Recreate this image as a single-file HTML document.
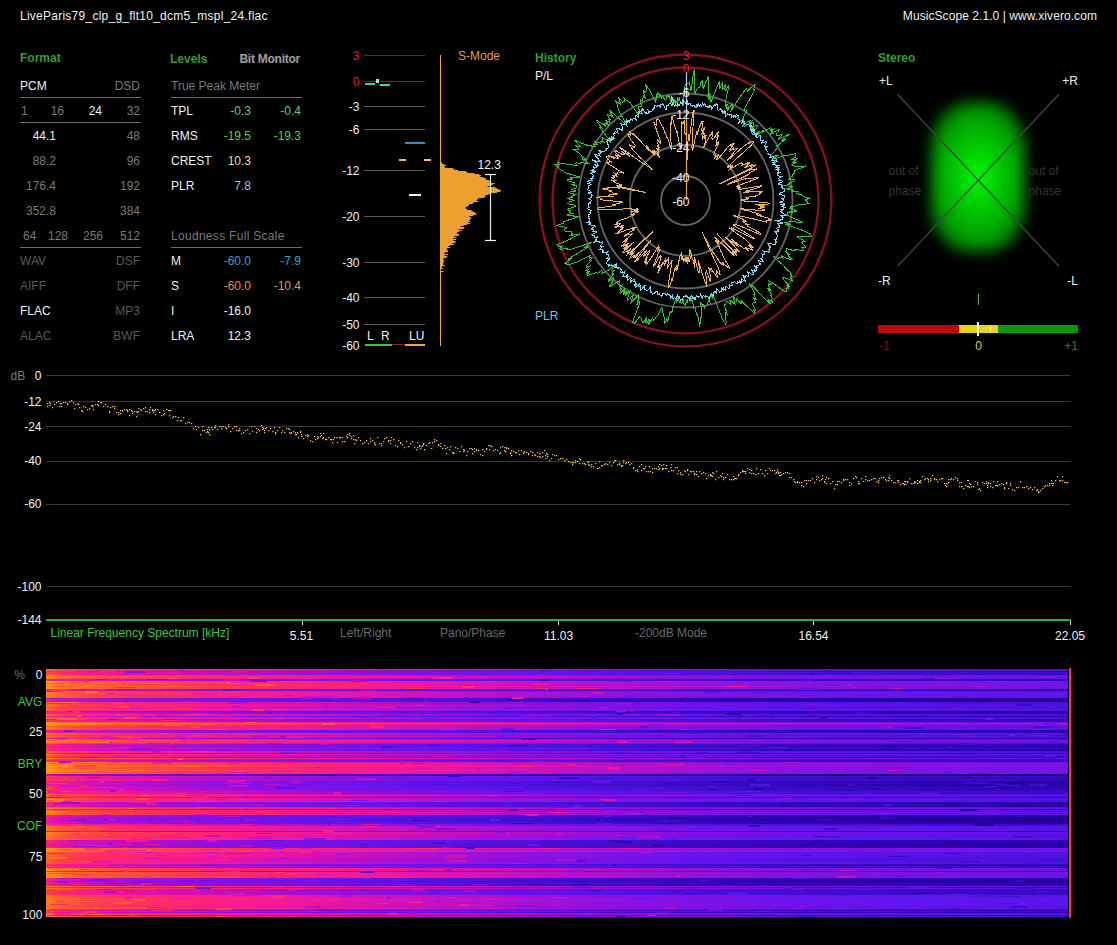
<!DOCTYPE html>
<html><head><meta charset="utf-8"><style>
html,body{margin:0;padding:0;background:#000;width:1117px;height:945px;overflow:hidden;}
body{position:relative;font-family:"Liberation Sans", sans-serif;}
.t{position:absolute;white-space:nowrap;}
.r{position:absolute;}
.s{position:absolute;overflow:visible;}
</style></head><body>
<div class="t" style="top:9.84px;font-size:12px;line-height:12px;color:#f0f0f0;letter-spacing:0.25px;left:20px;">LiveParis79_clp_g_flt10_dcm5_mspl_24.flac</div>
<div class="t" style="top:9.84px;font-size:12px;line-height:12px;color:#f0f0f0;letter-spacing:0.07px;right:20px;text-align:right;">MusicScope 2.1.0 | www.xivero.com</div>
<div class="t" style="top:51.84px;font-size:12px;line-height:12px;color:#2f9e2f;font-weight:bold;left:20px;">Format</div>
<div class="t" style="top:80.34px;font-size:12px;line-height:12px;color:#f0f0f0;left:20px;">PCM</div>
<div class="t" style="top:80.34px;font-size:12px;line-height:12px;color:#7a7a7a;right:977px;text-align:right;">DSD</div>
<div class="r" style="left:20px;top:97px;width:121px;height:1px;background:#6c6c6c;"></div>
<div class="t" style="top:104.84px;font-size:12px;line-height:12px;color:#7a7a7a;left:21px;">1</div>
<div class="t" style="top:104.84px;font-size:12px;line-height:12px;color:#7a7a7a;right:1053px;text-align:right;">16</div>
<div class="t" style="top:104.84px;font-size:12px;line-height:12px;color:#f0f0f0;right:1015px;text-align:right;">24</div>
<div class="t" style="top:104.84px;font-size:12px;line-height:12px;color:#7a7a7a;right:977px;text-align:right;">32</div>
<div class="r" style="left:20px;top:122px;width:121px;height:1px;background:#6c6c6c;"></div>
<div class="t" style="top:129.84px;font-size:12px;line-height:12px;color:#f0f0f0;right:1061px;text-align:right;">44.1</div>
<div class="t" style="top:129.84px;font-size:12px;line-height:12px;color:#7a7a7a;right:977px;text-align:right;">48</div>
<div class="t" style="top:154.84px;font-size:12px;line-height:12px;color:#7a7a7a;right:1061px;text-align:right;">88.2</div>
<div class="t" style="top:154.84px;font-size:12px;line-height:12px;color:#7a7a7a;right:977px;text-align:right;">96</div>
<div class="t" style="top:179.84px;font-size:12px;line-height:12px;color:#7a7a7a;right:1061px;text-align:right;">176.4</div>
<div class="t" style="top:179.84px;font-size:12px;line-height:12px;color:#7a7a7a;right:977px;text-align:right;">192</div>
<div class="t" style="top:204.84px;font-size:12px;line-height:12px;color:#7a7a7a;right:1061px;text-align:right;">352.8</div>
<div class="t" style="top:204.84px;font-size:12px;line-height:12px;color:#7a7a7a;right:977px;text-align:right;">384</div>
<div class="t" style="top:229.84px;font-size:12px;line-height:12px;color:#7a7a7a;left:23px;">64</div>
<div class="t" style="top:229.84px;font-size:12px;line-height:12px;color:#7a7a7a;right:1049px;text-align:right;">128</div>
<div class="t" style="top:229.84px;font-size:12px;line-height:12px;color:#7a7a7a;right:1014px;text-align:right;">256</div>
<div class="t" style="top:229.84px;font-size:12px;line-height:12px;color:#7a7a7a;right:977px;text-align:right;">512</div>
<div class="r" style="left:20px;top:247px;width:121px;height:1px;background:#6c6c6c;"></div>
<div class="t" style="top:254.84px;font-size:12px;line-height:12px;color:#5a5a5a;left:20px;">WAV</div>
<div class="t" style="top:254.84px;font-size:12px;line-height:12px;color:#5a5a5a;right:977px;text-align:right;">DSF</div>
<div class="t" style="top:279.84px;font-size:12px;line-height:12px;color:#5a5a5a;left:20px;">AIFF</div>
<div class="t" style="top:279.84px;font-size:12px;line-height:12px;color:#5a5a5a;right:977px;text-align:right;">DFF</div>
<div class="t" style="top:304.84px;font-size:12px;line-height:12px;color:#f0f0f0;left:20px;">FLAC</div>
<div class="t" style="top:304.84px;font-size:12px;line-height:12px;color:#5a5a5a;right:977px;text-align:right;">MP3</div>
<div class="t" style="top:329.84px;font-size:12px;line-height:12px;color:#5a5a5a;left:20px;">ALAC</div>
<div class="t" style="top:329.84px;font-size:12px;line-height:12px;color:#5a5a5a;right:977px;text-align:right;">BWF</div>
<div class="t" style="top:52.84px;font-size:12px;line-height:12px;color:#2f9e2f;font-weight:bold;left:170px;">Levels</div>
<div class="t" style="top:52.84px;font-size:12px;line-height:12px;color:#a0a0a0;font-weight:bold;letter-spacing:-0.25px;right:817px;text-align:right;">Bit Monitor</div>
<div class="t" style="top:80.34px;font-size:12px;line-height:12px;color:#7a7a7a;left:171px;">True Peak Meter</div>
<div class="r" style="left:171px;top:97px;width:131px;height:1px;background:#6c6c6c;"></div>
<div class="t" style="top:105.44px;font-size:12px;line-height:12px;color:#f0f0f0;left:171px;">TPL</div>
<div class="t" style="top:105.44px;font-size:12px;line-height:12px;color:#62c98a;right:866px;text-align:right;">-0.3</div>
<div class="t" style="top:105.44px;font-size:12px;line-height:12px;color:#62c98a;right:816px;text-align:right;">-0.4</div>
<div class="t" style="top:130.44px;font-size:12px;line-height:12px;color:#f0f0f0;left:171px;">RMS</div>
<div class="t" style="top:130.44px;font-size:12px;line-height:12px;color:#3fd84a;right:866px;text-align:right;">-19.5</div>
<div class="t" style="top:130.44px;font-size:12px;line-height:12px;color:#3fd84a;right:816px;text-align:right;">-19.3</div>
<div class="t" style="top:155.44px;font-size:12px;line-height:12px;color:#f0f0f0;left:171px;">CREST</div>
<div class="t" style="top:155.44px;font-size:12px;line-height:12px;color:#e8dca8;right:866px;text-align:right;">10.3</div>
<div class="t" style="top:180.44px;font-size:12px;line-height:12px;color:#f0f0f0;left:171px;">PLR</div>
<div class="t" style="top:180.44px;font-size:12px;line-height:12px;color:#8cc8ea;right:866px;text-align:right;">7.8</div>
<div class="t" style="top:229.54px;font-size:12px;line-height:12px;color:#7a7a7a;letter-spacing:0.3px;left:171px;">Loudness Full Scale</div>
<div class="r" style="left:171px;top:247px;width:131px;height:1px;background:#6c6c6c;"></div>
<div class="t" style="top:254.84px;font-size:12px;line-height:12px;color:#f0f0f0;left:171px;">M</div>
<div class="t" style="top:254.84px;font-size:12px;line-height:12px;color:#3a9fd4;right:866px;text-align:right;">-60.0</div>
<div class="t" style="top:254.84px;font-size:12px;line-height:12px;color:#3a9fd4;right:816px;text-align:right;">-7.9</div>
<div class="t" style="top:279.84px;font-size:12px;line-height:12px;color:#f0f0f0;left:171px;">S</div>
<div class="t" style="top:279.84px;font-size:12px;line-height:12px;color:#e0964e;right:866px;text-align:right;">-60.0</div>
<div class="t" style="top:279.84px;font-size:12px;line-height:12px;color:#e0964e;right:816px;text-align:right;">-10.4</div>
<div class="t" style="top:304.84px;font-size:12px;line-height:12px;color:#f0f0f0;left:171px;">I</div>
<div class="t" style="top:304.84px;font-size:12px;line-height:12px;color:#f0f0f0;right:866px;text-align:right;">-16.0</div>
<div class="t" style="top:329.84px;font-size:12px;line-height:12px;color:#f0f0f0;left:171px;">LRA</div>
<div class="t" style="top:329.84px;font-size:12px;line-height:12px;color:#f0f0f0;right:866px;text-align:right;">12.3</div>
<div class="t" style="top:50.04px;font-size:12px;line-height:12px;color:#e02020;right:757.5px;text-align:right;">3</div>
<div class="r" style="left:364px;top:55px;width:61px;height:1px;background:#8a1818;"></div>
<div class="t" style="top:76.14px;font-size:12px;line-height:12px;color:#e02020;right:757.5px;text-align:right;">0</div>
<div class="r" style="left:364px;top:81px;width:61px;height:1px;background:#8a1818;"></div>
<div class="t" style="top:101.14px;font-size:12px;line-height:12px;color:#f0f0f0;right:757.5px;text-align:right;">-3</div>
<div class="r" style="left:364px;top:106px;width:61px;height:1px;background:#5a5a5a;"></div>
<div class="t" style="top:124.34px;font-size:12px;line-height:12px;color:#f0f0f0;right:757.5px;text-align:right;">-6</div>
<div class="r" style="left:364px;top:129px;width:61px;height:1px;background:#5a5a5a;"></div>
<div class="t" style="top:165.34px;font-size:12px;line-height:12px;color:#f0f0f0;right:757.5px;text-align:right;">-12</div>
<div class="r" style="left:364px;top:170px;width:61px;height:1px;background:#5a5a5a;"></div>
<div class="t" style="top:211.24px;font-size:12px;line-height:12px;color:#f0f0f0;right:757.5px;text-align:right;">-20</div>
<div class="r" style="left:364px;top:216px;width:61px;height:1px;background:#5a5a5a;"></div>
<div class="t" style="top:257.44px;font-size:12px;line-height:12px;color:#f0f0f0;right:757.5px;text-align:right;">-30</div>
<div class="r" style="left:364px;top:262px;width:61px;height:1px;background:#5a5a5a;"></div>
<div class="t" style="top:292.34px;font-size:12px;line-height:12px;color:#f0f0f0;right:757.5px;text-align:right;">-40</div>
<div class="r" style="left:364px;top:297px;width:61px;height:1px;background:#5a5a5a;"></div>
<div class="t" style="top:319.24px;font-size:12px;line-height:12px;color:#f0f0f0;right:757.5px;text-align:right;">-50</div>
<div class="r" style="left:364px;top:324px;width:61px;height:1px;background:#5a5a5a;"></div>
<div class="t" style="top:339.84px;font-size:12px;line-height:12px;color:#f0f0f0;right:757.5px;text-align:right;">-60</div>
<div class="r" style="left:365px;top:83px;width:10px;height:2px;background:#3ad890;"></div>
<div class="r" style="left:380px;top:84px;width:10px;height:2px;background:#3ad890;"></div>
<div class="r" style="left:376px;top:79px;width:3px;height:4px;background:#9ee8e0;"></div>
<div class="r" style="left:405px;top:142px;width:20px;height:2px;background:#2a8fc0;"></div>
<div class="r" style="left:399px;top:159px;width:7px;height:2px;background:#e8b890;"></div>
<div class="r" style="left:424px;top:159px;width:7px;height:2px;background:#e8b890;"></div>
<div class="r" style="left:409px;top:194px;width:12px;height:2px;background:#f8f8f8;"></div>
<div class="t" style="top:329.54px;font-size:12px;line-height:12px;color:#f0f0f0;left:367px;">L</div>
<div class="t" style="top:329.54px;font-size:12px;line-height:12px;color:#f0f0f0;left:381px;">R</div>
<div class="t" style="top:329.54px;font-size:12px;line-height:12px;color:#f0f0f0;left:409px;">LU</div>
<div class="r" style="left:365px;top:344px;width:27px;height:2px;background:#3cc83c;"></div>
<div class="r" style="left:392px;top:344px;width:13px;height:1px;background:#7a2a2a;"></div>
<div class="r" style="left:405px;top:344px;width:20px;height:2px;background:#f0a838;"></div>
<div class="r" style="left:440px;top:55px;width:1px;height:291px;background:#e8a838;"></div>
<svg class="s" style="left:0;top:0" width="1117" height="945"><polygon points="441,161 441.0,161.0 441.0,162.0 441.9,162.0 441.9,163.0 442.2,163.0 442.2,164.0 444.5,164.0 444.5,165.0 445.8,165.0 445.8,166.0 444.2,166.0 444.2,167.0 445.1,167.0 445.1,168.0 453.2,168.0 453.2,169.0 454.4,169.0 454.4,170.0 458.3,170.0 458.3,171.0 466.1,171.0 466.1,172.0 467.5,172.0 467.5,173.0 474.5,173.0 474.5,174.0 478.9,174.0 478.9,175.0 480.9,175.0 480.9,176.0 479.8,176.0 479.8,177.0 483.4,177.0 483.4,178.0 485.8,178.0 485.8,179.0 486.1,179.0 486.1,180.0 489.1,180.0 489.1,181.0 490.7,181.0 490.7,182.0 489.6,182.0 489.6,183.0 494.7,183.0 494.7,184.0 492.7,184.0 492.7,185.0 490.1,185.0 490.1,186.0 487.7,186.0 487.7,187.0 495.3,187.0 495.3,188.0 496.9,188.0 496.9,189.0 499.2,189.0 499.2,190.0 501.0,190.0 501.0,191.0 500.3,191.0 500.3,192.0 497.2,192.0 497.2,193.0 490.5,193.0 490.5,194.0 488.5,194.0 488.5,195.0 485.1,195.0 485.1,196.0 485.8,196.0 485.8,197.0 483.9,197.0 483.9,198.0 478.7,198.0 478.7,199.0 477.5,199.0 477.5,200.0 476.6,200.0 476.6,201.0 478.5,201.0 478.5,202.0 473.8,202.0 473.8,203.0 472.7,203.0 472.7,204.0 469.0,204.0 469.0,205.0 468.9,205.0 468.9,206.0 467.1,206.0 467.1,207.0 465.8,207.0 465.8,208.0 465.8,208.0 465.8,209.0 467.2,209.0 467.2,210.0 471.4,210.0 471.4,211.0 472.9,211.0 472.9,212.0 475.0,212.0 475.0,213.0 475.5,213.0 475.5,214.0 476.5,214.0 476.5,215.0 473.3,215.0 473.3,216.0 469.2,216.0 469.2,217.0 471.1,217.0 471.1,218.0 470.4,218.0 470.4,219.0 470.5,219.0 470.5,220.0 469.1,220.0 469.1,221.0 470.2,221.0 470.2,222.0 468.1,222.0 468.1,223.0 470.4,223.0 470.4,224.0 467.2,224.0 467.2,225.0 463.8,225.0 463.8,226.0 460.8,226.0 460.8,227.0 464.1,227.0 464.1,228.0 464.1,228.0 464.1,229.0 458.9,229.0 458.9,230.0 461.7,230.0 461.7,231.0 459.0,231.0 459.0,232.0 457.0,232.0 457.0,233.0 457.0,233.0 457.0,234.0 458.9,234.0 458.9,235.0 458.9,235.0 458.9,236.0 454.3,236.0 454.3,237.0 456.6,237.0 456.6,238.0 453.3,238.0 453.3,239.0 456.1,239.0 456.1,240.0 453.5,240.0 453.5,241.0 455.6,241.0 455.6,242.0 455.4,242.0 455.4,243.0 452.4,243.0 452.4,244.0 454.2,244.0 454.2,245.0 450.0,245.0 450.0,246.0 448.3,246.0 448.3,247.0 450.3,247.0 450.3,248.0 446.9,248.0 446.9,249.0 447.2,249.0 447.2,250.0 447.6,250.0 447.6,251.0 448.1,251.0 448.1,252.0 445.3,252.0 445.3,253.0 444.2,253.0 444.2,254.0 447.8,254.0 447.8,255.0 444.6,255.0 444.6,256.0 447.3,256.0 447.3,257.0 446.5,257.0 446.5,258.0 443.4,258.0 443.4,259.0 443.6,259.0 443.6,260.0 443.7,260.0 443.7,261.0 444.0,261.0 444.0,262.0 443.6,262.0 443.6,263.0 443.2,263.0 443.2,264.0 443.3,264.0 443.3,265.0 444.6,265.0 444.6,266.0 442.3,266.0 442.3,267.0 441.7,267.0 441.7,268.0 442.9,268.0 442.9,269.0 441.0,269.0 441.0,270.0 441.0,270.0 441.0,271.0 443.5,271.0 443.5,272.0 441,272" fill="#eba030"/><g stroke="#f0f0f0" stroke-width="1.2"><line x1="490.5" y1="174" x2="490.5" y2="240.5"/><line x1="485" y1="174.5" x2="496" y2="174.5"/><line x1="485" y1="240.5" x2="496" y2="240.5"/></g></svg>
<div class="t" style="top:159.34px;font-size:12px;line-height:12px;color:#f0f0f0;left:477.5px;">12.3</div>
<div class="t" style="top:49.84px;font-size:12px;line-height:12px;color:#e09a58;left:458px;">S-Mode</div>
<div class="t" style="top:51.84px;font-size:12px;line-height:12px;color:#2f9e2f;font-weight:bold;left:535px;">History</div>
<div class="t" style="top:69.64px;font-size:12px;line-height:12px;color:#f0f0f0;left:535px;">P/L</div>
<div class="t" style="top:310.14px;font-size:12px;line-height:12px;color:#7cc0e8;left:535px;">PLR</div>
<svg class="s" style="left:0;top:0" width="1117" height="945"><circle cx="685.5" cy="200.5" r="146" fill="none" stroke="#84121e" stroke-width="2.4"/><circle cx="685.5" cy="200.5" r="133" fill="none" stroke="#84121e" stroke-width="2.4"/><circle cx="685.5" cy="200.5" r="107" fill="none" stroke="#626662" stroke-width="1.8"/><circle cx="685.5" cy="200.5" r="88" fill="none" stroke="#626662" stroke-width="1.8"/><circle cx="685.5" cy="200.5" r="55.5" fill="none" stroke="#626662" stroke-width="1.8"/><circle cx="685.5" cy="200.5" r="24.5" fill="none" stroke="#626662" stroke-width="1.8"/><polyline points="685.5,83.9 686.5,84.5 687.5,83.7 688.6,84.0 689.7,81.4 690.3,90.6 691.3,89.3 693.3,73.7 694.7,69.5 694.5,85.6 694.9,93.5 696.1,90.5 697.3,88.3 698.4,87.5 699.4,87.6 701.1,82.3 702.3,81.3 702.6,86.1 703.2,88.8 705.0,83.8 706.5,81.5 708.6,75.9 708.4,82.5 709.0,85.2 707.8,95.5 709.1,93.9 708.7,99.9 711.0,94.5 710.5,100.1 710.7,103.2 714.1,93.9 717.0,86.8 719.9,80.7 719.3,86.3 719.8,88.4 722.8,82.3 722.8,85.8 722.9,88.6 725.6,84.1 724.9,89.1 725.4,90.7 728.1,86.5 728.3,89.0 726.2,97.1 725.7,101.1 725.2,104.6 725.5,106.3 727.6,103.8 726.1,109.2 728.5,106.1 727.5,110.4 730.6,106.0 732.6,103.9 732.5,106.2 730.6,112.0 737.9,99.9 742.1,94.0 746.4,88.4 747.0,89.5 747.3,91.3 750.3,88.2 752.6,86.5 755.5,83.9 753.3,89.8 754.8,89.7 747.9,102.5 743.6,111.1 745.9,109.3 746.1,110.6 746.2,112.1 742.0,119.9 744.1,118.4 741.5,123.4 743.3,122.5 743.5,123.5 742.7,125.9 746.3,122.7 748.6,121.1 750.5,120.3 749.0,123.5 752.0,121.2 750.8,124.0 753.4,122.3 753.5,123.6 753.6,124.9 750.6,129.5 755.6,125.4 756.6,125.6 757.5,126.0 756.2,128.6 753.3,132.7 752.5,134.6 754.5,133.9 757.7,132.0 759.0,131.9 757.4,134.7 763.5,130.3 763.1,131.9 766.9,129.8 770.8,127.6 771.4,128.4 770.2,130.6 773.7,129.1 771.6,132.0 770.3,134.3 776.8,130.4 779.4,129.7 777.5,132.4 776.2,134.6 776.9,135.3 778.2,135.6 782.0,134.2 781.0,136.1 778.0,139.3 784.4,136.3 789.8,134.1 781.2,140.7 785.9,139.0 779.8,143.8 777.0,146.6 777.3,147.5 776.6,149.0 774.7,151.1 773.3,152.8 770.2,155.5 770.3,156.3 772.1,156.4 775.3,155.7 777.4,155.7 772.3,159.1 775.7,158.4 783.9,155.6 786.0,155.7 791.8,154.3 795.6,153.8 795.0,155.2 795.5,156.1 795.2,157.3 791.2,159.9 796.6,159.0 795.3,160.5 792.8,162.5 796.7,162.2 791.5,165.0 793.5,165.4 794.1,166.3 796.5,166.6 799.0,166.9 806.3,165.9 796.0,169.9 794.1,171.4 794.3,172.4 794.5,173.3 791.9,175.0 792.7,175.8 791.1,177.1 790.8,178.1 789.0,179.4 793.3,179.5 795.0,180.2 792.8,181.6 788.5,183.3 789.5,184.0 785.3,185.6 788.1,186.1 792.4,186.4 791.5,187.5 786.9,188.9 788.1,189.7 793.8,190.1 792.2,191.2 798.7,191.6 798.6,192.6 795.7,193.8 801.6,194.4 801.8,195.4 803.9,196.4 806.0,197.3 810.0,198.3 806.1,199.4 805.5,200.5 807.9,201.6 807.6,202.6 809.0,203.7 801.2,204.5 796.2,205.3 794.6,206.2 789.9,206.9 793.3,208.0 790.1,208.7 794.4,210.0 797.3,211.3 790.1,211.5 792.3,212.7 787.2,213.0 787.7,214.0 785.0,214.5 789.1,216.0 791.0,217.2 794.7,218.8 799.8,220.7 801.5,222.0 796.2,222.0 789.9,221.8 786.9,222.1 784.3,222.4 790.6,224.8 784.9,224.4 798.9,228.8 804.4,231.3 808.8,233.5 811.7,235.5 811.0,236.5 806.7,236.4 804.0,236.7 800.1,236.6 796.7,236.6 802.2,239.6 805.4,241.8 802.4,241.9 801.7,242.8 804.0,244.8 805.9,246.7 805.4,247.7 801.5,247.4 803.7,249.5 803.6,250.6 800.0,250.3 794.9,249.2 795.8,250.7 791.9,250.1 786.1,248.5 786.9,249.9 787.0,251.1 785.7,251.5 788.9,254.3 787.7,254.8 789.3,256.8 791.8,259.4 789.8,259.5 781.8,256.1 783.0,257.9 779.9,257.2 778.7,257.6 778.4,258.5 773.3,256.4 776.2,259.4 782.6,264.7 785.5,268.0 790.3,272.5 791.0,274.4 792.5,276.8 790.3,276.7 791.1,278.7 792.4,281.1 787.1,278.5 784.4,277.8 782.7,277.8 784.3,280.5 789.5,286.3 786.6,285.4 788.9,288.8 786.3,288.1 786.1,289.5 786.6,291.5 785.0,291.7 778.6,287.3 772.1,282.7 769.1,281.2 771.1,284.6 768.8,283.8 768.5,284.9 768.7,286.6 771.3,290.9 767.3,288.2 771.9,294.8 770.9,295.3 772.1,298.4 771.7,299.6 772.1,301.8 768.5,299.5 770.6,303.8 765.7,299.5 758.2,291.9 752.2,285.8 748.7,282.8 753.8,291.2 754.9,294.3 754.0,294.8 756.3,299.8 753.1,297.1 755.6,302.5 754.0,302.1 753.1,302.6 752.7,304.1 755.5,310.3 753.9,310.0 754.7,313.3 751.6,310.6 748.8,308.0 746.2,305.6 743.5,303.1 740.7,300.1 741.7,303.9 739.8,302.5 736.3,298.1 736.7,301.0 733.7,297.1 733.8,299.5 735.0,304.2 732.9,302.3 731.0,300.3 729.9,300.3 731.0,305.1 728.9,302.7 727.4,301.8 726.4,301.7 726.0,303.4 725.3,304.3 724.6,305.1 727.3,315.4 725.2,312.7 725.4,316.4 726.3,322.5 725.7,324.2 723.6,321.4 719.5,311.6 715.2,300.6 712.8,295.8 712.6,298.3 711.0,295.6 710.5,297.2 709.5,296.9 710.0,302.4 708.6,300.7 708.0,302.1 707.7,304.8 706.8,305.4 706.0,306.1 705.1,306.3 704.4,307.7 702.9,304.2 702.1,305.3 700.7,302.1 702.0,317.9 700.9,317.8 700.2,320.4 699.9,327.1 697.5,314.3 696.5,314.5 694.8,307.1 693.9,307.9 692.6,301.9 691.6,299.5 690.8,301.8 689.8,298.9 688.9,297.4 688.1,298.0 687.3,303.4 686.4,300.5 685.5,305.6 684.6,304.5 683.7,303.3 682.9,298.3 681.9,303.3 681.0,303.1 680.3,300.4 679.2,302.9 678.7,297.6 677.8,298.5 676.6,302.4 676.0,298.7 674.9,301.7 673.5,305.6 671.8,312.3 671.0,311.0 669.7,313.0 667.3,322.3 666.7,319.3 664.8,323.9 664.7,318.6 663.9,317.0 663.6,313.3 662.7,312.5 662.5,308.8 661.7,308.0 660.1,310.5 657.8,315.8 656.7,316.0 654.7,319.7 653.4,320.4 652.9,318.2 651.1,320.3 648.7,324.8 649.3,319.0 647.0,322.6 645.8,322.8 646.3,317.5 643.6,322.2 642.3,322.5 641.9,320.3 641.5,318.2 640.4,317.9 639.9,316.3 637.4,319.6 634.7,323.1 633.7,322.5 632.3,322.9 639.0,304.9 639.6,301.3 636.9,304.7 638.3,299.5 638.3,297.2 638.3,295.2 636.2,297.2 633.8,299.9 631.2,302.5 631.9,299.3 633.3,294.7 630.3,298.1 627.8,300.4 627.1,299.6 628.4,295.6 629.9,291.3 628.1,292.3 625.1,295.3 626.8,290.8 623.2,294.6 624.0,291.6 625.3,288.1 620.7,293.1 619.5,293.0 621.6,288.5 619.7,289.4 621.7,285.2 619.3,286.8 619.2,285.3 618.6,284.5 619.5,282.0 619.5,280.6 616.5,282.7 614.6,283.5 610.9,286.3 609.3,286.6 612.8,281.3 613.1,279.5 613.2,278.0 608.9,281.2 608.4,280.4 614.1,273.2 611.3,274.7 614.1,270.7 612.1,271.4 611.9,270.4 615.7,265.6 614.0,266.0 607.4,270.9 604.2,272.4 601.8,273.3 602.5,271.4 601.7,270.8 597.5,273.1 596.5,272.6 593.5,273.6 591.2,274.1 587.8,275.4 586.9,274.8 589.5,271.5 586.7,272.3 588.1,270.0 585.4,270.6 590.7,265.6 586.1,267.5 586.0,266.3 588.2,263.7 591.0,260.7 589.6,260.4 592.5,257.5 589.6,258.1 589.8,256.9 590.3,255.5 576.7,262.1 570.4,264.3 567.5,264.6 566.3,263.9 564.9,263.3 571.5,258.6 567.6,259.3 580.1,251.9 588.3,246.8 585.5,247.1 588.0,244.9 591.9,242.2 580.5,246.1 568.8,250.0 567.0,249.6 567.5,248.2 562.0,249.2 559.5,248.9 561.5,246.9 557.7,247.0 559.0,245.3 557.2,244.7 570.7,238.9 575.7,236.2 579.9,233.8 569.5,236.0 572.4,234.0 571.5,233.2 572.0,232.0 571.7,231.0 566.1,231.4 564.4,230.7 564.1,229.6 566.7,227.9 564.3,227.4 563.2,226.5 559.5,226.1 556.6,225.6 564.3,223.0 562.9,222.1 568.2,220.1 575.5,217.9 580.0,216.3 574.2,216.1 570.5,215.6 566.8,215.1 572.3,213.4 570.4,212.6 569.3,211.7 570.1,210.6 567.2,209.8 568.9,208.7 573.2,207.4 575.5,206.3 575.8,205.3 570.6,204.5 567.9,203.6 569.5,202.5 569.4,201.5 574.8,200.5 570.7,199.5 567.1,198.4 572.5,197.5 571.8,196.5 573.1,195.6 575.8,194.7 572.2,193.6 568.2,192.3 572.6,191.6 576.0,190.9 571.9,189.6 573.5,188.7 576.1,188.0 576.6,187.1 577.1,186.2 570.7,184.4 575.2,184.0 574.6,182.9 568.3,180.9 567.5,179.7 573.2,179.7 570.3,178.1 571.9,177.4 575.9,177.2 580.2,177.2 565.2,172.7 563.0,171.1 558.9,168.9 557.9,167.5 558.5,166.5 554.4,164.2 559.5,164.4 557.1,162.5 566.8,164.2 572.8,165.0 577.2,165.3 575.9,163.8 576.0,162.8 580.4,163.3 580.8,162.4 586.7,163.5 588.9,163.4 583.8,160.4 582.6,158.9 586.7,159.6 581.0,156.1 581.5,155.3 579.7,153.4 573.1,149.3 575.9,149.4 578.6,149.5 578.3,148.2 575.1,145.5 580.1,146.8 579.6,145.3 577.0,142.8 574.3,140.1 583.4,143.9 588.9,145.8 590.8,145.8 594.5,146.9 595.4,146.4 592.7,143.6 596.5,144.9 597.6,144.5 594.6,141.4 598.1,142.6 600.7,143.3 601.5,142.8 600.7,141.2 604.8,142.9 602.0,139.8 602.8,139.3 601.3,137.0 606.5,139.9 610.6,142.0 610.4,140.8 606.1,136.2 604.7,133.9 602.5,130.8 599.9,127.4 602.0,127.9 598.0,123.1 596.4,120.3 601.0,123.1 605.7,126.1 604.5,123.6 606.1,123.8 609.4,125.7 605.2,120.2 607.9,121.6 610.1,122.5 608.6,119.5 610.0,119.5 607.1,114.9 608.2,114.6 610.5,115.7 612.9,117.0 610.6,112.8 609.6,110.1 615.2,115.2 619.2,118.6 622.9,121.8 624.5,122.5 625.7,122.5 621.2,115.1 618.8,110.3 617.7,107.2 617.5,105.2 615.5,100.6 618.5,103.0 620.6,104.3 619.9,101.5 618.6,97.5 622.7,102.0 623.5,101.2 624.9,101.6 624.1,98.2 626.7,100.7 628.0,101.0 630.4,103.0 635.9,111.1 639.0,114.8 637.8,110.7 640.4,113.8 638.8,108.9 638.6,106.5 639.5,106.1 640.9,107.0 641.7,106.6 640.7,102.2 640.4,99.2 642.4,101.3 642.9,100.3 643.0,97.9 643.2,95.7 645.5,99.0 643.0,89.9 645.2,92.7 645.7,91.2 646.6,90.5 645.5,84.4 647.6,87.3 649.6,90.0 652.9,97.1 655.2,101.4 655.5,99.1 656.5,99.4 656.1,94.4 657.5,96.1 657.7,93.2 659.3,95.2 660.1,94.7 661.9,98.2 662.2,95.3 663.7,98.1 665.1,100.2 666.0,99.9 666.6,98.4 667.0,95.6 668.1,96.3 668.8,94.9 670.8,102.2 671.6,101.8 672.8,104.3 673.5,102.7 673.9,98.7 675.4,104.1 675.9,100.7 677.0,102.8 677.4,98.0 678.5,99.7 679.2,97.8 680.4,103.0 681.2,102.8 682.1,103.2 683.0,106.4 683.7,98.5 684.5,87.9 685.5,83.9" fill="none" stroke="#38c038" stroke-width="1" shape-rendering="optimizeSpeed"/><polyline points="685.5,103.0 686.3,103.7 687.2,100.4 688.0,104.8 688.9,103.5 689.8,103.0 690.5,104.9 691.3,105.6 692.1,105.5 692.9,106.2 693.8,105.5 694.6,106.0 695.3,107.4 696.4,105.1 696.9,107.3 698.3,103.0 698.8,105.6 699.6,106.1 700.7,104.7 701.2,106.7 702.7,103.1 703.1,105.8 704.3,103.6 705.1,104.4 705.5,106.3 706.3,106.9 707.2,106.6 707.8,107.7 709.2,105.6 709.7,106.9 710.8,105.9 711.6,106.3 711.7,109.1 713.3,106.5 715.0,104.2 715.5,105.4 716.9,103.8 717.4,105.0 717.8,106.6 717.8,109.4 718.2,110.7 719.4,109.9 720.7,108.9 721.5,109.1 721.5,111.3 722.8,110.3 722.5,113.3 724.9,109.9 723.9,114.2 725.9,111.8 725.8,114.1 725.8,116.1 727.8,113.8 728.5,114.3 729.5,114.1 729.9,115.2 731.2,114.6 731.7,115.4 731.7,117.2 733.8,115.0 733.9,116.7 736.0,114.8 735.0,118.1 737.5,115.6 738.4,115.8 737.9,118.2 738.1,119.4 739.2,119.3 739.2,120.9 738.8,123.0 741.5,120.5 742.3,120.9 742.0,122.8 744.1,121.3 744.4,122.3 745.1,122.9 743.7,126.0 744.4,126.4 747.3,124.1 748.3,124.3 749.9,123.8 750.7,124.2 749.4,126.9 751.4,126.0 750.8,128.0 750.0,130.1 750.9,130.4 753.7,128.7 751.1,132.6 755.1,129.7 753.0,133.0 754.8,132.4 753.6,134.7 754.7,134.8 757.0,133.8 755.2,136.7 756.3,136.7 756.4,137.8 760.5,135.3 760.0,136.9 761.1,137.1 760.1,139.0 760.4,139.8 760.8,140.6 761.7,141.0 763.2,140.9 761.0,143.6 764.4,142.1 766.1,141.9 766.2,142.9 765.6,144.4 764.4,146.3 765.2,146.7 766.8,146.7 765.1,148.8 765.0,149.9 766.6,149.8 766.6,150.8 767.1,151.4 767.0,152.5 767.0,153.4 768.3,153.7 768.7,154.4 769.8,154.7 771.0,155.0 770.5,156.2 769.6,157.7 773.2,156.8 773.4,157.6 774.3,158.1 772.0,160.2 773.4,160.4 776.6,159.9 773.3,162.3 776.2,162.0 773.3,164.1 775.5,164.1 775.1,165.2 775.9,165.8 778.4,165.8 775.4,167.8 779.7,167.1 776.9,169.0 779.8,169.0 778.1,170.4 779.0,171.0 777.8,172.3 780.3,172.4 777.0,174.3 777.4,175.0 778.7,175.5 779.2,176.3 781.5,176.6 778.5,178.2 778.9,178.9 779.4,179.7 778.8,180.7 781.8,180.9 782.4,181.7 779.4,183.1 778.6,184.1 781.7,184.4 782.1,185.2 781.1,186.2 782.4,186.9 781.6,187.9 784.7,188.3 784.2,189.3 784.7,190.1 784.6,191.0 782.8,192.0 780.6,193.0 779.5,193.9 780.3,194.7 784.1,195.3 784.5,196.2 784.9,197.0 784.6,197.9 781.5,198.8 783.4,199.6 783.8,200.5 782.0,201.3 780.1,202.2 782.6,203.0 785.1,204.0 781.4,204.7 784.3,205.7 781.3,206.4 784.9,207.4 783.0,208.2 783.4,209.1 781.1,209.7 782.8,210.7 780.6,211.3 782.1,212.4 782.1,213.2 784.7,214.4 785.5,215.5 780.9,215.6 782.0,216.6 783.2,217.7 782.8,218.5 782.5,219.4 780.6,219.9 781.0,220.8 774.4,220.2 782.9,223.0 779.9,223.2 777.1,223.3 778.4,224.5 778.9,225.5 779.9,226.7 779.4,227.4 778.2,227.9 776.1,228.2 778.2,229.7 778.0,230.6 778.1,231.5 775.0,231.3 776.4,232.7 776.3,233.5 776.6,234.6 777.5,235.8 777.3,236.7 776.8,237.4 776.0,238.0 776.5,239.1 774.3,239.1 775.0,240.3 776.8,242.1 775.4,242.4 775.9,243.6 775.3,244.3 773.4,244.3 769.8,243.4 768.0,243.5 768.4,244.6 769.7,246.2 770.8,247.8 769.5,248.0 769.7,249.1 768.4,249.4 769.6,251.0 769.0,251.7 768.3,252.2 764.9,251.1 763.3,251.0 764.7,252.9 764.6,253.9 764.6,254.9 762.0,254.1 762.4,255.3 762.5,256.5 762.7,257.6 762.1,258.2 760.8,258.3 763.9,261.7 761.9,261.3 760.3,261.1 758.1,260.4 759.7,262.8 760.4,264.5 759.3,264.6 758.9,265.4 757.0,264.9 756.5,265.5 757.1,267.3 754.1,265.6 756.5,269.1 756.8,270.5 754.8,269.8 755.2,271.4 753.1,270.5 751.3,269.8 753.5,273.4 753.3,274.5 752.5,274.9 749.1,272.4 747.3,271.6 748.7,274.5 748.8,275.9 748.0,276.3 746.4,275.7 745.3,275.7 745.7,277.5 742.8,275.2 744.9,279.4 745.3,281.3 743.3,280.1 741.3,278.8 742.2,281.5 741.6,282.1 739.3,280.3 740.2,283.1 738.8,282.6 737.2,281.7 737.4,283.6 736.0,283.0 734.4,281.8 733.7,282.4 732.6,282.1 731.7,282.2 732.4,285.2 731.6,285.4 731.1,286.2 729.5,285.0 729.7,287.3 729.3,288.4 728.6,288.8 726.3,286.1 725.4,286.0 725.5,288.3 725.7,290.8 723.9,288.7 723.9,290.9 721.6,287.7 721.4,289.3 721.2,291.1 720.2,291.0 719.8,292.1 718.1,290.1 716.8,288.8 717.0,292.0 716.6,293.5 715.0,291.2 714.7,293.0 713.6,292.5 713.7,295.8 712.6,295.0 711.4,294.0 710.7,294.4 710.2,295.9 709.5,296.7 709.1,298.6 707.7,296.8 706.7,296.2 705.7,295.7 705.2,297.3 704.0,295.9 703.1,295.5 702.7,298.2 701.7,297.3 700.2,293.5 699.9,297.0 699.0,296.5 698.3,297.7 697.3,296.3 696.3,295.6 695.8,298.8 695.1,299.9 694.0,297.6 693.2,299.0 692.2,296.7 691.3,295.5 690.5,296.8 689.8,299.9 688.9,296.9 688.0,297.4 687.2,296.7 686.3,295.4 685.5,295.8 684.7,297.0 683.8,296.9 683.0,297.8 682.0,299.4 681.1,300.2 680.3,300.5 679.6,296.5 678.7,297.1 677.9,296.7 677.2,295.0 676.1,298.4 675.2,298.7 674.5,297.5 673.4,299.3 672.6,298.6 672.2,295.2 670.9,298.3 670.4,295.7 669.5,295.9 669.0,294.3 668.1,294.5 667.4,293.8 666.3,295.1 665.7,293.9 664.9,293.4 664.1,293.0 663.2,293.3 661.7,296.0 661.1,295.0 660.1,295.2 659.6,293.9 658.7,294.0 657.6,294.8 657.6,291.6 657.0,290.8 655.9,291.6 654.4,293.4 653.6,293.1 652.3,294.2 652.0,292.6 651.5,291.5 650.3,292.1 650.4,289.7 650.9,286.1 648.6,289.6 647.4,290.2 646.1,291.0 645.9,289.5 645.2,289.0 644.2,289.0 645.2,284.9 643.1,287.5 640.8,290.1 640.8,288.3 640.6,286.7 640.2,285.7 638.8,286.5 639.1,284.2 637.4,285.6 635.7,286.8 636.1,284.3 634.5,285.4 635.6,281.9 634.7,281.8 633.7,281.8 634.5,279.1 632.8,280.0 630.5,282.1 630.6,280.4 631.2,278.0 630.5,277.6 627.8,280.0 627.5,278.9 628.2,276.5 626.7,277.1 627.3,275.0 625.1,276.5 624.0,276.4 622.6,276.9 624.7,272.9 624.9,271.5 622.3,273.2 622.2,272.1 620.7,272.5 621.1,270.8 621.1,269.6 620.6,268.9 620.0,268.3 619.8,267.4 617.6,268.4 617.8,267.0 616.0,267.6 616.5,266.0 615.0,266.2 616.6,263.6 613.2,265.6 611.8,265.7 611.3,265.0 608.3,266.4 609.3,264.4 608.0,264.4 607.1,264.0 606.9,263.1 606.7,262.1 609.8,258.6 609.8,257.6 607.0,258.6 607.8,257.0 609.0,255.1 607.9,254.8 607.0,254.5 606.7,253.7 607.9,251.9 604.6,253.0 603.2,252.9 602.5,252.3 603.8,250.6 602.1,250.6 602.1,249.6 600.7,249.4 599.5,249.2 603.4,246.0 600.7,246.5 600.5,245.7 602.4,243.8 601.9,243.1 602.4,241.9 599.7,242.4 599.4,241.6 596.8,241.9 594.2,242.1 596.5,240.1 596.0,239.4 597.2,238.0 597.4,237.0 594.0,237.5 594.0,236.5 594.5,235.4 592.8,235.2 592.0,234.5 596.7,232.0 594.7,231.8 593.1,231.4 594.0,230.2 592.9,229.7 591.4,229.3 592.1,228.2 595.2,226.4 594.6,225.7 591.6,225.7 591.1,224.9 588.6,224.7 590.4,223.3 590.1,222.5 587.8,222.2 589.9,220.8 589.6,220.0 589.7,219.1 589.0,218.4 588.2,217.7 589.3,216.6 588.4,215.9 588.3,215.0 590.5,213.8 590.8,213.0 589.7,212.3 590.3,211.3 591.1,210.4 589.3,209.8 587.8,209.0 587.7,208.2 589.1,207.2 588.4,206.4 588.5,205.6 588.3,204.7 588.7,203.9 591.2,203.0 589.7,202.2 590.8,201.3 591.7,200.5 590.6,199.7 588.9,198.8 590.3,198.0 591.8,197.2 591.2,196.4 592.0,195.6 591.6,194.8 591.1,193.9 587.7,192.8 591.3,192.3 590.5,191.4 588.1,190.3 587.7,189.4 588.1,188.5 588.5,187.7 588.4,186.8 587.9,185.9 588.9,185.2 591.4,184.8 588.4,183.4 590.1,182.8 587.7,181.5 588.7,180.8 592.6,180.8 591.9,179.8 590.9,178.7 593.2,178.3 592.3,177.3 592.6,176.5 593.6,175.9 593.0,174.8 590.4,173.2 591.4,172.6 594.2,172.6 591.7,170.9 594.9,171.1 592.5,169.4 594.1,169.0 594.2,168.2 593.6,167.0 596.2,167.1 597.3,166.6 595.2,164.9 598.3,165.3 597.6,164.1 596.7,162.8 591.7,159.7 597.9,161.5 600.3,161.7 598.3,159.9 598.3,158.9 596.4,157.1 595.2,155.5 594.9,154.3 600.2,156.1 599.6,154.8 598.8,153.4 600.2,153.2 601.3,152.9 599.0,150.5 602.1,151.4 604.5,151.8 604.9,151.1 605.3,150.4 606.7,150.3 606.0,148.9 607.5,148.8 607.7,148.0 609.0,147.9 608.9,146.9 608.7,145.7 607.6,143.9 607.3,142.6 606.5,141.0 607.9,141.0 607.9,139.9 610.7,141.0 611.5,140.6 609.9,138.2 613.3,139.9 611.0,136.8 614.0,138.3 613.2,136.5 614.0,136.1 614.1,135.1 613.7,133.6 615.1,133.7 614.9,132.3 615.3,131.5 618.0,133.0 617.9,131.7 616.2,128.7 617.7,129.0 618.5,128.6 620.5,129.5 622.7,130.7 622.2,128.9 622.1,127.6 622.5,126.8 621.0,123.6 622.5,124.1 624.0,124.6 624.2,123.4 627.0,125.6 626.7,123.9 625.9,121.4 627.4,122.0 626.7,119.6 629.4,121.8 629.3,120.3 630.6,120.6 630.7,119.2 632.5,120.4 632.9,119.4 633.3,118.5 634.4,118.8 636.3,120.2 635.6,117.5 635.7,115.9 636.6,115.7 638.6,117.5 637.9,114.7 638.1,113.1 638.4,111.9 639.8,112.7 640.0,111.1 642.2,113.6 641.3,109.9 642.7,110.8 642.7,108.8 646.0,113.9 646.2,112.3 647.7,113.7 648.6,113.6 648.1,110.3 649.8,112.2 650.6,111.9 651.3,111.5 652.0,110.8 652.5,109.9 653.2,109.3 653.4,107.4 654.7,108.4 654.5,105.2 655.6,105.8 657.0,107.2 657.3,105.4 658.1,105.0 659.1,105.4 660.4,106.9 660.6,104.3 661.7,104.9 662.2,103.4 663.5,105.3 664.9,107.7 666.3,110.1 666.1,105.3 666.9,104.9 668.0,106.0 668.6,104.6 669.2,103.3 670.2,103.9 671.1,104.0 672.2,105.8 671.7,96.0 673.6,103.8 674.9,107.3 675.3,103.1 676.4,105.9 677.2,106.0 677.9,103.9 678.8,105.2 679.7,105.9 680.4,102.6 681.3,103.6 682.1,104.1 682.9,99.9 683.8,102.5 684.6,101.6 685.5,103.0" fill="none" stroke="#80d4f0" stroke-width="1" shape-rendering="optimizeSpeed"/><polyline points="685.5,135.1 686.1,134.9 686.5,140.8 687.0,141.4 686.9,161.7 688.4,133.7 688.8,137.8 689.3,139.0 690.3,131.4 692.0,118.1 693.3,110.8 694.1,110.9 692.5,133.9 692.2,141.7 691.9,148.5 692.6,146.7 692.5,150.9 693.7,145.5 695.8,135.5 697.2,130.7 697.1,134.8 699.0,127.9 700.1,125.3 701.7,121.0 701.8,123.9 703.2,120.7 701.7,130.3 702.2,130.9 701.9,134.7 704.5,127.1 702.8,136.0 702.2,140.1 704.3,135.1 704.5,136.4 704.3,139.1 706.2,135.0 705.5,138.8 706.0,139.2 703.5,148.1 705.5,144.2 707.4,140.3 710.4,134.0 710.4,135.6 712.9,131.0 712.4,133.9 712.1,136.2 711.7,138.7 712.4,138.7 712.5,139.8 713.8,138.4 716.7,133.6 718.8,130.8 717.4,135.1 716.7,137.9 718.8,135.1 716.5,140.9 716.2,142.8 717.0,142.5 715.5,146.3 718.3,142.5 718.3,143.7 716.6,147.8 714.8,151.7 713.8,154.4 713.9,155.0 714.2,155.4 715.0,155.0 715.0,155.9 715.0,156.7 714.2,158.7 716.1,156.9 718.6,154.1 717.9,155.9 716.7,158.3 717.6,158.0 717.0,159.4 717.4,159.7 727.4,147.8 730.9,144.5 731.9,144.2 731.5,145.6 734.6,143.1 729.7,149.6 730.7,149.5 729.4,151.7 733.9,147.7 733.4,149.1 734.3,149.0 735.0,149.2 737.4,147.7 736.1,149.9 730.7,156.1 727.2,160.2 729.6,158.7 741.7,148.1 748.6,142.6 748.7,143.6 752.9,140.9 753.4,141.5 753.9,142.0 751.0,145.5 739.0,156.4 733.4,161.7 727.0,167.5 728.1,167.2 731.6,165.1 731.9,165.5 730.6,167.1 730.3,168.0 732.9,166.7 728.3,170.5 737.8,164.5 741.5,162.8 741.2,163.6 742.7,163.3 742.9,163.9 741.9,165.3 743.8,164.8 749.5,162.1 748.3,163.5 750.1,163.2 745.1,166.8 743.8,168.2 750.0,165.5 752.9,164.6 750.5,166.7 755.7,164.7 754.7,166.0 719.4,184.0 752.0,168.8 752.4,169.3 753.0,169.8 756.6,168.9 750.0,172.5 749.2,173.5 748.6,174.4 742.8,177.4 731.9,182.2 727.4,184.4 736.8,181.3 747.3,178.0 746.4,178.9 750.3,178.2 751.9,178.3 755.3,177.8 758.4,177.5 757.0,178.6 746.9,182.3 741.3,184.5 735.9,186.5 739.7,186.0 737.3,187.1 739.3,187.1 739.9,187.4 737.5,188.5 740.3,188.4 738.5,189.2 741.3,189.1 761.7,185.7 761.6,186.4 756.9,187.9 753.8,189.1 745.2,191.1 748.4,191.1 743.3,192.4 751.9,191.8 759.3,191.4 762.0,191.8 760.1,192.7 760.5,193.3 758.6,194.1 759.4,194.7 756.1,195.6 755.5,196.2 745.4,197.4 747.1,197.8 746.5,198.4 749.2,198.8 743.8,199.5 740.8,200.0 744.5,200.5 743.9,201.0 755.1,201.7 766.3,202.6 770.0,203.5 767.4,204.1 755.4,204.2 756.4,204.8 764.5,206.0 760.1,206.4 765.2,207.5 761.0,207.8 758.5,208.2 764.2,209.5 764.6,210.2 764.2,210.9 749.1,209.4 740.4,208.7 742.9,209.6 749.8,211.3 754.9,212.7 759.4,214.2 762.2,215.4 756.0,214.8 768.4,218.1 771.9,219.7 767.9,219.5 770.9,221.0 766.7,220.7 766.4,221.4 766.2,222.1 744.0,216.7 738.9,215.8 737.9,216.0 736.6,216.1 733.5,215.6 742.2,218.9 743.3,219.9 746.4,221.5 745.5,221.8 741.5,220.9 743.4,222.1 749.6,225.1 745.0,223.9 747.8,225.7 747.0,226.0 754.4,229.8 760.5,233.1 760.4,233.9 760.1,234.5 742.2,226.9 736.0,224.6 734.9,224.6 734.4,224.9 732.7,224.5 735.7,226.6 743.6,231.4 751.0,236.1 755.0,239.0 751.0,237.6 742.2,233.3 732.8,228.3 731.2,227.9 733.6,230.0 729.0,227.7 733.8,231.3 744.8,239.0 748.3,242.1 749.2,243.5 750.6,245.2 753.5,248.1 747.5,244.7 752.1,248.9 752.3,250.0 749.6,248.8 747.6,248.1 746.1,247.9 748.6,250.7 744.1,248.0 743.7,248.5 731.6,239.2 737.6,245.0 738.6,246.7 731.6,241.3 729.7,240.3 725.6,237.2 734.5,246.2 739.4,251.7 737.4,250.6 734.6,248.8 735.9,250.9 737.3,253.2 734.3,251.0 716.9,233.6 737.4,256.2 733.8,253.2 731.6,251.7 734.7,256.1 727.9,249.3 723.0,244.5 720.5,242.2 719.6,241.8 718.0,240.7 714.8,237.3 718.9,243.2 718.4,243.4 715.3,240.0 716.5,242.4 719.7,247.5 719.9,248.8 720.3,250.2 722.9,254.9 722.4,255.3 726.9,263.1 729.6,268.3 728.2,267.5 726.5,266.1 724.8,264.6 722.4,261.9 724.2,266.2 721.4,262.7 721.9,264.8 719.9,262.5 714.3,253.6 713.4,253.1 702.2,232.6 708.6,245.9 707.4,244.5 717.8,266.8 719.7,272.2 720.2,274.8 719.3,274.6 716.9,271.0 716.9,272.7 716.9,274.4 717.4,277.5 715.8,275.6 713.9,272.5 712.7,271.4 710.8,268.1 711.0,270.4 709.7,268.9 708.8,268.2 709.7,272.9 710.9,278.7 710.5,279.8 710.5,282.1 706.3,270.8 706.0,272.1 705.6,272.9 706.3,278.2 706.2,280.7 707.0,286.8 704.9,281.5 702.6,274.7 700.1,266.3 698.1,259.7 699.5,269.4 699.4,272.2 699.0,273.1 697.9,270.8 695.7,261.5 694.6,258.0 694.2,258.4 695.0,268.3 693.8,263.6 692.6,258.3 692.1,258.6 691.0,253.3 690.6,253.4 689.7,248.7 690.1,258.7 689.7,261.0 689.2,260.5 688.7,262.2 688.0,257.2 687.5,258.4 687.2,263.7 686.5,259.0 686.0,256.8 685.5,262.1 685.0,260.9 684.5,259.7 683.9,261.5 683.4,261.8 683.0,257.6 682.4,259.9 682.1,256.0 681.4,259.5 681.4,252.3 680.8,254.5 680.2,255.1 679.4,258.6 678.1,265.1 676.9,270.6 676.9,265.5 676.3,265.8 675.2,269.1 674.7,268.6 671.9,281.9 671.5,280.2 669.5,286.7 668.7,287.1 668.1,286.0 670.5,270.8 672.1,260.9 671.5,261.0 670.3,263.8 669.4,264.9 668.8,265.1 667.1,269.3 668.4,262.3 668.5,259.9 668.3,258.4 667.4,259.8 666.0,262.3 664.3,265.7 665.6,260.1 665.4,258.9 663.2,263.5 663.0,262.3 659.3,270.5 657.5,273.4 660.3,264.6 658.6,267.0 657.6,267.8 660.3,259.9 661.2,256.4 660.8,255.9 660.0,256.5 659.0,257.4 654.6,265.2 653.2,266.7 655.2,261.2 657.5,255.4 659.9,249.7 659.6,249.2 657.9,251.3 657.2,251.5 659.2,247.0 658.8,246.8 658.5,246.3 650.2,259.3 646.1,264.8 646.5,262.9 645.0,264.1 647.0,259.8 644.5,262.5 646.7,258.1 645.7,258.5 649.1,252.5 649.8,250.5 647.8,252.4 644.7,255.7 642.9,257.1 644.9,253.4 646.9,249.9 644.1,252.6 636.9,260.6 634.8,261.9 638.3,256.8 647.6,244.9 651.1,240.1 634.6,258.0 639.1,252.1 633.3,257.5 634.8,254.9 631.2,257.7 630.1,257.9 630.8,256.1 634.8,251.2 631.5,253.6 629.4,254.7 652.9,231.5 626.3,255.7 629.6,251.8 627.2,253.0 630.9,248.8 627.3,251.1 624.8,252.3 623.8,252.2 622.9,252.1 634.5,241.8 624.3,249.2 624.0,248.5 626.9,245.5 628.8,243.3 623.0,246.7 625.7,243.9 621.2,246.4 626.3,242.0 625.9,241.5 627.6,239.5 622.1,242.5 627.6,238.1 630.6,235.5 633.1,233.3 629.6,234.8 628.9,234.5 626.2,235.4 623.6,236.3 633.7,229.8 632.9,229.7 636.9,226.9 633.4,228.2 634.1,227.3 627.7,230.0 626.6,229.9 619.2,232.8 615.7,233.8 618.1,231.9 622.9,229.0 621.3,229.1 623.3,227.5 620.9,227.9 620.6,227.4 623.7,225.5 620.1,226.3 614.7,227.7 616.4,226.3 620.0,224.3 620.9,223.4 614.5,224.9 617.6,223.2 616.4,222.9 617.9,221.8 619.4,220.7 628.3,217.4 629.6,216.5 635.2,214.4 632.4,214.7 631.4,214.5 634.6,213.2 638.3,211.8 638.2,211.4 634.8,211.7 631.0,212.1 634.5,210.9 638.9,209.6 635.4,209.8 637.6,208.9 632.6,209.4 631.3,209.1 631.8,208.5 629.3,208.4 615.8,209.7 608.4,210.0 603.2,209.9 600.0,209.5 597.6,209.0 597.1,208.2 607.2,206.7 615.6,205.4 612.5,205.0 614.5,204.2 620.4,203.3 618.6,202.8 622.5,202.2 620.2,201.6 614.1,201.1 605.5,200.5 601.7,199.8 600.6,199.0 601.3,198.3 597.7,197.4 599.7,196.8 614.4,196.8 609.3,195.8 608.7,195.1 609.9,194.5 616.6,194.5 617.0,193.9 612.3,192.8 612.0,192.1 610.2,191.3 611.0,190.7 601.9,188.7 608.6,189.0 607.1,188.1 607.2,187.4 608.8,187.0 618.4,188.1 617.3,187.2 646.1,192.5 616.6,185.9 617.2,185.4 621.4,185.7 621.9,185.2 618.2,183.7 613.1,181.8 614.0,181.3 611.0,179.8 615.8,180.5 614.8,179.6 612.3,178.1 610.6,176.9 614.4,177.4 614.5,176.7 611.9,175.2 616.4,176.0 615.3,175.0 617.0,174.9 613.4,172.8 617.9,173.9 617.4,173.0 617.2,172.2 618.2,171.9 620.5,172.2 623.9,173.1 616.5,169.1 613.6,167.0 606.8,162.9 606.5,162.0 609.5,162.6 609.4,161.7 612.1,162.3 608.0,159.3 606.4,157.6 606.8,156.9 607.2,156.2 608.1,155.8 614.8,158.8 611.7,156.2 615.9,157.9 618.0,158.3 618.8,158.0 615.1,154.8 617.6,155.6 620.4,156.6 614.2,151.5 616.2,151.9 614.9,150.1 621.9,154.3 623.0,154.3 624.2,154.3 621.2,151.1 626.4,154.3 629.8,156.2 619.3,146.9 624.0,149.8 632.5,156.0 637.2,159.3 642.9,163.4 641.9,162.0 646.9,165.8 649.1,167.1 653.0,170.2 639.0,156.3 633.0,149.8 630.5,146.4 629.3,144.3 632.5,146.5 634.3,147.5 634.0,146.3 634.9,146.2 635.3,145.7 630.9,139.8 629.0,136.6 627.7,134.0 628.6,133.9 630.7,135.2 630.2,133.4 629.8,131.7 633.0,134.5 633.3,133.7 637.9,138.5 641.4,142.0 646.4,147.7 649.7,151.3 646.2,145.4 652.2,152.9 654.4,155.3 654.3,154.2 652.4,150.4 655.1,153.7 653.4,150.1 654.1,150.3 657.4,154.6 659.7,157.5 656.6,151.4 657.7,152.4 659.1,153.8 656.9,148.9 657.0,148.0 658.7,150.2 659.1,149.8 657.5,145.5 659.2,147.7 657.9,144.0 657.9,142.6 658.1,141.7 657.7,139.5 659.8,142.7 660.7,143.4 660.1,140.6 657.8,133.7 653.7,121.9 655.7,124.8 656.9,125.9 656.6,123.2 656.1,119.6 656.9,119.7 657.3,118.7 658.3,119.3 659.5,120.6 662.1,126.3 663.3,127.8 667.1,138.3 667.2,136.7 671.3,149.4 671.6,148.7 671.2,145.2 671.2,143.2 670.3,137.1 670.3,134.9 670.3,131.8 670.1,127.9 670.7,127.6 670.5,123.2 671.4,124.2 672.0,124.0 671.7,117.9 672.1,116.1 674.1,124.3 675.3,128.1 676.4,131.6 676.9,130.4 678.7,140.6 679.9,146.7 680.4,148.0 680.7,146.0 681.1,144.9 681.9,148.8 681.2,130.7 681.4,121.6 682.2,123.8 682.8,122.9 683.5,123.1 684.1,120.2 684.9,133.2 685.5,135.1" fill="none" stroke="#e8b060" stroke-width="1" shape-rendering="optimizeSpeed"/><line x1="686.5" y1="120" x2="686.5" y2="200" stroke="#e8a040" stroke-width="1.2"/><line x1="686.5" y1="72" x2="686.5" y2="120" stroke="#a8d8f0" stroke-width="1.2"/></svg>
<div class="t" style="top:50.24px;font-size:12px;line-height:12px;color:#e02424;right:427.5px;text-align:right;">3</div>
<div class="t" style="top:63.24px;font-size:12px;line-height:12px;color:#e02424;right:427.5px;text-align:right;">0</div>
<div class="t" style="top:87.44px;font-size:12px;line-height:12px;color:#f0f0f0;right:427.5px;text-align:right;">-6</div>
<div class="t" style="top:108.64px;font-size:12px;line-height:12px;color:#f0f0f0;right:427.5px;text-align:right;">-12</div>
<div class="t" style="top:142.44px;font-size:12px;line-height:12px;color:#f0f0f0;right:427.5px;text-align:right;">-24</div>
<div class="t" style="top:172.44px;font-size:12px;line-height:12px;color:#f0f0f0;right:427.5px;text-align:right;">-40</div>
<div class="t" style="top:196.14px;font-size:12px;line-height:12px;color:#f0f0f0;right:427.5px;text-align:right;">-60</div>
<div class="t" style="top:51.84px;font-size:12px;line-height:12px;color:#2f9e2f;font-weight:bold;left:878px;">Stereo</div>
<div class="r" style="left:931px;top:102px;width:94px;height:150px;border-radius:38px/44px;background:radial-gradient(ellipse 60% 55% at center,#00ff00 0%,#00d000 35%,#00a000 75%,#006000 100%);filter:blur(7px)"></div>
<svg class="s" style="left:0;top:0" width="1117" height="945"><g stroke="#444444" stroke-width="1.3"><line x1="897.5" y1="94.2" x2="1059" y2="266.3"/><line x1="1059" y1="94.2" x2="897.5" y2="266.3"/></g></svg>
<div class="t" style="top:74.84px;font-size:12px;line-height:12px;color:#f0f0f0;left:879px;">+L</div>
<div class="t" style="top:74.84px;font-size:12px;line-height:12px;color:#f0f0f0;right:39px;text-align:right;">+R</div>
<div class="t" style="top:274.84px;font-size:12px;line-height:12px;color:#f0f0f0;left:878px;">-R</div>
<div class="t" style="top:274.84px;font-size:12px;line-height:12px;color:#f0f0f0;right:39px;text-align:right;">-L</div>
<div class="t" style="top:164.84px;font-size:12px;line-height:12px;color:#363636;left:888.5px;">out of</div>
<div class="t" style="top:184.84px;font-size:12px;line-height:12px;color:#363636;left:888.5px;">phase</div>
<div class="t" style="top:164.84px;font-size:12px;line-height:12px;color:#363636;left:1028.6px;">out of</div>
<div class="t" style="top:184.84px;font-size:12px;line-height:12px;color:#363636;left:1028.6px;">phase</div>
<div class="r" style="left:978px;top:294px;width:1px;height:11px;background:#38b860;"></div>
<div class="r" style="left:878px;top:325px;width:81px;height:8px;background:#c00808;"></div>
<div class="r" style="left:959px;top:325px;width:39px;height:8px;background:#e8d810;"></div>
<div class="r" style="left:998px;top:325px;width:80px;height:8px;background:#0c960c;"></div>
<div class="r" style="left:977px;top:322px;width:2px;height:14px;background:#ffffff;"></div>
<div class="r" style="left:990px;top:326px;width:1px;height:6px;background:#f8f0b0;"></div>
<div class="t" style="top:339.84px;font-size:12px;line-height:12px;color:#801414;left:879px;">-1</div>
<div class="t" style="top:339.84px;font-size:12px;line-height:12px;color:#d8c860;left:878.5px;width:200px;text-align:center;">0</div>
<div class="t" style="top:339.84px;font-size:12px;line-height:12px;color:#2c7c2c;right:39px;text-align:right;">+1</div>
<div class="t" style="top:369.64px;font-size:12px;line-height:12px;color:#f0f0f0;right:1075.5px;text-align:right;">0</div>
<div class="t" style="top:395.64px;font-size:12px;line-height:12px;color:#f0f0f0;right:1075.5px;text-align:right;">-12</div>
<div class="t" style="top:420.64px;font-size:12px;line-height:12px;color:#f0f0f0;right:1075.5px;text-align:right;">-24</div>
<div class="t" style="top:455.44px;font-size:12px;line-height:12px;color:#f0f0f0;right:1075.5px;text-align:right;">-40</div>
<div class="t" style="top:498.44px;font-size:12px;line-height:12px;color:#f0f0f0;right:1075.5px;text-align:right;">-60</div>
<div class="t" style="top:580.74px;font-size:12px;line-height:12px;color:#f0f0f0;right:1075.5px;text-align:right;">-100</div>
<div class="t" style="top:614.34px;font-size:12px;line-height:12px;color:#f0f0f0;right:1075.5px;text-align:right;">-144</div>
<div class="t" style="top:369.64px;font-size:12px;line-height:12px;color:#7a7a7a;left:10.5px;">dB</div>
<div class="r" style="left:46px;top:375px;width:1025px;height:1px;background:#363636;"></div>
<div class="r" style="left:46px;top:401px;width:1025px;height:1px;background:#363636;"></div>
<div class="r" style="left:46px;top:426px;width:1025px;height:1px;background:#363636;"></div>
<div class="r" style="left:46px;top:461px;width:1025px;height:1px;background:#363636;"></div>
<div class="r" style="left:46px;top:504px;width:1025px;height:1px;background:#363636;"></div>
<div class="r" style="left:46px;top:586px;width:1025px;height:1px;background:#363636;"></div>
<div class="r" style="left:46px;top:619px;width:1025px;height:2px;background:#38a838;"></div>
<div class="r" style="left:302px;top:621px;width:1px;height:4px;background:#d0d0d0;"></div>
<div class="r" style="left:558px;top:621px;width:1px;height:4px;background:#d0d0d0;"></div>
<div class="r" style="left:813px;top:621px;width:1px;height:4px;background:#d0d0d0;"></div>
<div class="r" style="left:1070px;top:621px;width:1px;height:4px;background:#d0d0d0;"></div>
<div class="t" style="top:626.84px;font-size:12px;line-height:12px;color:#3cc83c;left:50.5px;">Linear Frequency Spectrum [kHz]</div>
<div class="t" style="top:629.84px;font-size:12px;line-height:12px;color:#f0f0f0;left:201.5px;width:200px;text-align:center;">5.51</div>
<div class="t" style="top:629.84px;font-size:12px;line-height:12px;color:#f0f0f0;left:458.5px;width:200px;text-align:center;">11.03</div>
<div class="t" style="top:629.84px;font-size:12px;line-height:12px;color:#f0f0f0;left:713.5px;width:200px;text-align:center;">16.54</div>
<div class="t" style="top:629.84px;font-size:12px;line-height:12px;color:#f0f0f0;left:970px;width:200px;text-align:center;">22.05</div>
<div class="t" style="top:626.84px;font-size:12px;line-height:12px;color:#6a6a6a;left:340px;">Left/Right</div>
<div class="t" style="top:626.84px;font-size:12px;line-height:12px;color:#6a6a6a;left:440px;">Pano/Phase</div>
<div class="t" style="top:626.84px;font-size:12px;line-height:12px;color:#6a6a6a;left:635px;">-200dB Mode</div>
<svg class="s" style="left:0;top:0" width="1117" height="945"><path d="M47 403h1.3v1.3h-1.3zM47 406h1.3v1.3h-1.3zM49 402h1.3v1.3h-1.3zM49 405h1.3v1.3h-1.3zM50 403h1.3v1.3h-1.3zM52 407h1.3v1.3h-1.3zM54 404h1.3v1.3h-1.3zM54 404h1.3v1.3h-1.3zM56 402h1.3v1.3h-1.3zM58 401h1.3v1.3h-1.3zM59 406h1.3v1.3h-1.3zM60 403h1.3v1.3h-1.3zM61 406h1.3v1.3h-1.3zM61 403h1.3v1.3h-1.3zM63 402h1.3v1.3h-1.3zM65 402h1.3v1.3h-1.3zM67 403h1.3v1.3h-1.3zM67 404h1.3v1.3h-1.3zM69 401h1.3v1.3h-1.3zM71 400h1.3v1.3h-1.3zM73 402h1.3v1.3h-1.3zM74 408h1.3v1.3h-1.3zM75 404h1.3v1.3h-1.3zM77 403h1.3v1.3h-1.3zM78 404h1.3v1.3h-1.3zM79 407h1.3v1.3h-1.3zM81 410h1.3v1.3h-1.3zM82 411h1.3v1.3h-1.3zM83 406h1.3v1.3h-1.3zM85 407h1.3v1.3h-1.3zM87 409h1.3v1.3h-1.3zM89 408h1.3v1.3h-1.3zM91 405h1.3v1.3h-1.3zM92 406h1.3v1.3h-1.3zM92 405h1.3v1.3h-1.3zM93 409h1.3v1.3h-1.3zM95 404h1.3v1.3h-1.3zM97 404h1.3v1.3h-1.3zM98 405h1.3v1.3h-1.3zM98 401h1.3v1.3h-1.3zM100 402h1.3v1.3h-1.3zM101 402h1.3v1.3h-1.3zM103 406h1.3v1.3h-1.3zM103 406h1.3v1.3h-1.3zM105 404h1.3v1.3h-1.3zM107 406h1.3v1.3h-1.3zM109 412h1.3v1.3h-1.3zM109 411h1.3v1.3h-1.3zM110 407h1.3v1.3h-1.3zM112 406h1.3v1.3h-1.3zM114 406h1.3v1.3h-1.3zM114 408h1.3v1.3h-1.3zM116 412h1.3v1.3h-1.3zM118 412h1.3v1.3h-1.3zM118 414h1.3v1.3h-1.3zM120 413h1.3v1.3h-1.3zM120 410h1.3v1.3h-1.3zM122 410h1.3v1.3h-1.3zM124 409h1.3v1.3h-1.3zM126 409h1.3v1.3h-1.3zM127 411h1.3v1.3h-1.3zM127 410h1.3v1.3h-1.3zM129 415h1.3v1.3h-1.3zM129 409h1.3v1.3h-1.3zM131 410h1.3v1.3h-1.3zM132 411h1.3v1.3h-1.3zM132 413h1.3v1.3h-1.3zM134 411h1.3v1.3h-1.3zM136 411h1.3v1.3h-1.3zM136 416h1.3v1.3h-1.3zM137 412h1.3v1.3h-1.3zM138 408h1.3v1.3h-1.3zM138 411h1.3v1.3h-1.3zM140 409h1.3v1.3h-1.3zM141 410h1.3v1.3h-1.3zM143 408h1.3v1.3h-1.3zM145 407h1.3v1.3h-1.3zM145 411h1.3v1.3h-1.3zM147 411h1.3v1.3h-1.3zM149 412h1.3v1.3h-1.3zM149 409h1.3v1.3h-1.3zM150 407h1.3v1.3h-1.3zM152 409h1.3v1.3h-1.3zM152 410h1.3v1.3h-1.3zM153 412h1.3v1.3h-1.3zM153 410h1.3v1.3h-1.3zM154 410h1.3v1.3h-1.3zM155 409h1.3v1.3h-1.3zM155 414h1.3v1.3h-1.3zM157 409h1.3v1.3h-1.3zM159 412h1.3v1.3h-1.3zM161 415h1.3v1.3h-1.3zM163 410h1.3v1.3h-1.3zM163 414h1.3v1.3h-1.3zM164 413h1.3v1.3h-1.3zM166 409h1.3v1.3h-1.3zM168 410h1.3v1.3h-1.3zM169 415h1.3v1.3h-1.3zM169 410h1.3v1.3h-1.3zM170 410h1.3v1.3h-1.3zM172 417h1.3v1.3h-1.3zM173 416h1.3v1.3h-1.3zM175 416h1.3v1.3h-1.3zM177 420h1.3v1.3h-1.3zM177 420h1.3v1.3h-1.3zM178 417h1.3v1.3h-1.3zM180 420h1.3v1.3h-1.3zM181 420h1.3v1.3h-1.3zM183 417h1.3v1.3h-1.3zM185 423h1.3v1.3h-1.3zM187 422h1.3v1.3h-1.3zM189 422h1.3v1.3h-1.3zM189 422h1.3v1.3h-1.3zM191 423h1.3v1.3h-1.3zM193 428h1.3v1.3h-1.3zM195 426h1.3v1.3h-1.3zM196 429h1.3v1.3h-1.3zM198 427h1.3v1.3h-1.3zM200 434h1.3v1.3h-1.3zM202 430h1.3v1.3h-1.3zM202 426h1.3v1.3h-1.3zM204 430h1.3v1.3h-1.3zM206 432h1.3v1.3h-1.3zM207 431h1.3v1.3h-1.3zM207 429h1.3v1.3h-1.3zM208 432h1.3v1.3h-1.3zM208 427h1.3v1.3h-1.3zM209 434h1.3v1.3h-1.3zM209 429h1.3v1.3h-1.3zM211 427h1.3v1.3h-1.3zM212 429h1.3v1.3h-1.3zM214 427h1.3v1.3h-1.3zM215 425h1.3v1.3h-1.3zM215 427h1.3v1.3h-1.3zM217 429h1.3v1.3h-1.3zM219 426h1.3v1.3h-1.3zM221 428h1.3v1.3h-1.3zM221 426h1.3v1.3h-1.3zM223 426h1.3v1.3h-1.3zM225 427h1.3v1.3h-1.3zM226 428h1.3v1.3h-1.3zM228 424h1.3v1.3h-1.3zM228 426h1.3v1.3h-1.3zM230 431h1.3v1.3h-1.3zM232 428h1.3v1.3h-1.3zM234 426h1.3v1.3h-1.3zM236 426h1.3v1.3h-1.3zM236 430h1.3v1.3h-1.3zM238 430h1.3v1.3h-1.3zM239 430h1.3v1.3h-1.3zM239 428h1.3v1.3h-1.3zM241 433h1.3v1.3h-1.3zM243 432h1.3v1.3h-1.3zM243 432h1.3v1.3h-1.3zM245 430h1.3v1.3h-1.3zM247 429h1.3v1.3h-1.3zM249 433h1.3v1.3h-1.3zM251 426h1.3v1.3h-1.3zM252 431h1.3v1.3h-1.3zM254 426h1.3v1.3h-1.3zM256 432h1.3v1.3h-1.3zM256 428h1.3v1.3h-1.3zM258 429h1.3v1.3h-1.3zM259 430h1.3v1.3h-1.3zM261 425h1.3v1.3h-1.3zM262 427h1.3v1.3h-1.3zM262 429h1.3v1.3h-1.3zM263 428h1.3v1.3h-1.3zM264 430h1.3v1.3h-1.3zM264 432h1.3v1.3h-1.3zM265 428h1.3v1.3h-1.3zM265 428h1.3v1.3h-1.3zM266 427h1.3v1.3h-1.3zM268 430h1.3v1.3h-1.3zM270 428h1.3v1.3h-1.3zM270 428h1.3v1.3h-1.3zM272 431h1.3v1.3h-1.3zM274 427h1.3v1.3h-1.3zM275 432h1.3v1.3h-1.3zM275 433h1.3v1.3h-1.3zM277 430h1.3v1.3h-1.3zM279 427h1.3v1.3h-1.3zM281 432h1.3v1.3h-1.3zM282 430h1.3v1.3h-1.3zM284 432h1.3v1.3h-1.3zM286 428h1.3v1.3h-1.3zM288 428h1.3v1.3h-1.3zM288 428h1.3v1.3h-1.3zM289 432h1.3v1.3h-1.3zM289 429h1.3v1.3h-1.3zM290 433h1.3v1.3h-1.3zM291 432h1.3v1.3h-1.3zM293 431h1.3v1.3h-1.3zM295 434h1.3v1.3h-1.3zM295 432h1.3v1.3h-1.3zM296 434h1.3v1.3h-1.3zM297 432h1.3v1.3h-1.3zM298 437h1.3v1.3h-1.3zM300 431h1.3v1.3h-1.3zM300 432h1.3v1.3h-1.3zM301 436h1.3v1.3h-1.3zM301 434h1.3v1.3h-1.3zM303 438h1.3v1.3h-1.3zM305 435h1.3v1.3h-1.3zM307 434h1.3v1.3h-1.3zM307 436h1.3v1.3h-1.3zM308 435h1.3v1.3h-1.3zM310 440h1.3v1.3h-1.3zM312 441h1.3v1.3h-1.3zM314 436h1.3v1.3h-1.3zM315 439h1.3v1.3h-1.3zM317 438h1.3v1.3h-1.3zM317 436h1.3v1.3h-1.3zM318 437h1.3v1.3h-1.3zM320 433h1.3v1.3h-1.3zM320 436h1.3v1.3h-1.3zM321 435h1.3v1.3h-1.3zM322 438h1.3v1.3h-1.3zM323 433h1.3v1.3h-1.3zM323 437h1.3v1.3h-1.3zM325 439h1.3v1.3h-1.3zM326 439h1.3v1.3h-1.3zM328 437h1.3v1.3h-1.3zM330 439h1.3v1.3h-1.3zM330 439h1.3v1.3h-1.3zM331 439h1.3v1.3h-1.3zM332 442h1.3v1.3h-1.3zM333 439h1.3v1.3h-1.3zM334 437h1.3v1.3h-1.3zM336 437h1.3v1.3h-1.3zM337 442h1.3v1.3h-1.3zM337 442h1.3v1.3h-1.3zM339 437h1.3v1.3h-1.3zM340 437h1.3v1.3h-1.3zM342 437h1.3v1.3h-1.3zM342 441h1.3v1.3h-1.3zM344 441h1.3v1.3h-1.3zM346 436h1.3v1.3h-1.3zM347 437h1.3v1.3h-1.3zM347 434h1.3v1.3h-1.3zM349 433h1.3v1.3h-1.3zM349 435h1.3v1.3h-1.3zM351 438h1.3v1.3h-1.3zM351 436h1.3v1.3h-1.3zM353 439h1.3v1.3h-1.3zM353 435h1.3v1.3h-1.3zM354 443h1.3v1.3h-1.3zM355 439h1.3v1.3h-1.3zM355 439h1.3v1.3h-1.3zM356 440h1.3v1.3h-1.3zM358 437h1.3v1.3h-1.3zM360 440h1.3v1.3h-1.3zM362 443h1.3v1.3h-1.3zM364 442h1.3v1.3h-1.3zM364 442h1.3v1.3h-1.3zM366 440h1.3v1.3h-1.3zM368 443h1.3v1.3h-1.3zM370 441h1.3v1.3h-1.3zM370 438h1.3v1.3h-1.3zM372 440h1.3v1.3h-1.3zM374 444h1.3v1.3h-1.3zM374 442h1.3v1.3h-1.3zM375 444h1.3v1.3h-1.3zM377 437h1.3v1.3h-1.3zM379 443h1.3v1.3h-1.3zM381 445h1.3v1.3h-1.3zM381 443h1.3v1.3h-1.3zM383 441h1.3v1.3h-1.3zM384 438h1.3v1.3h-1.3zM386 437h1.3v1.3h-1.3zM388 441h1.3v1.3h-1.3zM388 440h1.3v1.3h-1.3zM390 443h1.3v1.3h-1.3zM390 440h1.3v1.3h-1.3zM391 437h1.3v1.3h-1.3zM393 439h1.3v1.3h-1.3zM395 445h1.3v1.3h-1.3zM397 446h1.3v1.3h-1.3zM398 440h1.3v1.3h-1.3zM400 443h1.3v1.3h-1.3zM400 442h1.3v1.3h-1.3zM402 444h1.3v1.3h-1.3zM404 447h1.3v1.3h-1.3zM404 447h1.3v1.3h-1.3zM406 441h1.3v1.3h-1.3zM408 446h1.3v1.3h-1.3zM410 443h1.3v1.3h-1.3zM412 441h1.3v1.3h-1.3zM414 447h1.3v1.3h-1.3zM416 449h1.3v1.3h-1.3zM417 447h1.3v1.3h-1.3zM417 442h1.3v1.3h-1.3zM419 445h1.3v1.3h-1.3zM419 446h1.3v1.3h-1.3zM420 448h1.3v1.3h-1.3zM421 446h1.3v1.3h-1.3zM422 445h1.3v1.3h-1.3zM423 443h1.3v1.3h-1.3zM423 444h1.3v1.3h-1.3zM424 449h1.3v1.3h-1.3zM426 445h1.3v1.3h-1.3zM428 443h1.3v1.3h-1.3zM429 442h1.3v1.3h-1.3zM431 448h1.3v1.3h-1.3zM432 442h1.3v1.3h-1.3zM434 439h1.3v1.3h-1.3zM434 441h1.3v1.3h-1.3zM436 440h1.3v1.3h-1.3zM438 444h1.3v1.3h-1.3zM438 445h1.3v1.3h-1.3zM440 446h1.3v1.3h-1.3zM440 443h1.3v1.3h-1.3zM442 448h1.3v1.3h-1.3zM444 445h1.3v1.3h-1.3zM445 448h1.3v1.3h-1.3zM446 453h1.3v1.3h-1.3zM447 447h1.3v1.3h-1.3zM449 449h1.3v1.3h-1.3zM450 446h1.3v1.3h-1.3zM452 452h1.3v1.3h-1.3zM453 452h1.3v1.3h-1.3zM453 453h1.3v1.3h-1.3zM455 447h1.3v1.3h-1.3zM457 448h1.3v1.3h-1.3zM459 451h1.3v1.3h-1.3zM461 446h1.3v1.3h-1.3zM463 451h1.3v1.3h-1.3zM463 449h1.3v1.3h-1.3zM464 450h1.3v1.3h-1.3zM466 455h1.3v1.3h-1.3zM467 451h1.3v1.3h-1.3zM469 448h1.3v1.3h-1.3zM471 448h1.3v1.3h-1.3zM472 453h1.3v1.3h-1.3zM472 449h1.3v1.3h-1.3zM474 448h1.3v1.3h-1.3zM474 451h1.3v1.3h-1.3zM476 449h1.3v1.3h-1.3zM476 450h1.3v1.3h-1.3zM478 450h1.3v1.3h-1.3zM480 454h1.3v1.3h-1.3zM480 454h1.3v1.3h-1.3zM482 455h1.3v1.3h-1.3zM482 449h1.3v1.3h-1.3zM484 451h1.3v1.3h-1.3zM486 448h1.3v1.3h-1.3zM486 449h1.3v1.3h-1.3zM488 445h1.3v1.3h-1.3zM489 449h1.3v1.3h-1.3zM490 445h1.3v1.3h-1.3zM491 446h1.3v1.3h-1.3zM493 450h1.3v1.3h-1.3zM495 449h1.3v1.3h-1.3zM497 450h1.3v1.3h-1.3zM499 453h1.3v1.3h-1.3zM500 447h1.3v1.3h-1.3zM500 452h1.3v1.3h-1.3zM502 446h1.3v1.3h-1.3zM504 447h1.3v1.3h-1.3zM504 450h1.3v1.3h-1.3zM505 451h1.3v1.3h-1.3zM505 451h1.3v1.3h-1.3zM506 448h1.3v1.3h-1.3zM506 447h1.3v1.3h-1.3zM508 448h1.3v1.3h-1.3zM510 453h1.3v1.3h-1.3zM510 452h1.3v1.3h-1.3zM511 455h1.3v1.3h-1.3zM511 450h1.3v1.3h-1.3zM513 451h1.3v1.3h-1.3zM515 452h1.3v1.3h-1.3zM516 452h1.3v1.3h-1.3zM518 450h1.3v1.3h-1.3zM519 454h1.3v1.3h-1.3zM521 450h1.3v1.3h-1.3zM523 452h1.3v1.3h-1.3zM523 453h1.3v1.3h-1.3zM524 451h1.3v1.3h-1.3zM526 452h1.3v1.3h-1.3zM528 453h1.3v1.3h-1.3zM528 454h1.3v1.3h-1.3zM530 451h1.3v1.3h-1.3zM532 452h1.3v1.3h-1.3zM532 455h1.3v1.3h-1.3zM534 454h1.3v1.3h-1.3zM535 455h1.3v1.3h-1.3zM537 452h1.3v1.3h-1.3zM537 456h1.3v1.3h-1.3zM539 453h1.3v1.3h-1.3zM539 456h1.3v1.3h-1.3zM540 457h1.3v1.3h-1.3zM542 452h1.3v1.3h-1.3zM542 456h1.3v1.3h-1.3zM544 450h1.3v1.3h-1.3zM545 458h1.3v1.3h-1.3zM545 455h1.3v1.3h-1.3zM546 453h1.3v1.3h-1.3zM547 456h1.3v1.3h-1.3zM547 454h1.3v1.3h-1.3zM549 460h1.3v1.3h-1.3zM551 458h1.3v1.3h-1.3zM552 454h1.3v1.3h-1.3zM554 455h1.3v1.3h-1.3zM556 455h1.3v1.3h-1.3zM558 459h1.3v1.3h-1.3zM560 458h1.3v1.3h-1.3zM562 458h1.3v1.3h-1.3zM564 460h1.3v1.3h-1.3zM566 459h1.3v1.3h-1.3zM568 461h1.3v1.3h-1.3zM570 462h1.3v1.3h-1.3zM572 464h1.3v1.3h-1.3zM572 462h1.3v1.3h-1.3zM573 462h1.3v1.3h-1.3zM575 460h1.3v1.3h-1.3zM575 462h1.3v1.3h-1.3zM577 461h1.3v1.3h-1.3zM579 458h1.3v1.3h-1.3zM579 463h1.3v1.3h-1.3zM580 459h1.3v1.3h-1.3zM582 463h1.3v1.3h-1.3zM584 463h1.3v1.3h-1.3zM585 464h1.3v1.3h-1.3zM587 462h1.3v1.3h-1.3zM588 461h1.3v1.3h-1.3zM588 464h1.3v1.3h-1.3zM589 465h1.3v1.3h-1.3zM591 466h1.3v1.3h-1.3zM591 464h1.3v1.3h-1.3zM593 466h1.3v1.3h-1.3zM595 463h1.3v1.3h-1.3zM597 468h1.3v1.3h-1.3zM597 468h1.3v1.3h-1.3zM599 461h1.3v1.3h-1.3zM599 467h1.3v1.3h-1.3zM601 465h1.3v1.3h-1.3zM602 465h1.3v1.3h-1.3zM604 464h1.3v1.3h-1.3zM605 463h1.3v1.3h-1.3zM607 464h1.3v1.3h-1.3zM609 462h1.3v1.3h-1.3zM611 465h1.3v1.3h-1.3zM613 462h1.3v1.3h-1.3zM614 460h1.3v1.3h-1.3zM615 460h1.3v1.3h-1.3zM617 464h1.3v1.3h-1.3zM619 464h1.3v1.3h-1.3zM619 463h1.3v1.3h-1.3zM621 466h1.3v1.3h-1.3zM621 465h1.3v1.3h-1.3zM622 465h1.3v1.3h-1.3zM623 462h1.3v1.3h-1.3zM623 460h1.3v1.3h-1.3zM625 463h1.3v1.3h-1.3zM626 462h1.3v1.3h-1.3zM628 462h1.3v1.3h-1.3zM629 464h1.3v1.3h-1.3zM629 464h1.3v1.3h-1.3zM631 463h1.3v1.3h-1.3zM633 467h1.3v1.3h-1.3zM633 468h1.3v1.3h-1.3zM635 470h1.3v1.3h-1.3zM637 469h1.3v1.3h-1.3zM637 471h1.3v1.3h-1.3zM639 466h1.3v1.3h-1.3zM641 470h1.3v1.3h-1.3zM641 464h1.3v1.3h-1.3zM643 468h1.3v1.3h-1.3zM644 468h1.3v1.3h-1.3zM645 466h1.3v1.3h-1.3zM646 471h1.3v1.3h-1.3zM648 471h1.3v1.3h-1.3zM649 466h1.3v1.3h-1.3zM650 471h1.3v1.3h-1.3zM652 468h1.3v1.3h-1.3zM652 472h1.3v1.3h-1.3zM654 468h1.3v1.3h-1.3zM656 468h1.3v1.3h-1.3zM658 466h1.3v1.3h-1.3zM658 469h1.3v1.3h-1.3zM659 468h1.3v1.3h-1.3zM659 464h1.3v1.3h-1.3zM661 465h1.3v1.3h-1.3zM662 468h1.3v1.3h-1.3zM662 469h1.3v1.3h-1.3zM663 468h1.3v1.3h-1.3zM663 464h1.3v1.3h-1.3zM665 468h1.3v1.3h-1.3zM666 468h1.3v1.3h-1.3zM666 465h1.3v1.3h-1.3zM668 471h1.3v1.3h-1.3zM670 467h1.3v1.3h-1.3zM671 470h1.3v1.3h-1.3zM671 464h1.3v1.3h-1.3zM673 470h1.3v1.3h-1.3zM675 467h1.3v1.3h-1.3zM677 473h1.3v1.3h-1.3zM677 467h1.3v1.3h-1.3zM678 470h1.3v1.3h-1.3zM680 472h1.3v1.3h-1.3zM680 474h1.3v1.3h-1.3zM682 474h1.3v1.3h-1.3zM684 470h1.3v1.3h-1.3zM685 471h1.3v1.3h-1.3zM687 470h1.3v1.3h-1.3zM687 469h1.3v1.3h-1.3zM688 474h1.3v1.3h-1.3zM690 471h1.3v1.3h-1.3zM691 471h1.3v1.3h-1.3zM693 471h1.3v1.3h-1.3zM694 474h1.3v1.3h-1.3zM694 473h1.3v1.3h-1.3zM696 474h1.3v1.3h-1.3zM696 471h1.3v1.3h-1.3zM698 476h1.3v1.3h-1.3zM699 471h1.3v1.3h-1.3zM701 473h1.3v1.3h-1.3zM703 472h1.3v1.3h-1.3zM705 473h1.3v1.3h-1.3zM706 478h1.3v1.3h-1.3zM708 475h1.3v1.3h-1.3zM710 475h1.3v1.3h-1.3zM710 474h1.3v1.3h-1.3zM711 475h1.3v1.3h-1.3zM712 476h1.3v1.3h-1.3zM712 472h1.3v1.3h-1.3zM713 473h1.3v1.3h-1.3zM715 479h1.3v1.3h-1.3zM716 471h1.3v1.3h-1.3zM718 477h1.3v1.3h-1.3zM720 475h1.3v1.3h-1.3zM721 476h1.3v1.3h-1.3zM722 473h1.3v1.3h-1.3zM723 477h1.3v1.3h-1.3zM723 479h1.3v1.3h-1.3zM725 477h1.3v1.3h-1.3zM727 474h1.3v1.3h-1.3zM729 479h1.3v1.3h-1.3zM731 479h1.3v1.3h-1.3zM733 476h1.3v1.3h-1.3zM733 479h1.3v1.3h-1.3zM734 478h1.3v1.3h-1.3zM735 478h1.3v1.3h-1.3zM736 478h1.3v1.3h-1.3zM738 475h1.3v1.3h-1.3zM738 474h1.3v1.3h-1.3zM740 472h1.3v1.3h-1.3zM742 471h1.3v1.3h-1.3zM742 470h1.3v1.3h-1.3zM743 471h1.3v1.3h-1.3zM744 471h1.3v1.3h-1.3zM745 473h1.3v1.3h-1.3zM745 471h1.3v1.3h-1.3zM747 468h1.3v1.3h-1.3zM749 472h1.3v1.3h-1.3zM749 469h1.3v1.3h-1.3zM751 470h1.3v1.3h-1.3zM751 473h1.3v1.3h-1.3zM753 473h1.3v1.3h-1.3zM753 473h1.3v1.3h-1.3zM755 474h1.3v1.3h-1.3zM756 468h1.3v1.3h-1.3zM756 468h1.3v1.3h-1.3zM758 473h1.3v1.3h-1.3zM760 469h1.3v1.3h-1.3zM762 473h1.3v1.3h-1.3zM764 475h1.3v1.3h-1.3zM765 470h1.3v1.3h-1.3zM767 473h1.3v1.3h-1.3zM769 468h1.3v1.3h-1.3zM770 470h1.3v1.3h-1.3zM772 470h1.3v1.3h-1.3zM774 470h1.3v1.3h-1.3zM775 473h1.3v1.3h-1.3zM775 473h1.3v1.3h-1.3zM776 472h1.3v1.3h-1.3zM777 469h1.3v1.3h-1.3zM777 471h1.3v1.3h-1.3zM778 473h1.3v1.3h-1.3zM778 472h1.3v1.3h-1.3zM779 475h1.3v1.3h-1.3zM779 475h1.3v1.3h-1.3zM780 475h1.3v1.3h-1.3zM780 472h1.3v1.3h-1.3zM781 474h1.3v1.3h-1.3zM783 473h1.3v1.3h-1.3zM785 472h1.3v1.3h-1.3zM785 472h1.3v1.3h-1.3zM787 472h1.3v1.3h-1.3zM789 477h1.3v1.3h-1.3zM789 473h1.3v1.3h-1.3zM791 477h1.3v1.3h-1.3zM793 479h1.3v1.3h-1.3zM794 481h1.3v1.3h-1.3zM795 482h1.3v1.3h-1.3zM797 481h1.3v1.3h-1.3zM797 482h1.3v1.3h-1.3zM799 482h1.3v1.3h-1.3zM801 482h1.3v1.3h-1.3zM801 485h1.3v1.3h-1.3zM803 486h1.3v1.3h-1.3zM804 480h1.3v1.3h-1.3zM806 480h1.3v1.3h-1.3zM806 483h1.3v1.3h-1.3zM808 480h1.3v1.3h-1.3zM810 480h1.3v1.3h-1.3zM812 478h1.3v1.3h-1.3zM814 482h1.3v1.3h-1.3zM816 479h1.3v1.3h-1.3zM816 476h1.3v1.3h-1.3zM818 477h1.3v1.3h-1.3zM819 480h1.3v1.3h-1.3zM821 479h1.3v1.3h-1.3zM822 478h1.3v1.3h-1.3zM822 475h1.3v1.3h-1.3zM824 481h1.3v1.3h-1.3zM824 482h1.3v1.3h-1.3zM825 479h1.3v1.3h-1.3zM826 477h1.3v1.3h-1.3zM826 483h1.3v1.3h-1.3zM828 478h1.3v1.3h-1.3zM830 483h1.3v1.3h-1.3zM832 481h1.3v1.3h-1.3zM834 488h1.3v1.3h-1.3zM835 484h1.3v1.3h-1.3zM837 481h1.3v1.3h-1.3zM837 484h1.3v1.3h-1.3zM839 481h1.3v1.3h-1.3zM841 482h1.3v1.3h-1.3zM843 479h1.3v1.3h-1.3zM843 480h1.3v1.3h-1.3zM845 479h1.3v1.3h-1.3zM847 479h1.3v1.3h-1.3zM849 482h1.3v1.3h-1.3zM849 485h1.3v1.3h-1.3zM851 483h1.3v1.3h-1.3zM853 478h1.3v1.3h-1.3zM855 476h1.3v1.3h-1.3zM856 477h1.3v1.3h-1.3zM858 481h1.3v1.3h-1.3zM858 483h1.3v1.3h-1.3zM859 483h1.3v1.3h-1.3zM861 478h1.3v1.3h-1.3zM863 481h1.3v1.3h-1.3zM865 476h1.3v1.3h-1.3zM865 479h1.3v1.3h-1.3zM867 480h1.3v1.3h-1.3zM869 480h1.3v1.3h-1.3zM871 479h1.3v1.3h-1.3zM873 478h1.3v1.3h-1.3zM875 478h1.3v1.3h-1.3zM876 481h1.3v1.3h-1.3zM878 482h1.3v1.3h-1.3zM878 480h1.3v1.3h-1.3zM879 478h1.3v1.3h-1.3zM881 477h1.3v1.3h-1.3zM883 477h1.3v1.3h-1.3zM885 479h1.3v1.3h-1.3zM886 480h1.3v1.3h-1.3zM888 477h1.3v1.3h-1.3zM888 480h1.3v1.3h-1.3zM889 475h1.3v1.3h-1.3zM889 478h1.3v1.3h-1.3zM891 480h1.3v1.3h-1.3zM893 482h1.3v1.3h-1.3zM895 482h1.3v1.3h-1.3zM897 480h1.3v1.3h-1.3zM898 482h1.3v1.3h-1.3zM898 480h1.3v1.3h-1.3zM900 484h1.3v1.3h-1.3zM902 483h1.3v1.3h-1.3zM903 483h1.3v1.3h-1.3zM904 481h1.3v1.3h-1.3zM904 484h1.3v1.3h-1.3zM905 481h1.3v1.3h-1.3zM905 484h1.3v1.3h-1.3zM907 481h1.3v1.3h-1.3zM907 482h1.3v1.3h-1.3zM909 478h1.3v1.3h-1.3zM911 483h1.3v1.3h-1.3zM913 483h1.3v1.3h-1.3zM914 481h1.3v1.3h-1.3zM914 482h1.3v1.3h-1.3zM915 482h1.3v1.3h-1.3zM917 480h1.3v1.3h-1.3zM917 483h1.3v1.3h-1.3zM919 482h1.3v1.3h-1.3zM919 481h1.3v1.3h-1.3zM920 482h1.3v1.3h-1.3zM920 480h1.3v1.3h-1.3zM922 476h1.3v1.3h-1.3zM924 479h1.3v1.3h-1.3zM925 478h1.3v1.3h-1.3zM927 478h1.3v1.3h-1.3zM928 481h1.3v1.3h-1.3zM928 479h1.3v1.3h-1.3zM930 480h1.3v1.3h-1.3zM930 478h1.3v1.3h-1.3zM932 475h1.3v1.3h-1.3zM934 479h1.3v1.3h-1.3zM934 478h1.3v1.3h-1.3zM936 479h1.3v1.3h-1.3zM937 481h1.3v1.3h-1.3zM939 479h1.3v1.3h-1.3zM941 478h1.3v1.3h-1.3zM942 478h1.3v1.3h-1.3zM944 483h1.3v1.3h-1.3zM945 485h1.3v1.3h-1.3zM945 485h1.3v1.3h-1.3zM946 483h1.3v1.3h-1.3zM946 486h1.3v1.3h-1.3zM948 482h1.3v1.3h-1.3zM948 479h1.3v1.3h-1.3zM950 479h1.3v1.3h-1.3zM951 478h1.3v1.3h-1.3zM951 478h1.3v1.3h-1.3zM953 479h1.3v1.3h-1.3zM955 477h1.3v1.3h-1.3zM957 480h1.3v1.3h-1.3zM957 478h1.3v1.3h-1.3zM959 482h1.3v1.3h-1.3zM959 486h1.3v1.3h-1.3zM961 486h1.3v1.3h-1.3zM961 482h1.3v1.3h-1.3zM963 488h1.3v1.3h-1.3zM965 485h1.3v1.3h-1.3zM967 480h1.3v1.3h-1.3zM967 486h1.3v1.3h-1.3zM968 480h1.3v1.3h-1.3zM968 486h1.3v1.3h-1.3zM969 483h1.3v1.3h-1.3zM969 487h1.3v1.3h-1.3zM970 484h1.3v1.3h-1.3zM971 486h1.3v1.3h-1.3zM973 486h1.3v1.3h-1.3zM975 481h1.3v1.3h-1.3zM977 484h1.3v1.3h-1.3zM977 482h1.3v1.3h-1.3zM978 489h1.3v1.3h-1.3zM979 488h1.3v1.3h-1.3zM980 490h1.3v1.3h-1.3zM982 482h1.3v1.3h-1.3zM984 483h1.3v1.3h-1.3zM986 481h1.3v1.3h-1.3zM986 483h1.3v1.3h-1.3zM987 487h1.3v1.3h-1.3zM987 485h1.3v1.3h-1.3zM988 482h1.3v1.3h-1.3zM988 483h1.3v1.3h-1.3zM990 486h1.3v1.3h-1.3zM990 483h1.3v1.3h-1.3zM992 487h1.3v1.3h-1.3zM993 481h1.3v1.3h-1.3zM995 485h1.3v1.3h-1.3zM996 485h1.3v1.3h-1.3zM997 481h1.3v1.3h-1.3zM997 485h1.3v1.3h-1.3zM999 484h1.3v1.3h-1.3zM1001 483h1.3v1.3h-1.3zM1003 484h1.3v1.3h-1.3zM1004 487h1.3v1.3h-1.3zM1004 488h1.3v1.3h-1.3zM1006 482h1.3v1.3h-1.3zM1006 483h1.3v1.3h-1.3zM1008 488h1.3v1.3h-1.3zM1010 483h1.3v1.3h-1.3zM1010 485h1.3v1.3h-1.3zM1012 489h1.3v1.3h-1.3zM1014 490h1.3v1.3h-1.3zM1016 487h1.3v1.3h-1.3zM1018 487h1.3v1.3h-1.3zM1020 481h1.3v1.3h-1.3zM1020 481h1.3v1.3h-1.3zM1022 487h1.3v1.3h-1.3zM1024 487h1.3v1.3h-1.3zM1026 486h1.3v1.3h-1.3zM1026 486h1.3v1.3h-1.3zM1028 488h1.3v1.3h-1.3zM1030 487h1.3v1.3h-1.3zM1032 489h1.3v1.3h-1.3zM1034 487h1.3v1.3h-1.3zM1036 490h1.3v1.3h-1.3zM1037 489h1.3v1.3h-1.3zM1038 491h1.3v1.3h-1.3zM1038 492h1.3v1.3h-1.3zM1040 490h1.3v1.3h-1.3zM1042 488h1.3v1.3h-1.3zM1044 486h1.3v1.3h-1.3zM1045 485h1.3v1.3h-1.3zM1047 485h1.3v1.3h-1.3zM1049 483h1.3v1.3h-1.3zM1049 485h1.3v1.3h-1.3zM1051 480h1.3v1.3h-1.3zM1051 483h1.3v1.3h-1.3zM1052 485h1.3v1.3h-1.3zM1053 483h1.3v1.3h-1.3zM1055 480h1.3v1.3h-1.3zM1057 476h1.3v1.3h-1.3zM1059 480h1.3v1.3h-1.3zM1060 480h1.3v1.3h-1.3zM1062 476h1.3v1.3h-1.3zM1062 480h1.3v1.3h-1.3zM1064 482h1.3v1.3h-1.3zM1066 482h1.3v1.3h-1.3zM1067 482h1.3v1.3h-1.3z" fill="#f0b860"/></svg>
<div class="t" style="top:668.94px;font-size:12px;line-height:12px;color:#6c6c6c;left:14.3px;">%</div>
<div class="t" style="top:668.94px;font-size:12px;line-height:12px;color:#f0f0f0;right:1074.7px;text-align:right;">0</div>
<div class="t" style="top:695.74px;font-size:12px;line-height:12px;color:#3cc83c;right:1074.7px;text-align:right;">AVG</div>
<div class="t" style="top:725.54px;font-size:12px;line-height:12px;color:#f0f0f0;right:1074.7px;text-align:right;">25</div>
<div class="t" style="top:757.74px;font-size:12px;line-height:12px;color:#3cc83c;right:1074.7px;text-align:right;">BRY</div>
<div class="t" style="top:788.14px;font-size:12px;line-height:12px;color:#f0f0f0;right:1074.7px;text-align:right;">50</div>
<div class="t" style="top:819.74px;font-size:12px;line-height:12px;color:#3cc83c;right:1074.7px;text-align:right;">COF</div>
<div class="t" style="top:850.94px;font-size:12px;line-height:12px;color:#f0f0f0;right:1074.7px;text-align:right;">75</div>
<div class="t" style="top:908.94px;font-size:12px;line-height:12px;color:#f0f0f0;right:1074.7px;text-align:right;">100</div>
<svg class="s" style="left:0;top:0" width="1117" height="945" shape-rendering="crispEdges"><defs><linearGradient id="g0" x1="0" x2="1" y1="0" y2="0"><stop offset="0.000" stop-color="#ff7221"/><stop offset="0.014" stop-color="#ff4d3c"/><stop offset="0.033" stop-color="#ff3e4d"/><stop offset="0.053" stop-color="#ff2f5d"/><stop offset="0.092" stop-color="#fd2573"/><stop offset="0.151" stop-color="#f91c8e"/><stop offset="0.200" stop-color="#ef16a0"/><stop offset="0.249" stop-color="#dd14ae"/><stop offset="0.322" stop-color="#c610c1"/><stop offset="0.395" stop-color="#ac10d0"/><stop offset="0.469" stop-color="#9310de"/><stop offset="0.542" stop-color="#8211e5"/><stop offset="0.640" stop-color="#6e13eb"/><stop offset="0.738" stop-color="#5e14ee"/><stop offset="0.836" stop-color="#5913e9"/><stop offset="1.000" stop-color="#5012e0"/></linearGradient><linearGradient id="g1" x1="0" x2="1" y1="0" y2="0"><stop offset="0.000" stop-color="#ff6925"/><stop offset="0.014" stop-color="#ff4347"/><stop offset="0.033" stop-color="#ff3458"/><stop offset="0.053" stop-color="#fe286b"/><stop offset="0.092" stop-color="#fb2081"/><stop offset="0.151" stop-color="#f5179b"/><stop offset="0.200" stop-color="#e314aa"/><stop offset="0.249" stop-color="#d112b8"/><stop offset="0.322" stop-color="#b810c9"/><stop offset="0.395" stop-color="#9e10d8"/><stop offset="0.469" stop-color="#8811e3"/><stop offset="0.542" stop-color="#7812e8"/><stop offset="0.640" stop-color="#6514ee"/><stop offset="0.738" stop-color="#5813e8"/><stop offset="0.836" stop-color="#5312e3"/><stop offset="1.000" stop-color="#4a11da"/></linearGradient><linearGradient id="g2" x1="0" x2="1" y1="0" y2="0"><stop offset="0.000" stop-color="#ff2c60"/><stop offset="0.014" stop-color="#f81995"/><stop offset="0.033" stop-color="#e915a5"/><stop offset="0.053" stop-color="#d712b4"/><stop offset="0.092" stop-color="#c310c3"/><stop offset="0.151" stop-color="#a810d2"/><stop offset="0.200" stop-color="#9410de"/><stop offset="0.249" stop-color="#8411e4"/><stop offset="0.322" stop-color="#7213ea"/><stop offset="0.395" stop-color="#6014f0"/><stop offset="0.469" stop-color="#5413e4"/><stop offset="0.542" stop-color="#4a11da"/><stop offset="0.640" stop-color="#3e0fcd"/><stop offset="0.738" stop-color="#370ac1"/><stop offset="0.836" stop-color="#3408bb"/><stop offset="1.000" stop-color="#2e04b2"/></linearGradient><linearGradient id="g3" x1="0" x2="1" y1="0" y2="0"><stop offset="0.000" stop-color="#ff4b3e"/><stop offset="0.014" stop-color="#fe286b"/><stop offset="0.033" stop-color="#fb2180"/><stop offset="0.053" stop-color="#f81994"/><stop offset="0.092" stop-color="#e815a6"/><stop offset="0.151" stop-color="#d112b8"/><stop offset="0.200" stop-color="#be10c6"/><stop offset="0.249" stop-color="#a910d2"/><stop offset="0.322" stop-color="#8f10e0"/><stop offset="0.395" stop-color="#7d12e6"/><stop offset="0.469" stop-color="#6b13ec"/><stop offset="0.542" stop-color="#5d14ed"/><stop offset="0.640" stop-color="#5012e0"/><stop offset="0.738" stop-color="#4511d5"/><stop offset="0.836" stop-color="#4010cf"/><stop offset="1.000" stop-color="#3a0cc6"/></linearGradient><linearGradient id="g4" x1="0" x2="1" y1="0" y2="0"><stop offset="0.000" stop-color="#ff414a"/><stop offset="0.014" stop-color="#fc2379"/><stop offset="0.033" stop-color="#f91c8e"/><stop offset="0.053" stop-color="#ef16a0"/><stop offset="0.092" stop-color="#dc13b0"/><stop offset="0.151" stop-color="#c410c2"/><stop offset="0.200" stop-color="#b010ce"/><stop offset="0.249" stop-color="#9a10da"/><stop offset="0.322" stop-color="#8511e4"/><stop offset="0.395" stop-color="#7312ea"/><stop offset="0.469" stop-color="#6214ef"/><stop offset="0.542" stop-color="#5613e6"/><stop offset="0.640" stop-color="#4a11da"/><stop offset="0.738" stop-color="#3f0fce"/><stop offset="0.836" stop-color="#3c0dc9"/><stop offset="1.000" stop-color="#3609bf"/></linearGradient><linearGradient id="g5" x1="0" x2="1" y1="0" y2="0"><stop offset="0.000" stop-color="#ff7b1e"/><stop offset="0.014" stop-color="#ff5831"/><stop offset="0.033" stop-color="#ff4841"/><stop offset="0.053" stop-color="#ff3952"/><stop offset="0.092" stop-color="#fe2a65"/><stop offset="0.151" stop-color="#fb2180"/><stop offset="0.200" stop-color="#f81994"/><stop offset="0.249" stop-color="#e916a4"/><stop offset="0.322" stop-color="#d212b7"/><stop offset="0.395" stop-color="#ba10c8"/><stop offset="0.469" stop-color="#a110d6"/><stop offset="0.542" stop-color="#8b10e2"/><stop offset="0.640" stop-color="#7812e8"/><stop offset="0.738" stop-color="#6713ee"/><stop offset="0.836" stop-color="#5f14ef"/><stop offset="1.000" stop-color="#5613e6"/></linearGradient><linearGradient id="g6" x1="0" x2="1" y1="0" y2="0"><stop offset="0.000" stop-color="#ff9713"/><stop offset="0.014" stop-color="#ff7420"/><stop offset="0.033" stop-color="#ff6726"/><stop offset="0.053" stop-color="#ff5830"/><stop offset="0.092" stop-color="#ff4842"/><stop offset="0.151" stop-color="#ff3458"/><stop offset="0.200" stop-color="#fe286b"/><stop offset="0.249" stop-color="#fb2180"/><stop offset="0.322" stop-color="#f61899"/><stop offset="0.395" stop-color="#e014ac"/><stop offset="0.469" stop-color="#ca10be"/><stop offset="0.542" stop-color="#b310cc"/><stop offset="0.640" stop-color="#9710dc"/><stop offset="0.738" stop-color="#8411e4"/><stop offset="0.836" stop-color="#7c12e7"/><stop offset="1.000" stop-color="#6e13eb"/></linearGradient><linearGradient id="g7" x1="0" x2="1" y1="0" y2="0"><stop offset="0.000" stop-color="#ff8e17"/><stop offset="0.014" stop-color="#ff6b24"/><stop offset="0.033" stop-color="#ff5d2b"/><stop offset="0.053" stop-color="#ff4e3c"/><stop offset="0.092" stop-color="#ff3d4e"/><stop offset="0.151" stop-color="#ff2b64"/><stop offset="0.200" stop-color="#fc2378"/><stop offset="0.249" stop-color="#f91c8e"/><stop offset="0.322" stop-color="#ea16a3"/><stop offset="0.395" stop-color="#d412b6"/><stop offset="0.469" stop-color="#bd10c6"/><stop offset="0.542" stop-color="#a510d4"/><stop offset="0.640" stop-color="#8b10e2"/><stop offset="0.738" stop-color="#7a12e7"/><stop offset="0.836" stop-color="#7212ea"/><stop offset="1.000" stop-color="#6514ee"/></linearGradient><linearGradient id="g8" x1="0" x2="1" y1="0" y2="0"><stop offset="0.000" stop-color="#ff851a"/><stop offset="0.014" stop-color="#ff6227"/><stop offset="0.033" stop-color="#ff5336"/><stop offset="0.053" stop-color="#ff4347"/><stop offset="0.092" stop-color="#ff3359"/><stop offset="0.151" stop-color="#fd2672"/><stop offset="0.200" stop-color="#fa1e86"/><stop offset="0.249" stop-color="#f5189a"/><stop offset="0.322" stop-color="#de14ad"/><stop offset="0.395" stop-color="#c810c0"/><stop offset="0.469" stop-color="#af10ce"/><stop offset="0.542" stop-color="#9710dc"/><stop offset="0.640" stop-color="#8211e5"/><stop offset="0.738" stop-color="#7113ea"/><stop offset="0.836" stop-color="#6913ed"/><stop offset="1.000" stop-color="#5d14ed"/></linearGradient><linearGradient id="g9" x1="0" x2="1" y1="0" y2="0"><stop offset="0.000" stop-color="#ffa010"/><stop offset="0.014" stop-color="#ff7d1d"/><stop offset="0.033" stop-color="#ff7022"/><stop offset="0.053" stop-color="#ff6227"/><stop offset="0.092" stop-color="#ff5237"/><stop offset="0.151" stop-color="#ff3e4c"/><stop offset="0.200" stop-color="#ff2f5d"/><stop offset="0.249" stop-color="#fd2672"/><stop offset="0.322" stop-color="#fa1c8c"/><stop offset="0.395" stop-color="#ec16a2"/><stop offset="0.469" stop-color="#d612b4"/><stop offset="0.542" stop-color="#c110c4"/><stop offset="0.640" stop-color="#a510d4"/><stop offset="0.738" stop-color="#8e10e1"/><stop offset="0.836" stop-color="#8611e3"/><stop offset="1.000" stop-color="#7812e8"/></linearGradient><linearGradient id="g10" x1="0" x2="1" y1="0" y2="0"><stop offset="0.000" stop-color="#ffa010"/><stop offset="0.014" stop-color="#ff861a"/><stop offset="0.033" stop-color="#ff791f"/><stop offset="0.053" stop-color="#ff6b24"/><stop offset="0.092" stop-color="#ff5c2c"/><stop offset="0.151" stop-color="#ff4941"/><stop offset="0.200" stop-color="#ff3952"/><stop offset="0.249" stop-color="#ff2b64"/><stop offset="0.322" stop-color="#fb217e"/><stop offset="0.395" stop-color="#f81898"/><stop offset="0.469" stop-color="#e214aa"/><stop offset="0.542" stop-color="#ce11bb"/><stop offset="0.640" stop-color="#b310cc"/><stop offset="0.738" stop-color="#9a10da"/><stop offset="0.836" stop-color="#8f10e0"/><stop offset="1.000" stop-color="#8211e5"/></linearGradient><linearGradient id="g11" x1="0" x2="1" y1="0" y2="0"><stop offset="0.000" stop-color="#fc227c"/><stop offset="0.014" stop-color="#e214aa"/><stop offset="0.033" stop-color="#d111b9"/><stop offset="0.053" stop-color="#be10c6"/><stop offset="0.092" stop-color="#a710d3"/><stop offset="0.151" stop-color="#8e10e1"/><stop offset="0.200" stop-color="#7f11e6"/><stop offset="0.249" stop-color="#7113ea"/><stop offset="0.322" stop-color="#5f14ef"/><stop offset="0.395" stop-color="#5312e3"/><stop offset="0.469" stop-color="#4811d8"/><stop offset="0.542" stop-color="#3e0fcd"/><stop offset="0.640" stop-color="#3609bf"/><stop offset="0.738" stop-color="#2f05b4"/><stop offset="0.836" stop-color="#2c02ae"/><stop offset="1.000" stop-color="#2700a4"/></linearGradient><linearGradient id="g12" x1="0" x2="1" y1="0" y2="0"><stop offset="0.000" stop-color="#fd276e"/><stop offset="0.014" stop-color="#ee16a0"/><stop offset="0.033" stop-color="#dd13af"/><stop offset="0.053" stop-color="#cb10be"/><stop offset="0.092" stop-color="#b510cb"/><stop offset="0.151" stop-color="#9a10da"/><stop offset="0.200" stop-color="#8911e2"/><stop offset="0.249" stop-color="#7a12e7"/><stop offset="0.322" stop-color="#6813ed"/><stop offset="0.395" stop-color="#5a13ea"/><stop offset="0.469" stop-color="#4e12de"/><stop offset="0.542" stop-color="#4310d3"/><stop offset="0.640" stop-color="#3a0cc6"/><stop offset="0.738" stop-color="#3307ba"/><stop offset="0.836" stop-color="#3005b5"/><stop offset="1.000" stop-color="#2a01ab"/></linearGradient><linearGradient id="g13" x1="0" x2="1" y1="0" y2="0"><stop offset="0.000" stop-color="#f81898"/><stop offset="0.014" stop-color="#ca10be"/><stop offset="0.033" stop-color="#b610ca"/><stop offset="0.053" stop-color="#a210d6"/><stop offset="0.092" stop-color="#8d10e1"/><stop offset="0.151" stop-color="#7a12e7"/><stop offset="0.200" stop-color="#6c13ec"/><stop offset="0.249" stop-color="#5e14ee"/><stop offset="0.322" stop-color="#5212e2"/><stop offset="0.395" stop-color="#4611d6"/><stop offset="0.469" stop-color="#3d0ecb"/><stop offset="0.542" stop-color="#3609bf"/><stop offset="0.640" stop-color="#2e04b2"/><stop offset="0.738" stop-color="#2700a6"/><stop offset="0.836" stop-color="#25009e"/><stop offset="1.000" stop-color="#220092"/></linearGradient><linearGradient id="g14" x1="0" x2="1" y1="0" y2="0"><stop offset="0.000" stop-color="#fa1d8a"/><stop offset="0.014" stop-color="#d612b4"/><stop offset="0.033" stop-color="#c410c2"/><stop offset="0.053" stop-color="#af10ce"/><stop offset="0.092" stop-color="#9910db"/><stop offset="0.151" stop-color="#8411e4"/><stop offset="0.200" stop-color="#7612e9"/><stop offset="0.249" stop-color="#6713ee"/><stop offset="0.322" stop-color="#5913e9"/><stop offset="0.395" stop-color="#4d12dd"/><stop offset="0.469" stop-color="#4110d1"/><stop offset="0.542" stop-color="#3a0cc6"/><stop offset="0.640" stop-color="#3207b9"/><stop offset="0.738" stop-color="#2b02ad"/><stop offset="0.836" stop-color="#2800a7"/><stop offset="1.000" stop-color="#24009b"/></linearGradient><linearGradient id="g15" x1="0" x2="1" y1="0" y2="0"><stop offset="0.000" stop-color="#ff6028"/><stop offset="0.014" stop-color="#ff3953"/><stop offset="0.033" stop-color="#ff2b64"/><stop offset="0.053" stop-color="#fc2379"/><stop offset="0.092" stop-color="#f91b8f"/><stop offset="0.151" stop-color="#e915a5"/><stop offset="0.200" stop-color="#d712b4"/><stop offset="0.249" stop-color="#c410c2"/><stop offset="0.322" stop-color="#aa10d1"/><stop offset="0.395" stop-color="#9010e0"/><stop offset="0.469" stop-color="#7f11e6"/><stop offset="0.542" stop-color="#6e13eb"/><stop offset="0.640" stop-color="#5d14ed"/><stop offset="0.738" stop-color="#5212e2"/><stop offset="0.836" stop-color="#4c12dc"/><stop offset="1.000" stop-color="#4310d3"/></linearGradient><linearGradient id="g16" x1="0" x2="1" y1="0" y2="0"><stop offset="0.000" stop-color="#ff3655"/><stop offset="0.014" stop-color="#fa1e87"/><stop offset="0.033" stop-color="#f5179b"/><stop offset="0.053" stop-color="#e314aa"/><stop offset="0.092" stop-color="#d011ba"/><stop offset="0.151" stop-color="#b610ca"/><stop offset="0.200" stop-color="#a210d6"/><stop offset="0.249" stop-color="#8e10e1"/><stop offset="0.322" stop-color="#7c12e7"/><stop offset="0.395" stop-color="#6a13ed"/><stop offset="0.469" stop-color="#5b13eb"/><stop offset="0.542" stop-color="#5012e0"/><stop offset="0.640" stop-color="#4310d3"/><stop offset="0.738" stop-color="#3b0dc8"/><stop offset="0.836" stop-color="#380ac2"/><stop offset="1.000" stop-color="#3207b9"/></linearGradient><linearGradient id="g17" x1="0" x2="1" y1="0" y2="0"><stop offset="0.000" stop-color="#ffa010"/><stop offset="0.014" stop-color="#ff9016"/><stop offset="0.033" stop-color="#ff821b"/><stop offset="0.053" stop-color="#ff7520"/><stop offset="0.092" stop-color="#ff6626"/><stop offset="0.151" stop-color="#ff5336"/><stop offset="0.200" stop-color="#ff4347"/><stop offset="0.249" stop-color="#ff3458"/><stop offset="0.322" stop-color="#fd2670"/><stop offset="0.395" stop-color="#fa1d8a"/><stop offset="0.469" stop-color="#ee16a0"/><stop offset="0.542" stop-color="#da13b1"/><stop offset="0.640" stop-color="#c110c4"/><stop offset="0.738" stop-color="#a810d2"/><stop offset="0.836" stop-color="#9d10d9"/><stop offset="1.000" stop-color="#8b10e2"/></linearGradient><linearGradient id="g18" x1="0" x2="1" y1="0" y2="0"><stop offset="0.000" stop-color="#c810c0"/><stop offset="0.014" stop-color="#9310de"/><stop offset="0.033" stop-color="#8411e4"/><stop offset="0.053" stop-color="#7612e9"/><stop offset="0.092" stop-color="#6613ee"/><stop offset="0.151" stop-color="#5813e8"/><stop offset="0.200" stop-color="#4e12de"/><stop offset="0.249" stop-color="#4511d5"/><stop offset="0.322" stop-color="#3b0dc8"/><stop offset="0.395" stop-color="#3408bc"/><stop offset="0.469" stop-color="#2d03b0"/><stop offset="0.542" stop-color="#2700a4"/><stop offset="0.640" stop-color="#220092"/><stop offset="0.738" stop-color="#1e0083"/><stop offset="0.836" stop-color="#1c007b"/><stop offset="1.000" stop-color="#18006f"/></linearGradient><linearGradient id="g19" x1="0" x2="1" y1="0" y2="0"><stop offset="0.000" stop-color="#ba10c8"/><stop offset="0.014" stop-color="#8811e3"/><stop offset="0.033" stop-color="#7a12e7"/><stop offset="0.053" stop-color="#6c13ec"/><stop offset="0.092" stop-color="#5e14ee"/><stop offset="0.151" stop-color="#5212e2"/><stop offset="0.200" stop-color="#4811d8"/><stop offset="0.249" stop-color="#3f0fce"/><stop offset="0.322" stop-color="#370ac2"/><stop offset="0.395" stop-color="#3005b5"/><stop offset="0.469" stop-color="#2901a9"/><stop offset="0.542" stop-color="#24009b"/><stop offset="0.640" stop-color="#200089"/><stop offset="0.738" stop-color="#1b007a"/><stop offset="0.836" stop-color="#190072"/><stop offset="1.000" stop-color="#160066"/></linearGradient></defs><rect x="46" y="669" width="1022" height="1" fill="url(#g0)"/><rect x="46" y="670" width="1022" height="1" fill="url(#g1)"/><rect x="46" y="671" width="1022" height="1" fill="url(#g2)"/><rect x="46" y="672" width="1022" height="1" fill="url(#g3)"/><rect x="46" y="673" width="1022" height="1" fill="url(#g3)"/><rect x="46" y="674" width="1022" height="1" fill="url(#g4)"/><rect x="46" y="675" width="1022" height="1" fill="url(#g5)"/><rect x="46" y="676" width="1022" height="1" fill="url(#g6)"/><rect x="46" y="677" width="1022" height="1" fill="url(#g7)"/><rect x="46" y="678" width="1022" height="1" fill="url(#g8)"/><rect x="46" y="679" width="1022" height="1" fill="url(#g2)"/><rect x="46" y="680" width="1022" height="1" fill="url(#g2)"/><rect x="46" y="681" width="1022" height="1" fill="url(#g9)"/><rect x="46" y="682" width="1022" height="1" fill="url(#g6)"/><rect x="46" y="683" width="1022" height="1" fill="url(#g10)"/><rect x="46" y="684" width="1022" height="1" fill="url(#g6)"/><rect x="46" y="685" width="1022" height="1" fill="url(#g6)"/><rect x="46" y="686" width="1022" height="1" fill="url(#g10)"/><rect x="46" y="687" width="1022" height="1" fill="url(#g6)"/><rect x="46" y="688" width="1022" height="1" fill="url(#g9)"/><rect x="46" y="689" width="1022" height="1" fill="url(#g11)"/><rect x="46" y="690" width="1022" height="1" fill="url(#g12)"/><rect x="46" y="691" width="1022" height="1" fill="url(#g5)"/><rect x="46" y="692" width="1022" height="1" fill="url(#g8)"/><rect x="46" y="693" width="1022" height="1" fill="url(#g7)"/><rect x="46" y="694" width="1022" height="1" fill="url(#g8)"/><rect x="46" y="695" width="1022" height="1" fill="url(#g8)"/><rect x="46" y="696" width="1022" height="1" fill="url(#g8)"/><rect x="46" y="697" width="1022" height="1" fill="url(#g5)"/><rect x="46" y="698" width="1022" height="1" fill="url(#g13)"/><rect x="46" y="699" width="1022" height="1" fill="url(#g14)"/><rect x="46" y="700" width="1022" height="1" fill="url(#g13)"/><rect x="46" y="701" width="1022" height="1" fill="url(#g13)"/><rect x="46" y="702" width="1022" height="1" fill="url(#g0)"/><rect x="46" y="703" width="1022" height="1" fill="url(#g15)"/><rect x="46" y="704" width="1022" height="1" fill="url(#g0)"/><rect x="46" y="705" width="1022" height="1" fill="url(#g0)"/><rect x="46" y="706" width="1022" height="1" fill="url(#g0)"/><rect x="46" y="707" width="1022" height="1" fill="url(#g15)"/><rect x="46" y="708" width="1022" height="1" fill="url(#g1)"/><rect x="46" y="709" width="1022" height="1" fill="url(#g8)"/><rect x="46" y="710" width="1022" height="1" fill="url(#g15)"/><rect x="46" y="711" width="1022" height="1" fill="url(#g14)"/><rect x="46" y="712" width="1022" height="1" fill="url(#g12)"/><rect x="46" y="713" width="1022" height="1" fill="url(#g2)"/><rect x="46" y="714" width="1022" height="1" fill="url(#g1)"/><rect x="46" y="715" width="1022" height="1" fill="url(#g1)"/><rect x="46" y="716" width="1022" height="1" fill="url(#g11)"/><rect x="46" y="717" width="1022" height="1" fill="url(#g1)"/><rect x="46" y="718" width="1022" height="1" fill="url(#g1)"/><rect x="46" y="719" width="1022" height="1" fill="url(#g16)"/><rect x="46" y="720" width="1022" height="1" fill="url(#g4)"/><rect x="46" y="721" width="1022" height="1" fill="url(#g16)"/><rect x="46" y="722" width="1022" height="1" fill="url(#g9)"/><rect x="46" y="723" width="1022" height="1" fill="url(#g17)"/><rect x="46" y="724" width="1022" height="1" fill="url(#g17)"/><rect x="46" y="725" width="1022" height="1" fill="url(#g8)"/><rect x="46" y="726" width="1022" height="1" fill="url(#g5)"/><rect x="46" y="727" width="1022" height="1" fill="url(#g5)"/><rect x="46" y="728" width="1022" height="1" fill="url(#g8)"/><rect x="46" y="729" width="1022" height="1" fill="url(#g8)"/><rect x="46" y="730" width="1022" height="1" fill="url(#g14)"/><rect x="46" y="731" width="1022" height="1" fill="url(#g12)"/><rect x="46" y="732" width="1022" height="1" fill="url(#g12)"/><rect x="46" y="733" width="1022" height="1" fill="url(#g5)"/><rect x="46" y="734" width="1022" height="1" fill="url(#g5)"/><rect x="46" y="735" width="1022" height="1" fill="url(#g15)"/><rect x="46" y="736" width="1022" height="1" fill="url(#g0)"/><rect x="46" y="737" width="1022" height="1" fill="url(#g15)"/><rect x="46" y="738" width="1022" height="1" fill="url(#g12)"/><rect x="46" y="739" width="1022" height="1" fill="url(#g0)"/><rect x="46" y="740" width="1022" height="1" fill="url(#g9)"/><rect x="46" y="741" width="1022" height="1" fill="url(#g7)"/><rect x="46" y="742" width="1022" height="1" fill="url(#g7)"/><rect x="46" y="743" width="1022" height="1" fill="url(#g1)"/><rect x="46" y="744" width="1022" height="1" fill="url(#g2)"/><rect x="46" y="745" width="1022" height="1" fill="url(#g12)"/><rect x="46" y="746" width="1022" height="1" fill="url(#g12)"/><rect x="46" y="747" width="1022" height="1" fill="url(#g2)"/><rect x="46" y="748" width="1022" height="1" fill="url(#g16)"/><rect x="46" y="749" width="1022" height="1" fill="url(#g2)"/><rect x="46" y="750" width="1022" height="1" fill="url(#g12)"/><rect x="46" y="751" width="1022" height="1" fill="url(#g1)"/><rect x="46" y="752" width="1022" height="1" fill="url(#g1)"/><rect x="46" y="753" width="1022" height="1" fill="url(#g11)"/><rect x="46" y="754" width="1022" height="1" fill="url(#g5)"/><rect x="46" y="755" width="1022" height="1" fill="url(#g15)"/><rect x="46" y="756" width="1022" height="1" fill="url(#g15)"/><rect x="46" y="757" width="1022" height="1" fill="url(#g12)"/><rect x="46" y="758" width="1022" height="1" fill="url(#g6)"/><rect x="46" y="759" width="1022" height="1" fill="url(#g4)"/><rect x="46" y="760" width="1022" height="1" fill="url(#g2)"/><rect x="46" y="761" width="1022" height="1" fill="url(#g2)"/><rect x="46" y="762" width="1022" height="1" fill="url(#g6)"/><rect x="46" y="763" width="1022" height="1" fill="url(#g6)"/><rect x="46" y="764" width="1022" height="1" fill="url(#g9)"/><rect x="46" y="765" width="1022" height="1" fill="url(#g10)"/><rect x="46" y="766" width="1022" height="1" fill="url(#g10)"/><rect x="46" y="767" width="1022" height="1" fill="url(#g6)"/><rect x="46" y="768" width="1022" height="1" fill="url(#g6)"/><rect x="46" y="769" width="1022" height="1" fill="url(#g10)"/><rect x="46" y="770" width="1022" height="1" fill="url(#g9)"/><rect x="46" y="771" width="1022" height="1" fill="url(#g9)"/><rect x="46" y="772" width="1022" height="1" fill="url(#g6)"/><rect x="46" y="773" width="1022" height="1" fill="url(#g6)"/><rect x="46" y="774" width="1022" height="1" fill="url(#g18)"/><rect x="46" y="775" width="1022" height="1" fill="url(#g19)"/><rect x="46" y="776" width="1022" height="1" fill="url(#g3)"/><rect x="46" y="777" width="1022" height="1" fill="url(#g16)"/><rect x="46" y="778" width="1022" height="1" fill="url(#g16)"/><rect x="46" y="779" width="1022" height="1" fill="url(#g4)"/><rect x="46" y="780" width="1022" height="1" fill="url(#g4)"/><rect x="46" y="781" width="1022" height="1" fill="url(#g12)"/><rect x="46" y="782" width="1022" height="1" fill="url(#g11)"/><rect x="46" y="783" width="1022" height="1" fill="url(#g2)"/><rect x="46" y="784" width="1022" height="1" fill="url(#g12)"/><rect x="46" y="785" width="1022" height="1" fill="url(#g11)"/><rect x="46" y="786" width="1022" height="1" fill="url(#g2)"/><rect x="46" y="787" width="1022" height="1" fill="url(#g2)"/><rect x="46" y="788" width="1022" height="1" fill="url(#g2)"/><rect x="46" y="789" width="1022" height="1" fill="url(#g2)"/><rect x="46" y="790" width="1022" height="1" fill="url(#g16)"/><rect x="46" y="791" width="1022" height="1" fill="url(#g3)"/><rect x="46" y="792" width="1022" height="1" fill="url(#g3)"/><rect x="46" y="793" width="1022" height="1" fill="url(#g4)"/><rect x="46" y="794" width="1022" height="1" fill="url(#g5)"/><rect x="46" y="795" width="1022" height="1" fill="url(#g5)"/><rect x="46" y="796" width="1022" height="1" fill="url(#g0)"/><rect x="46" y="797" width="1022" height="1" fill="url(#g2)"/><rect x="46" y="798" width="1022" height="1" fill="url(#g5)"/><rect x="46" y="799" width="1022" height="1" fill="url(#g5)"/><rect x="46" y="800" width="1022" height="1" fill="url(#g1)"/><rect x="46" y="801" width="1022" height="1" fill="url(#g8)"/><rect x="46" y="802" width="1022" height="1" fill="url(#g11)"/><rect x="46" y="803" width="1022" height="1" fill="url(#g12)"/><rect x="46" y="804" width="1022" height="1" fill="url(#g12)"/><rect x="46" y="805" width="1022" height="1" fill="url(#g12)"/><rect x="46" y="806" width="1022" height="1" fill="url(#g12)"/><rect x="46" y="807" width="1022" height="1" fill="url(#g0)"/><rect x="46" y="808" width="1022" height="1" fill="url(#g7)"/><rect x="46" y="809" width="1022" height="1" fill="url(#g12)"/><rect x="46" y="810" width="1022" height="1" fill="url(#g8)"/><rect x="46" y="811" width="1022" height="1" fill="url(#g0)"/><rect x="46" y="812" width="1022" height="1" fill="url(#g7)"/><rect x="46" y="813" width="1022" height="1" fill="url(#g5)"/><rect x="46" y="814" width="1022" height="1" fill="url(#g8)"/><rect x="46" y="815" width="1022" height="1" fill="url(#g11)"/><rect x="46" y="816" width="1022" height="1" fill="url(#g11)"/><rect x="46" y="817" width="1022" height="1" fill="url(#g14)"/><rect x="46" y="818" width="1022" height="1" fill="url(#g13)"/><rect x="46" y="819" width="1022" height="1" fill="url(#g14)"/><rect x="46" y="820" width="1022" height="1" fill="url(#g13)"/><rect x="46" y="821" width="1022" height="1" fill="url(#g14)"/><rect x="46" y="822" width="1022" height="1" fill="url(#g11)"/><rect x="46" y="823" width="1022" height="1" fill="url(#g14)"/><rect x="46" y="824" width="1022" height="1" fill="url(#g3)"/><rect x="46" y="825" width="1022" height="1" fill="url(#g3)"/><rect x="46" y="826" width="1022" height="1" fill="url(#g5)"/><rect x="46" y="827" width="1022" height="1" fill="url(#g8)"/><rect x="46" y="828" width="1022" height="1" fill="url(#g0)"/><rect x="46" y="829" width="1022" height="1" fill="url(#g8)"/><rect x="46" y="830" width="1022" height="1" fill="url(#g0)"/><rect x="46" y="831" width="1022" height="1" fill="url(#g14)"/><rect x="46" y="832" width="1022" height="1" fill="url(#g7)"/><rect x="46" y="833" width="1022" height="1" fill="url(#g5)"/><rect x="46" y="834" width="1022" height="1" fill="url(#g8)"/><rect x="46" y="835" width="1022" height="1" fill="url(#g5)"/><rect x="46" y="836" width="1022" height="1" fill="url(#g0)"/><rect x="46" y="837" width="1022" height="1" fill="url(#g5)"/><rect x="46" y="838" width="1022" height="1" fill="url(#g5)"/><rect x="46" y="839" width="1022" height="1" fill="url(#g8)"/><rect x="46" y="840" width="1022" height="1" fill="url(#g12)"/><rect x="46" y="841" width="1022" height="1" fill="url(#g12)"/><rect x="46" y="842" width="1022" height="1" fill="url(#g12)"/><rect x="46" y="843" width="1022" height="1" fill="url(#g11)"/><rect x="46" y="844" width="1022" height="1" fill="url(#g11)"/><rect x="46" y="845" width="1022" height="1" fill="url(#g11)"/><rect x="46" y="846" width="1022" height="1" fill="url(#g11)"/><rect x="46" y="847" width="1022" height="1" fill="url(#g11)"/><rect x="46" y="848" width="1022" height="1" fill="url(#g9)"/><rect x="46" y="849" width="1022" height="1" fill="url(#g6)"/><rect x="46" y="850" width="1022" height="1" fill="url(#g7)"/><rect x="46" y="851" width="1022" height="1" fill="url(#g10)"/><rect x="46" y="852" width="1022" height="1" fill="url(#g1)"/><rect x="46" y="853" width="1022" height="1" fill="url(#g0)"/><rect x="46" y="854" width="1022" height="1" fill="url(#g0)"/><rect x="46" y="855" width="1022" height="1" fill="url(#g0)"/><rect x="46" y="856" width="1022" height="1" fill="url(#g0)"/><rect x="46" y="857" width="1022" height="1" fill="url(#g1)"/><rect x="46" y="858" width="1022" height="1" fill="url(#g1)"/><rect x="46" y="859" width="1022" height="1" fill="url(#g15)"/><rect x="46" y="860" width="1022" height="1" fill="url(#g1)"/><rect x="46" y="861" width="1022" height="1" fill="url(#g1)"/><rect x="46" y="862" width="1022" height="1" fill="url(#g1)"/><rect x="46" y="863" width="1022" height="1" fill="url(#g0)"/><rect x="46" y="864" width="1022" height="1" fill="url(#g2)"/><rect x="46" y="865" width="1022" height="1" fill="url(#g2)"/><rect x="46" y="866" width="1022" height="1" fill="url(#g4)"/><rect x="46" y="867" width="1022" height="1" fill="url(#g2)"/><rect x="46" y="868" width="1022" height="1" fill="url(#g6)"/><rect x="46" y="869" width="1022" height="1" fill="url(#g7)"/><rect x="46" y="870" width="1022" height="1" fill="url(#g6)"/><rect x="46" y="871" width="1022" height="1" fill="url(#g11)"/><rect x="46" y="872" width="1022" height="1" fill="url(#g6)"/><rect x="46" y="873" width="1022" height="1" fill="url(#g6)"/><rect x="46" y="874" width="1022" height="1" fill="url(#g6)"/><rect x="46" y="875" width="1022" height="1" fill="url(#g6)"/><rect x="46" y="876" width="1022" height="1" fill="url(#g6)"/><rect x="46" y="877" width="1022" height="1" fill="url(#g6)"/><rect x="46" y="878" width="1022" height="1" fill="url(#g11)"/><rect x="46" y="879" width="1022" height="1" fill="url(#g11)"/><rect x="46" y="880" width="1022" height="1" fill="url(#g14)"/><rect x="46" y="881" width="1022" height="1" fill="url(#g13)"/><rect x="46" y="882" width="1022" height="1" fill="url(#g11)"/><rect x="46" y="883" width="1022" height="1" fill="url(#g11)"/><rect x="46" y="884" width="1022" height="1" fill="url(#g11)"/><rect x="46" y="885" width="1022" height="1" fill="url(#g13)"/><rect x="46" y="886" width="1022" height="1" fill="url(#g6)"/><rect x="46" y="887" width="1022" height="1" fill="url(#g2)"/><rect x="46" y="888" width="1022" height="1" fill="url(#g8)"/><rect x="46" y="889" width="1022" height="1" fill="url(#g16)"/><rect x="46" y="890" width="1022" height="1" fill="url(#g4)"/><rect x="46" y="891" width="1022" height="1" fill="url(#g16)"/><rect x="46" y="892" width="1022" height="1" fill="url(#g3)"/><rect x="46" y="893" width="1022" height="1" fill="url(#g16)"/><rect x="46" y="894" width="1022" height="1" fill="url(#g3)"/><rect x="46" y="895" width="1022" height="1" fill="url(#g5)"/><rect x="46" y="896" width="1022" height="1" fill="url(#g5)"/><rect x="46" y="897" width="1022" height="1" fill="url(#g5)"/><rect x="46" y="898" width="1022" height="1" fill="url(#g8)"/><rect x="46" y="899" width="1022" height="1" fill="url(#g7)"/><rect x="46" y="900" width="1022" height="1" fill="url(#g5)"/><rect x="46" y="901" width="1022" height="1" fill="url(#g7)"/><rect x="46" y="902" width="1022" height="1" fill="url(#g5)"/><rect x="46" y="903" width="1022" height="1" fill="url(#g8)"/><rect x="46" y="904" width="1022" height="1" fill="url(#g8)"/><rect x="46" y="905" width="1022" height="1" fill="url(#g5)"/><rect x="46" y="906" width="1022" height="1" fill="url(#g5)"/><rect x="46" y="907" width="1022" height="1" fill="url(#g5)"/><rect x="46" y="908" width="1022" height="1" fill="url(#g7)"/><rect x="46" y="909" width="1022" height="1" fill="url(#g4)"/><rect x="46" y="910" width="1022" height="1" fill="url(#g16)"/><rect x="46" y="911" width="1022" height="1" fill="url(#g3)"/><rect x="46" y="912" width="1022" height="1" fill="url(#g12)"/><rect x="46" y="913" width="1022" height="1" fill="url(#g0)"/><rect x="46" y="914" width="1022" height="1" fill="url(#g8)"/><rect x="46" y="915" width="1022" height="1" fill="url(#g14)"/><rect x="46" y="916" width="1022" height="1" fill="url(#g5)"/><clipPath id="sc"><rect x="46" y="669" width="1022" height="248"/></clipPath><g clip-path="url(#sc)"><rect x="285" y="720" width="9" height="1" fill="#7d12e6"/><rect x="86" y="691" width="12" height="2" fill="#ff7122"/><rect x="416" y="848" width="21" height="1" fill="#ff3259"/><rect x="123" y="853" width="22" height="1" fill="#ff404b"/><rect x="793" y="889" width="10" height="1" fill="#5813e8"/><rect x="572" y="886" width="22" height="1" fill="#7c12e7"/><rect x="982" y="804" width="6" height="1" fill="#390bc4"/><rect x="284" y="737" width="21" height="1" fill="#fa1d8b"/><rect x="126" y="907" width="21" height="1" fill="#ff5e2a"/><rect x="403" y="719" width="18" height="1" fill="#9010e0"/><rect x="84" y="912" width="9" height="2" fill="#fc227b"/><rect x="491" y="714" width="20" height="2" fill="#7113ea"/><rect x="51" y="674" width="9" height="1" fill="#ff5237"/><rect x="64" y="777" width="6" height="1" fill="#ff3358"/><rect x="518" y="766" width="14" height="1" fill="#fe286b"/><rect x="124" y="870" width="5" height="2" fill="#fe286b"/><rect x="323" y="808" width="16" height="1" fill="#fd276e"/><rect x="973" y="790" width="5" height="1" fill="#2901aa"/><rect x="507" y="773" width="7" height="1" fill="#8b10e2"/><rect x="91" y="713" width="9" height="1" fill="#a610d3"/><rect x="946" y="894" width="21" height="1" fill="#5c14ec"/><rect x="758" y="885" width="12" height="1" fill="#3a0cc5"/><rect x="115" y="687" width="20" height="1" fill="#fc2379"/><rect x="480" y="681" width="14" height="1" fill="#fd276d"/><rect x="281" y="879" width="16" height="1" fill="#ad10cf"/><rect x="780" y="805" width="6" height="1" fill="#230097"/><rect x="945" y="853" width="16" height="1" fill="#3e0fcc"/><rect x="204" y="836" width="11" height="2" fill="#ff315b"/><rect x="74" y="845" width="14" height="1" fill="#a710d3"/><rect x="266" y="781" width="6" height="1" fill="#c410c3"/><rect x="1009" y="734" width="6" height="2" fill="#7312ea"/><rect x="920" y="892" width="14" height="1" fill="#2f04b3"/><rect x="955" y="734" width="17" height="1" fill="#8a10e2"/><rect x="1016" y="880" width="9" height="1" fill="#380ac2"/><rect x="595" y="823" width="18" height="1" fill="#5613e6"/><rect x="225" y="719" width="15" height="1" fill="#d112b8"/><rect x="616" y="915" width="10" height="2" fill="#2c03af"/><rect x="746" y="735" width="17" height="2" fill="#4310d3"/><rect x="289" y="889" width="15" height="2" fill="#d212b7"/><rect x="46" y="797" width="21" height="1" fill="#c010c4"/><rect x="407" y="912" width="9" height="2" fill="#9010e0"/><rect x="960" y="736" width="17" height="1" fill="#6d13ec"/><rect x="123" y="674" width="7" height="1" fill="#a110d6"/><rect x="474" y="915" width="5" height="1" fill="#6314ef"/><rect x="253" y="811" width="22" height="2" fill="#fd2670"/><rect x="120" y="694" width="16" height="1" fill="#fa1e88"/><rect x="167" y="753" width="8" height="1" fill="#db13b0"/><rect x="860" y="846" width="16" height="1" fill="#240098"/><rect x="245" y="722" width="12" height="1" fill="#ff6227"/><rect x="113" y="902" width="19" height="2" fill="#ff6327"/><rect x="578" y="688" width="21" height="1" fill="#f91c8d"/><rect x="408" y="698" width="14" height="1" fill="#3408bb"/><rect x="224" y="856" width="4" height="2" fill="#ff2c60"/><rect x="538" y="818" width="14" height="1" fill="#4b11db"/><rect x="103" y="819" width="5" height="1" fill="#7312ea"/><rect x="53" y="799" width="11" height="2" fill="#ff7520"/><rect x="99" y="781" width="5" height="2" fill="#fa1e87"/><rect x="143" y="717" width="7" height="1" fill="#d913b2"/><rect x="173" y="837" width="15" height="1" fill="#e415a9"/><rect x="726" y="713" width="15" height="2" fill="#2800a7"/><rect x="681" y="698" width="8" height="1" fill="#25009d"/><rect x="433" y="677" width="20" height="2" fill="#fc237a"/><rect x="104" y="891" width="11" height="2" fill="#aa10d1"/><rect x="227" y="682" width="14" height="2" fill="#ff5d2b"/><rect x="116" y="714" width="7" height="1" fill="#ff5039"/><rect x="550" y="802" width="4" height="1" fill="#6614ee"/><rect x="935" y="872" width="7" height="1" fill="#b410cb"/><rect x="667" y="823" width="6" height="1" fill="#2600a0"/><rect x="724" y="764" width="12" height="1" fill="#6913ed"/><rect x="478" y="674" width="13" height="1" fill="#4e12de"/><rect x="977" y="894" width="13" height="2" fill="#4e12de"/><rect x="187" y="795" width="17" height="1" fill="#d312b7"/><rect x="239" y="824" width="14" height="1" fill="#f0179e"/><rect x="769" y="916" width="5" height="1" fill="#9310de"/><rect x="509" y="809" width="8" height="2" fill="#3609bf"/><rect x="709" y="909" width="13" height="2" fill="#6c13ec"/><rect x="300" y="852" width="11" height="1" fill="#fb2081"/><rect x="1054" y="723" width="11" height="2" fill="#b410cb"/><rect x="102" y="814" width="7" height="1" fill="#fa1d8a"/><rect x="456" y="676" width="10" height="1" fill="#a810d2"/><rect x="533" y="684" width="12" height="1" fill="#fa1c8c"/><rect x="94" y="907" width="5" height="2" fill="#ff6e23"/><rect x="966" y="783" width="6" height="1" fill="#240099"/><rect x="229" y="702" width="19" height="2" fill="#b410cb"/><rect x="253" y="709" width="11" height="2" fill="#ff414a"/><rect x="129" y="887" width="7" height="1" fill="#9d10d8"/><rect x="919" y="713" width="8" height="1" fill="#25009d"/><rect x="107" y="844" width="12" height="1" fill="#7a12e7"/><rect x="146" y="803" width="11" height="2" fill="#ee16a0"/><rect x="277" y="812" width="6" height="1" fill="#ff305c"/><rect x="214" y="813" width="14" height="1" fill="#e114ab"/><rect x="70" y="829" width="4" height="1" fill="#ff8719"/><rect x="57" y="717" width="5" height="2" fill="#ff6227"/><rect x="114" y="899" width="12" height="1" fill="#ff6426"/><rect x="121" y="762" width="7" height="1" fill="#ff6c24"/><rect x="271" y="847" width="13" height="2" fill="#9610dd"/><rect x="122" y="683" width="4" height="1" fill="#ff3952"/><rect x="90" y="689" width="16" height="1" fill="#f1179e"/><rect x="973" y="896" width="16" height="1" fill="#4811d8"/><rect x="732" y="674" width="4" height="1" fill="#3408bb"/><rect x="138" y="827" width="12" height="1" fill="#f2179d"/><rect x="314" y="837" width="17" height="1" fill="#fa1e87"/><rect x="380" y="811" width="16" height="2" fill="#f3179d"/><rect x="216" y="757" width="7" height="1" fill="#7512e9"/><rect x="58" y="677" width="11" height="1" fill="#ff8d17"/><rect x="522" y="738" width="13" height="2" fill="#380bc3"/><rect x="131" y="839" width="18" height="2" fill="#f4179c"/><rect x="499" y="736" width="6" height="1" fill="#6713ee"/><rect x="674" y="741" width="19" height="2" fill="#d212b8"/><rect x="306" y="906" width="14" height="2" fill="#b210cd"/><rect x="503" y="805" width="7" height="1" fill="#7912e8"/><rect x="725" y="686" width="22" height="1" fill="#ea16a3"/><rect x="680" y="755" width="6" height="2" fill="#3f10cf"/><rect x="53" y="690" width="8" height="1" fill="#cd11bc"/><rect x="304" y="838" width="22" height="2" fill="#a310d5"/><rect x="47" y="873" width="14" height="1" fill="#ff5831"/><rect x="581" y="696" width="4" height="1" fill="#d312b7"/><rect x="113" y="703" width="13" height="1" fill="#ff4644"/><rect x="73" y="884" width="9" height="1" fill="#fb227d"/><rect x="536" y="688" width="12" height="2" fill="#f91c8d"/><rect x="157" y="855" width="9" height="1" fill="#d312b7"/><rect x="50" y="823" width="6" height="1" fill="#fe2a66"/><rect x="273" y="896" width="13" height="2" fill="#ff305c"/><rect x="135" y="889" width="20" height="1" fill="#fb1f84"/><rect x="158" y="733" width="9" height="1" fill="#ff3f4b"/><rect x="94" y="753" width="20" height="1" fill="#9110df"/><rect x="513" y="823" width="20" height="1" fill="#3106b7"/><rect x="445" y="869" width="8" height="2" fill="#9010e0"/><rect x="225" y="870" width="16" height="2" fill="#e916a4"/><rect x="46" y="691" width="17" height="1" fill="#ff2c60"/><rect x="65" y="718" width="6" height="1" fill="#ff6626"/><rect x="118" y="706" width="12" height="2" fill="#ff4446"/><rect x="107" y="811" width="10" height="1" fill="#e916a4"/><rect x="214" y="916" width="10" height="1" fill="#ff4348"/><rect x="223" y="679" width="18" height="2" fill="#c510c2"/><rect x="361" y="826" width="15" height="1" fill="#fa1d89"/><rect x="85" y="848" width="14" height="2" fill="#ff3f4b"/><rect x="835" y="876" width="20" height="2" fill="#bf10c5"/><rect x="647" y="914" width="9" height="2" fill="#b310cc"/><rect x="447" y="855" width="20" height="2" fill="#d212b8"/><rect x="48" y="824" width="22" height="1" fill="#f81994"/><rect x="84" y="680" width="6" height="2" fill="#fc2379"/><rect x="995" y="811" width="13" height="1" fill="#4010d0"/><rect x="442" y="846" width="7" height="2" fill="#7412e9"/><rect x="50" y="901" width="14" height="1" fill="#ff4545"/><rect x="541" y="679" width="9" height="2" fill="#370ac1"/><rect x="356" y="778" width="21" height="2" fill="#bb10c7"/><rect x="256" y="833" width="16" height="1" fill="#b810c9"/><rect x="938" y="868" width="15" height="1" fill="#5012e0"/><rect x="165" y="694" width="4" height="1" fill="#ff5d2b"/><rect x="205" y="729" width="22" height="1" fill="#ff4447"/><rect x="1058" y="739" width="17" height="1" fill="#3e0fcd"/><rect x="580" y="884" width="8" height="1" fill="#2b02ae"/><rect x="436" y="805" width="12" height="1" fill="#4811d8"/><rect x="292" y="810" width="8" height="1" fill="#ff2b62"/><rect x="315" y="767" width="6" height="1" fill="#cc11bd"/><rect x="903" y="727" width="19" height="2" fill="#3f0fcf"/><rect x="382" y="746" width="11" height="2" fill="#4410d4"/><rect x="83" y="876" width="6" height="1" fill="#ff4446"/><rect x="1011" y="906" width="15" height="2" fill="#3c0dc9"/><rect x="58" y="881" width="10" height="2" fill="#8611e3"/><rect x="331" y="833" width="20" height="1" fill="#fd2672"/><rect x="540" y="669" width="10" height="2" fill="#5e14ee"/><rect x="505" y="708" width="17" height="1" fill="#6e13eb"/><rect x="1019" y="903" width="21" height="1" fill="#8511e4"/><rect x="810" y="674" width="5" height="1" fill="#2b02ac"/><rect x="528" y="844" width="11" height="2" fill="#6a13ed"/><rect x="831" y="909" width="19" height="1" fill="#4f12df"/><rect x="466" y="847" width="8" height="2" fill="#3609bf"/><rect x="743" y="816" width="15" height="2" fill="#2700a5"/><rect x="579" y="913" width="12" height="1" fill="#aa10d1"/><rect x="360" y="689" width="16" height="2" fill="#9110e0"/><rect x="650" y="735" width="13" height="1" fill="#4210d2"/><rect x="446" y="866" width="4" height="2" fill="#9110e0"/><rect x="144" y="900" width="4" height="1" fill="#f91a92"/><rect x="194" y="751" width="16" height="1" fill="#ff3358"/><rect x="101" y="736" width="15" height="1" fill="#eb16a3"/><rect x="98" y="787" width="18" height="1" fill="#fb227c"/><rect x="533" y="856" width="9" height="1" fill="#7212ea"/><rect x="611" y="681" width="20" height="1" fill="#9110df"/><rect x="754" y="788" width="10" height="2" fill="#2700a3"/><rect x="751" y="770" width="14" height="1" fill="#ce11bb"/><rect x="218" y="724" width="6" height="1" fill="#fd286c"/><rect x="1026" y="863" width="11" height="1" fill="#3f0fcf"/><rect x="1022" y="851" width="17" height="1" fill="#a910d1"/><rect x="64" y="684" width="5" height="1" fill="#ff9d11"/><rect x="263" y="855" width="12" height="1" fill="#fb2080"/><rect x="389" y="913" width="9" height="2" fill="#f91a92"/><rect x="493" y="833" width="17" height="1" fill="#dd13af"/><rect x="672" y="712" width="8" height="1" fill="#5312e3"/><rect x="611" y="703" width="19" height="1" fill="#9f10d7"/><rect x="113" y="844" width="20" height="1" fill="#e415a9"/><rect x="422" y="826" width="18" height="1" fill="#f91a91"/><rect x="50" y="904" width="18" height="1" fill="#ff2f5d"/><rect x="232" y="671" width="16" height="1" fill="#cf11ba"/><rect x="802" y="855" width="10" height="1" fill="#3f0fce"/><rect x="960" y="809" width="17" height="2" fill="#1f0088"/><rect x="77" y="819" width="10" height="1" fill="#8c10e1"/><rect x="720" y="733" width="4" height="1" fill="#4e12de"/><rect x="1000" y="865" width="10" height="1" fill="#26009f"/><rect x="136" y="823" width="10" height="1" fill="#6614ee"/><rect x="114" y="736" width="19" height="1" fill="#ff4446"/><rect x="233" y="899" width="14" height="1" fill="#ff3c4f"/><rect x="47" y="784" width="7" height="1" fill="#cd11bc"/><rect x="792" y="908" width="10" height="1" fill="#9b10da"/><rect x="721" y="883" width="15" height="1" fill="#26009f"/><rect x="633" y="789" width="14" height="2" fill="#5813e8"/><rect x="742" y="791" width="19" height="1" fill="#6f13eb"/><rect x="49" y="806" width="6" height="1" fill="#c710c1"/><rect x="1037" y="676" width="17" height="2" fill="#8d10e1"/><rect x="610" y="906" width="4" height="1" fill="#b010ce"/><rect x="244" y="819" width="14" height="2" fill="#9310de"/><rect x="1002" y="903" width="12" height="1" fill="#4d12dd"/><rect x="501" y="728" width="13" height="2" fill="#7912e8"/><rect x="66" y="792" width="6" height="1" fill="#f2179d"/><rect x="76" y="768" width="14" height="1" fill="#ff4644"/><rect x="55" y="702" width="21" height="1" fill="#ff7a1e"/><rect x="104" y="835" width="4" height="1" fill="#ff6028"/><rect x="118" y="737" width="19" height="2" fill="#e214aa"/><rect x="105" y="850" width="22" height="2" fill="#fb2081"/><rect x="567" y="708" width="5" height="1" fill="#af10cf"/><rect x="350" y="684" width="8" height="1" fill="#ff305c"/><rect x="471" y="732" width="14" height="1" fill="#390bc5"/><rect x="156" y="779" width="7" height="2" fill="#9010e0"/><rect x="771" y="714" width="4" height="2" fill="#4811d8"/><rect x="208" y="767" width="15" height="1" fill="#fa1e86"/><rect x="133" y="778" width="20" height="1" fill="#f2179d"/><rect x="297" y="890" width="10" height="1" fill="#7a12e7"/><rect x="892" y="741" width="20" height="1" fill="#5312e3"/><rect x="870" y="788" width="10" height="1" fill="#230097"/><rect x="108" y="719" width="12" height="1" fill="#9a10da"/><rect x="60" y="712" width="4" height="1" fill="#ad10d0"/><rect x="81" y="686" width="6" height="1" fill="#ff9215"/><rect x="757" y="878" width="15" height="1" fill="#2600a2"/><rect x="325" y="822" width="5" height="1" fill="#4d12dd"/><rect x="350" y="800" width="18" height="1" fill="#7f11e6"/><rect x="240" y="845" width="13" height="2" fill="#b110cd"/><rect x="495" y="832" width="10" height="2" fill="#8e10e1"/><rect x="53" y="810" width="14" height="2" fill="#ff4347"/><rect x="512" y="697" width="12" height="2" fill="#e415a9"/><rect x="684" y="700" width="5" height="1" fill="#4511d5"/><rect x="765" y="871" width="9" height="1" fill="#2600a2"/><rect x="106" y="778" width="6" height="2" fill="#fa1c8c"/><rect x="64" y="730" width="10" height="2" fill="#8c10e1"/><rect x="593" y="781" width="18" height="2" fill="#5d14ed"/><rect x="682" y="733" width="20" height="1" fill="#5713e7"/><rect x="449" y="860" width="18" height="2" fill="#d212b8"/><rect x="961" y="861" width="19" height="1" fill="#3509be"/><rect x="877" y="686" width="6" height="1" fill="#6a13ed"/><rect x="884" y="804" width="8" height="2" fill="#4611d6"/><rect x="705" y="743" width="4" height="1" fill="#9510dd"/><rect x="115" y="761" width="5" height="1" fill="#a610d4"/><rect x="695" y="860" width="12" height="1" fill="#5012e0"/><rect x="986" y="830" width="19" height="1" fill="#7e12e6"/><rect x="998" y="756" width="15" height="2" fill="#380bc3"/><rect x="129" y="740" width="12" height="1" fill="#fd2670"/><rect x="665" y="792" width="22" height="1" fill="#7d12e6"/><rect x="177" y="734" width="18" height="1" fill="#e214aa"/><rect x="948" y="746" width="4" height="2" fill="#4310d3"/><rect x="179" y="886" width="15" height="1" fill="#ff6b24"/><rect x="695" y="828" width="21" height="1" fill="#4911d9"/><rect x="89" y="863" width="20" height="2" fill="#fa1f85"/><rect x="424" y="718" width="8" height="1" fill="#6f13eb"/><rect x="363" y="824" width="17" height="1" fill="#d412b6"/><rect x="728" y="893" width="20" height="2" fill="#5f14ef"/><rect x="1059" y="825" width="6" height="1" fill="#5012e0"/><rect x="153" y="751" width="7" height="2" fill="#c910bf"/><rect x="550" y="699" width="9" height="2" fill="#2e04b2"/><rect x="631" y="898" width="22" height="1" fill="#6613ee"/><rect x="457" y="871" width="5" height="1" fill="#3f0fce"/><rect x="265" y="840" width="18" height="1" fill="#5713e7"/><rect x="109" y="819" width="6" height="1" fill="#e916a4"/><rect x="114" y="780" width="8" height="1" fill="#fe2a67"/><rect x="897" y="876" width="7" height="1" fill="#5312e3"/><rect x="801" y="869" width="19" height="1" fill="#5713e7"/><rect x="800" y="906" width="6" height="1" fill="#9a10da"/><rect x="155" y="743" width="19" height="1" fill="#ff3457"/><rect x="481" y="898" width="22" height="2" fill="#df14ac"/><rect x="666" y="783" width="8" height="2" fill="#3006b6"/><rect x="90" y="787" width="19" height="1" fill="#f91994"/><rect x="616" y="758" width="6" height="2" fill="#7412e9"/><rect x="132" y="802" width="21" height="1" fill="#e715a6"/><rect x="594" y="778" width="21" height="1" fill="#3a0cc5"/><rect x="965" y="782" width="22" height="2" fill="#3d0ecb"/><rect x="361" y="717" width="11" height="1" fill="#8711e3"/><rect x="419" y="768" width="9" height="1" fill="#c310c3"/><rect x="205" y="835" width="15" height="2" fill="#cd11bc"/><rect x="479" y="815" width="19" height="1" fill="#380bc3"/><rect x="294" y="772" width="8" height="1" fill="#ff3457"/><rect x="423" y="718" width="12" height="1" fill="#6f13eb"/><rect x="154" y="744" width="18" height="1" fill="#f61899"/><rect x="947" y="842" width="9" height="1" fill="#200089"/><rect x="795" y="916" width="22" height="2" fill="#4411d4"/><rect x="408" y="901" width="14" height="2" fill="#fa1c8c"/><rect x="344" y="887" width="5" height="1" fill="#5d14ed"/><rect x="98" y="742" width="16" height="1" fill="#fc227c"/><rect x="119" y="737" width="22" height="1" fill="#ff4149"/><rect x="50" y="822" width="6" height="1" fill="#c210c4"/><rect x="134" y="852" width="19" height="1" fill="#ce11bb"/><rect x="354" y="697" width="18" height="2" fill="#ae10cf"/><rect x="56" y="804" width="8" height="1" fill="#bd10c6"/><rect x="782" y="734" width="8" height="2" fill="#4d12dd"/><rect x="48" y="740" width="15" height="1" fill="#ff5d2c"/><rect x="265" y="814" width="13" height="1" fill="#ff3d4e"/><rect x="913" y="906" width="5" height="2" fill="#7b12e7"/><rect x="141" y="876" width="8" height="1" fill="#fb1f84"/><rect x="46" y="845" width="8" height="1" fill="#c210c3"/><rect x="229" y="780" width="16" height="2" fill="#e815a6"/><rect x="863" y="865" width="6" height="1" fill="#2901a9"/><rect x="517" y="705" width="7" height="1" fill="#cb11bd"/><rect x="282" y="752" width="13" height="1" fill="#9f10d7"/><rect x="658" y="731" width="5" height="1" fill="#2901aa"/><rect x="418" y="826" width="17" height="2" fill="#8211e5"/><rect x="195" y="694" width="18" height="1" fill="#e815a6"/><rect x="680" y="878" width="15" height="2" fill="#25009d"/><rect x="215" y="799" width="12" height="1" fill="#c910bf"/><rect x="132" y="882" width="22" height="1" fill="#7812e8"/><rect x="231" y="850" width="21" height="2" fill="#ff4644"/><rect x="894" y="866" width="19" height="2" fill="#2800a7"/><rect x="498" y="710" width="5" height="1" fill="#6713ee"/><rect x="231" y="783" width="20" height="1" fill="#da13b1"/><rect x="628" y="714" width="10" height="1" fill="#9c10d9"/><rect x="201" y="870" width="18" height="1" fill="#f1179e"/><rect x="989" y="681" width="14" height="1" fill="#ad10cf"/><rect x="885" y="745" width="13" height="2" fill="#21008d"/><rect x="911" y="817" width="5" height="1" fill="#3307bb"/><rect x="755" y="815" width="14" height="2" fill="#24009a"/><rect x="112" y="851" width="17" height="1" fill="#ff3b50"/><rect x="53" y="680" width="4" height="1" fill="#c610c1"/><rect x="996" y="783" width="12" height="2" fill="#3c0dca"/><rect x="119" y="726" width="17" height="1" fill="#ff4d3d"/><rect x="906" y="728" width="7" height="1" fill="#4511d5"/><rect x="46" y="690" width="6" height="2" fill="#d312b6"/><rect x="935" y="838" width="16" height="1" fill="#4a11da"/><rect x="427" y="916" width="6" height="2" fill="#9710dc"/><rect x="235" y="895" width="22" height="1" fill="#d813b2"/><rect x="161" y="720" width="18" height="1" fill="#fb2081"/><rect x="337" y="875" width="12" height="1" fill="#ff3d4d"/><rect x="838" y="870" width="20" height="1" fill="#bf10c5"/><rect x="621" y="810" width="8" height="1" fill="#7312ea"/><rect x="472" y="905" width="21" height="1" fill="#e214aa"/><rect x="320" y="744" width="13" height="1" fill="#9f10d7"/><rect x="125" y="713" width="13" height="1" fill="#ec16a2"/><rect x="54" y="913" width="17" height="2" fill="#fd276e"/><rect x="712" y="891" width="7" height="1" fill="#3106b7"/><rect x="273" y="787" width="18" height="1" fill="#5b13eb"/><rect x="49" y="795" width="22" height="2" fill="#ff3953"/><rect x="50" y="683" width="14" height="1" fill="#ff6427"/><rect x="489" y="730" width="12" height="2" fill="#5f14ef"/><rect x="475" y="769" width="7" height="1" fill="#b010ce"/><rect x="341" y="895" width="10" height="2" fill="#b410cb"/><rect x="568" y="670" width="8" height="2" fill="#5a13ea"/><rect x="640" y="757" width="8" height="1" fill="#3207b9"/><rect x="800" y="864" width="4" height="1" fill="#4b11db"/><rect x="168" y="685" width="10" height="2" fill="#ff5b2d"/><rect x="541" y="772" width="10" height="1" fill="#e915a5"/><rect x="266" y="895" width="21" height="1" fill="#ff315b"/><rect x="551" y="754" width="4" height="1" fill="#6514ee"/><rect x="806" y="704" width="9" height="1" fill="#8d10e1"/><rect x="235" y="771" width="9" height="1" fill="#ff6526"/><rect x="265" y="784" width="17" height="1" fill="#c210c4"/><rect x="164" y="888" width="7" height="2" fill="#f5179b"/><rect x="375" y="903" width="13" height="1" fill="#fd2672"/><rect x="424" y="699" width="4" height="2" fill="#6614ee"/><rect x="52" y="686" width="22" height="1" fill="#ff5533"/><rect x="306" y="880" width="13" height="2" fill="#8111e5"/><rect x="569" y="700" width="21" height="2" fill="#2c03ae"/><rect x="320" y="700" width="17" height="1" fill="#4711d7"/><rect x="813" y="840" width="5" height="1" fill="#220093"/><rect x="874" y="678" width="6" height="1" fill="#9f10d7"/><rect x="108" y="771" width="22" height="1" fill="#ff771f"/><rect x="135" y="899" width="11" height="2" fill="#ff5c2c"/><rect x="574" y="860" width="12" height="2" fill="#5312e3"/><rect x="400" y="850" width="4" height="1" fill="#fc2379"/><rect x="1017" y="704" width="15" height="2" fill="#370ac2"/><rect x="327" y="819" width="21" height="1" fill="#8e10e1"/><rect x="70" y="682" width="16" height="1" fill="#ff3f4b"/><rect x="684" y="893" width="18" height="1" fill="#370ac0"/><rect x="1042" y="758" width="14" height="1" fill="#5112e1"/><rect x="196" y="814" width="16" height="1" fill="#dc13b0"/><rect x="973" y="824" width="21" height="2" fill="#2901a9"/><rect x="824" y="828" width="14" height="2" fill="#3e0fcd"/><rect x="950" y="708" width="15" height="1" fill="#6e13eb"/><rect x="107" y="764" width="6" height="1" fill="#ff3f4b"/><rect x="612" y="765" width="12" height="1" fill="#9210df"/><rect x="941" y="793" width="20" height="1" fill="#2e04b2"/><rect x="448" y="775" width="13" height="2" fill="#3c0dc9"/><rect x="49" y="811" width="9" height="2" fill="#ff8819"/><rect x="276" y="717" width="7" height="1" fill="#f91a93"/><rect x="315" y="774" width="20" height="2" fill="#2c03b0"/><rect x="152" y="771" width="4" height="1" fill="#ff6a24"/><rect x="141" y="883" width="11" height="2" fill="#e515a8"/><rect x="503" y="791" width="20" height="1" fill="#4911d9"/><rect x="388" y="803" width="13" height="1" fill="#4210d2"/><rect x="77" y="715" width="5" height="2" fill="#ff5336"/><rect x="46" y="901" width="10" height="1" fill="#ffa010"/><rect x="117" y="724" width="5" height="2" fill="#ff4644"/><rect x="309" y="911" width="10" height="1" fill="#d913b2"/><rect x="152" y="779" width="15" height="2" fill="#fb227c"/><rect x="749" y="729" width="8" height="1" fill="#5012e0"/><rect x="609" y="794" width="12" height="1" fill="#6c13ec"/><rect x="579" y="906" width="4" height="2" fill="#6913ed"/><rect x="279" y="858" width="6" height="1" fill="#a210d6"/><rect x="417" y="705" width="7" height="1" fill="#f5179b"/><rect x="972" y="686" width="16" height="1" fill="#af10ce"/><rect x="242" y="697" width="6" height="1" fill="#ff305c"/><rect x="214" y="859" width="18" height="1" fill="#fa1d89"/><rect x="144" y="844" width="17" height="1" fill="#e214aa"/><rect x="300" y="697" width="12" height="2" fill="#a610d3"/><rect x="86" y="685" width="8" height="1" fill="#ff7b1e"/><rect x="511" y="863" width="15" height="1" fill="#cc11bd"/><rect x="62" y="801" width="11" height="1" fill="#fe2a65"/><rect x="52" y="791" width="17" height="1" fill="#ff5731"/><rect x="563" y="789" width="22" height="1" fill="#6114f0"/><rect x="622" y="838" width="13" height="1" fill="#5913e9"/><rect x="774" y="723" width="18" height="1" fill="#d512b6"/><rect x="47" y="853" width="16" height="1" fill="#fd2670"/><rect x="196" y="887" width="15" height="2" fill="#7013eb"/><rect x="706" y="786" width="10" height="1" fill="#5c13ec"/><rect x="220" y="716" width="13" height="1" fill="#c710c0"/><rect x="273" y="887" width="10" height="1" fill="#cd11bc"/><rect x="58" y="780" width="18" height="1" fill="#ff3e4d"/><rect x="249" y="716" width="5" height="1" fill="#5513e5"/><rect x="940" y="860" width="22" height="1" fill="#3e0fcd"/><rect x="285" y="873" width="13" height="1" fill="#ff3655"/><rect x="167" y="678" width="12" height="1" fill="#ff4743"/><rect x="1030" y="735" width="18" height="1" fill="#6713ee"/><rect x="474" y="884" width="13" height="1" fill="#7512e9"/><rect x="430" y="892" width="8" height="2" fill="#5613e6"/><rect x="840" y="794" width="9" height="1" fill="#4f12df"/><rect x="55" y="671" width="20" height="1" fill="#ff2b62"/><rect x="549" y="809" width="6" height="1" fill="#3207b9"/><rect x="880" y="749" width="21" height="1" fill="#26009f"/><rect x="191" y="713" width="22" height="1" fill="#d011b9"/><rect x="331" y="816" width="4" height="1" fill="#4611d6"/><rect x="763" y="803" width="8" height="1" fill="#4210d2"/><rect x="801" y="680" width="11" height="1" fill="#5112e1"/><rect x="49" y="698" width="14" height="1" fill="#8b10e2"/><rect x="361" y="745" width="7" height="1" fill="#a010d7"/><rect x="73" y="874" width="19" height="1" fill="#ff3c4f"/><rect x="819" y="717" width="8" height="2" fill="#3a0cc6"/><rect x="191" y="726" width="9" height="2" fill="#ff4a40"/><rect x="1014" y="888" width="19" height="2" fill="#3f10cf"/><rect x="556" y="833" width="7" height="2" fill="#cd11bc"/><rect x="447" y="897" width="10" height="1" fill="#f71898"/><rect x="312" y="851" width="10" height="1" fill="#e415a9"/><rect x="399" y="763" width="6" height="1" fill="#bd10c6"/><rect x="662" y="764" width="21" height="1" fill="#e114ac"/><rect x="565" y="821" width="4" height="1" fill="#3106b7"/><rect x="55" y="718" width="22" height="2" fill="#ff6725"/><rect x="146" y="907" width="21" height="1" fill="#ed16a1"/><rect x="278" y="879" width="19" height="1" fill="#9210df"/><rect x="183" y="885" width="12" height="1" fill="#bb10c7"/><rect x="434" y="842" width="12" height="2" fill="#4210d2"/><rect x="881" y="726" width="12" height="2" fill="#9010e0"/><rect x="54" y="738" width="16" height="1" fill="#ad10d0"/><rect x="707" y="789" width="11" height="1" fill="#2d03b1"/><rect x="600" y="799" width="12" height="1" fill="#cd11bc"/><rect x="882" y="913" width="12" height="2" fill="#7312ea"/><rect x="985" y="718" width="8" height="2" fill="#7512e9"/><rect x="436" y="828" width="20" height="2" fill="#7e12e6"/><rect x="331" y="698" width="9" height="2" fill="#8511e4"/><rect x="192" y="823" width="5" height="1" fill="#c710c1"/><rect x="556" y="859" width="21" height="2" fill="#b010ce"/><rect x="409" y="829" width="19" height="1" fill="#9b10da"/><rect x="172" y="820" width="21" height="1" fill="#b010ce"/><rect x="946" y="908" width="15" height="1" fill="#4911d9"/><rect x="968" y="723" width="8" height="1" fill="#6d13ec"/><rect x="1035" y="891" width="15" height="1" fill="#4b11db"/><rect x="999" y="896" width="20" height="1" fill="#3c0dc9"/><rect x="61" y="869" width="16" height="1" fill="#ff801c"/><rect x="86" y="777" width="14" height="1" fill="#a910d2"/><rect x="172" y="719" width="4" height="1" fill="#8b10e2"/><rect x="412" y="820" width="15" height="1" fill="#3307ba"/><rect x="381" y="715" width="21" height="1" fill="#7812e8"/><rect x="269" y="877" width="6" height="1" fill="#db13b0"/><rect x="377" y="706" width="18" height="2" fill="#e715a6"/><rect x="412" y="889" width="13" height="2" fill="#a910d2"/><rect x="315" y="909" width="17" height="1" fill="#6214ef"/><rect x="93" y="861" width="20" height="2" fill="#e214ab"/><rect x="136" y="823" width="11" height="1" fill="#c210c3"/><rect x="845" y="790" width="9" height="1" fill="#2d04b1"/><rect x="890" y="866" width="20" height="1" fill="#5913e9"/><rect x="924" y="678" width="12" height="1" fill="#4411d4"/><rect x="284" y="695" width="9" height="1" fill="#bb10c7"/><rect x="985" y="786" width="17" height="2" fill="#4110d1"/><rect x="934" y="678" width="21" height="1" fill="#9810dc"/><rect x="68" y="705" width="9" height="1" fill="#fe286a"/><rect x="84" y="911" width="13" height="2" fill="#ff3655"/><rect x="54" y="811" width="12" height="1" fill="#ff7d1d"/><rect x="1013" y="836" width="19" height="2" fill="#4010cf"/><rect x="463" y="890" width="12" height="2" fill="#a510d4"/><rect x="704" y="691" width="19" height="2" fill="#4e12de"/><rect x="598" y="729" width="19" height="1" fill="#cc11bc"/><rect x="441" y="730" width="17" height="1" fill="#7312ea"/><rect x="612" y="864" width="4" height="2" fill="#390bc4"/><rect x="53" y="671" width="4" height="1" fill="#ff3f4b"/><rect x="826" y="774" width="18" height="2" fill="#110054"/><rect x="58" y="695" width="6" height="1" fill="#ff7d1d"/><rect x="174" y="793" width="13" height="1" fill="#fa1f85"/><rect x="436" y="841" width="17" height="1" fill="#7e11e6"/><rect x="847" y="684" width="5" height="2" fill="#b110cd"/><rect x="605" y="815" width="6" height="2" fill="#5c13ec"/><rect x="528" y="884" width="21" height="2" fill="#380ac2"/><rect x="125" y="671" width="21" height="2" fill="#8511e4"/><rect x="1034" y="726" width="17" height="2" fill="#3b0dc7"/><rect x="454" y="753" width="15" height="1" fill="#7a12e7"/><rect x="78" y="837" width="8" height="1" fill="#fd2574"/><rect x="792" y="878" width="15" height="1" fill="#4511d5"/><rect x="538" y="848" width="21" height="1" fill="#f4179b"/><rect x="1063" y="839" width="10" height="1" fill="#3e0fcd"/><rect x="919" y="745" width="9" height="1" fill="#25009d"/><rect x="811" y="715" width="4" height="1" fill="#3b0cc7"/><rect x="532" y="689" width="13" height="1" fill="#6813ed"/><rect x="625" y="695" width="11" height="2" fill="#5f14ef"/><rect x="619" y="848" width="20" height="1" fill="#df14ad"/><rect x="116" y="881" width="10" height="1" fill="#cd11bc"/><rect x="590" y="889" width="13" height="2" fill="#3e0fcd"/><rect x="746" y="779" width="9" height="2" fill="#3207b9"/><rect x="640" y="811" width="5" height="2" fill="#5e14ee"/><rect x="873" y="874" width="7" height="1" fill="#a010d7"/><rect x="203" y="880" width="12" height="1" fill="#5d14ed"/><rect x="77" y="786" width="12" height="1" fill="#fe2a67"/><rect x="106" y="693" width="9" height="2" fill="#fb217e"/><rect x="319" y="670" width="6" height="1" fill="#ee16a0"/><rect x="757" y="815" width="4" height="1" fill="#220092"/><rect x="512" y="772" width="9" height="1" fill="#9510dd"/><rect x="48" y="868" width="4" height="1" fill="#ff6526"/><rect x="59" y="786" width="19" height="1" fill="#cf11ba"/><rect x="207" y="840" width="10" height="2" fill="#d913b2"/><rect x="110" y="790" width="5" height="2" fill="#9a10da"/><rect x="700" y="880" width="9" height="2" fill="#3e0ecc"/><rect x="462" y="686" width="12" height="2" fill="#ff325a"/><rect x="510" y="714" width="15" height="2" fill="#6d13ec"/><rect x="188" y="836" width="5" height="1" fill="#ff4149"/><rect x="615" y="841" width="18" height="2" fill="#2c03af"/><rect x="892" y="688" width="9" height="1" fill="#c710c0"/><rect x="747" y="816" width="6" height="1" fill="#4410d4"/><rect x="91" y="713" width="20" height="2" fill="#fc2379"/><rect x="718" y="707" width="18" height="1" fill="#8711e3"/><rect x="147" y="679" width="22" height="1" fill="#8611e3"/><rect x="782" y="837" width="5" height="1" fill="#9e10d8"/><rect x="698" y="752" width="9" height="1" fill="#4310d3"/><rect x="332" y="793" width="22" height="1" fill="#5e14ee"/><rect x="713" y="781" width="16" height="1" fill="#2d03b0"/><rect x="52" y="881" width="18" height="1" fill="#a010d7"/><rect x="152" y="762" width="21" height="2" fill="#fb217e"/><rect x="1057" y="780" width="19" height="2" fill="#2a01ab"/><rect x="46" y="683" width="10" height="1" fill="#ff6b24"/><rect x="1040" y="831" width="6" height="1" fill="#370ac1"/><rect x="387" y="897" width="4" height="2" fill="#8b10e2"/><rect x="851" y="851" width="14" height="1" fill="#6314ef"/><rect x="399" y="884" width="17" height="1" fill="#7d12e6"/><rect x="386" y="887" width="4" height="1" fill="#a610d4"/><rect x="206" y="852" width="13" height="1" fill="#b110cd"/><rect x="832" y="673" width="20" height="1" fill="#3206b8"/><rect x="888" y="856" width="22" height="1" fill="#3c0dc9"/><rect x="52" y="889" width="21" height="2" fill="#ff4149"/><rect x="46" y="869" width="5" height="2" fill="#ffa010"/><rect x="100" y="671" width="15" height="1" fill="#fb227d"/><rect x="973" y="776" width="4" height="1" fill="#5b13eb"/><rect x="203" y="724" width="11" height="1" fill="#ff6e23"/><rect x="1047" y="707" width="7" height="1" fill="#5713e7"/><rect x="124" y="717" width="12" height="2" fill="#ff4c3e"/><rect x="106" y="883" width="20" height="1" fill="#8311e4"/><rect x="602" y="799" width="14" height="2" fill="#cc11bd"/><rect x="360" y="871" width="14" height="2" fill="#4010d0"/><rect x="666" y="908" width="10" height="1" fill="#d512b5"/><rect x="76" y="846" width="21" height="1" fill="#8911e2"/><rect x="640" y="852" width="11" height="2" fill="#a610d3"/><rect x="195" y="801" width="22" height="1" fill="#ff3c4e"/><rect x="141" y="874" width="9" height="1" fill="#ff6427"/><rect x="133" y="755" width="16" height="1" fill="#ff3259"/><rect x="535" y="748" width="15" height="1" fill="#8411e4"/><rect x="763" y="869" width="20" height="1" fill="#a110d6"/><rect x="48" y="783" width="19" height="1" fill="#ff3a50"/><rect x="614" y="835" width="9" height="1" fill="#ca10bf"/><rect x="178" y="758" width="5" height="2" fill="#ff6c23"/><rect x="493" y="750" width="14" height="1" fill="#7113ea"/><rect x="671" y="818" width="18" height="1" fill="#230096"/><rect x="572" y="700" width="4" height="1" fill="#2c03af"/><rect x="138" y="683" width="22" height="1" fill="#ff8719"/><rect x="921" y="793" width="17" height="1" fill="#5713e7"/><rect x="178" y="701" width="20" height="1" fill="#bc10c7"/><rect x="147" y="849" width="4" height="2" fill="#ff7520"/><rect x="83" y="822" width="20" height="1" fill="#8e10e1"/><rect x="551" y="806" width="21" height="2" fill="#5c13ec"/><rect x="577" y="916" width="17" height="2" fill="#5f14ef"/><rect x="859" y="901" width="4" height="2" fill="#9310de"/><rect x="459" y="904" width="10" height="2" fill="#f91b8f"/><rect x="867" y="777" width="10" height="2" fill="#2d03b0"/><rect x="220" y="756" width="6" height="2" fill="#9f10d8"/><rect x="794" y="697" width="17" height="1" fill="#9a10da"/><rect x="657" y="912" width="12" height="1" fill="#2901aa"/><rect x="226" y="853" width="21" height="1" fill="#c310c3"/><rect x="616" y="710" width="17" height="2" fill="#9e10d8"/><rect x="518" y="905" width="19" height="2" fill="#7e11e6"/><rect x="435" y="825" width="7" height="1" fill="#be10c6"/><rect x="148" y="743" width="22" height="2" fill="#c810c0"/><rect x="342" y="887" width="18" height="1" fill="#5d14ed"/><rect x="251" y="680" width="16" height="2" fill="#7312ea"/><rect x="323" y="830" width="11" height="2" fill="#fa1d89"/><rect x="732" y="795" width="20" height="1" fill="#5813e8"/><rect x="107" y="709" width="7" height="1" fill="#fd2670"/><rect x="999" y="756" width="16" height="2" fill="#380bc3"/><rect x="206" y="856" width="7" height="1" fill="#da13b1"/><rect x="426" y="744" width="14" height="2" fill="#4911d9"/><rect x="87" y="742" width="22" height="1" fill="#ff7f1c"/><rect x="69" y="834" width="12" height="1" fill="#ff3754"/><rect x="328" y="914" width="13" height="1" fill="#fb217e"/><rect x="46" y="788" width="7" height="1" fill="#ff4941"/><rect x="93" y="756" width="4" height="2" fill="#db13b0"/><rect x="267" y="712" width="5" height="2" fill="#5713e7"/><rect x="1012" y="881" width="13" height="2" fill="#3005b5"/><rect x="117" y="747" width="14" height="1" fill="#ef179f"/><rect x="86" y="828" width="20" height="2" fill="#ff5138"/><rect x="783" y="887" width="9" height="2" fill="#5312e3"/><rect x="306" y="696" width="21" height="2" fill="#cc11bd"/><rect x="490" y="819" width="9" height="2" fill="#6913ed"/><rect x="267" y="743" width="14" height="1" fill="#b310cc"/><rect x="729" y="685" width="22" height="1" fill="#b710ca"/><rect x="484" y="680" width="5" height="1" fill="#4711d7"/><rect x="483" y="749" width="9" height="1" fill="#7412e9"/><rect x="50" y="857" width="17" height="2" fill="#ff7520"/><rect x="46" y="799" width="14" height="1" fill="#ff9315"/><rect x="412" y="763" width="14" height="1" fill="#b710ca"/><rect x="554" y="782" width="7" height="1" fill="#2e04b2"/><rect x="50" y="909" width="18" height="1" fill="#e315a9"/><rect x="199" y="849" width="22" height="1" fill="#f1179e"/><rect x="60" y="849" width="11" height="1" fill="#ff3f4c"/><rect x="461" y="797" width="15" height="1" fill="#7812e8"/><rect x="322" y="723" width="13" height="2" fill="#ff6028"/><rect x="688" y="757" width="19" height="1" fill="#5713e7"/><rect x="141" y="795" width="7" height="1" fill="#ff5a2e"/><rect x="313" y="758" width="5" height="1" fill="#d813b2"/><rect x="740" y="745" width="19" height="1" fill="#5112e1"/><rect x="647" y="724" width="17" height="1" fill="#8a10e2"/><rect x="81" y="831" width="11" height="1" fill="#f81995"/><rect x="403" y="848" width="17" height="1" fill="#fd276f"/><rect x="910" y="893" width="12" height="1" fill="#25009d"/><rect x="278" y="872" width="5" height="1" fill="#ff4f3b"/><rect x="49" y="703" width="20" height="1" fill="#f81994"/><rect x="737" y="752" width="22" height="1" fill="#3f0fce"/><rect x="133" y="770" width="10" height="1" fill="#ff791f"/><rect x="824" y="684" width="13" height="2" fill="#6514ee"/><rect x="1064" y="698" width="8" height="1" fill="#2e04b2"/><rect x="661" y="820" width="20" height="1" fill="#4110d1"/><rect x="560" y="777" width="20" height="2" fill="#390bc4"/><rect x="78" y="861" width="11" height="1" fill="#ff5a2e"/><rect x="274" y="719" width="11" height="1" fill="#bf10c5"/><rect x="62" y="802" width="18" height="2" fill="#9510dd"/><rect x="74" y="683" width="12" height="1" fill="#ff9414"/><rect x="222" y="689" width="20" height="2" fill="#5813e8"/><rect x="217" y="773" width="5" height="1" fill="#ee16a0"/><rect x="797" y="789" width="16" height="1" fill="#4511d5"/><rect x="728" y="869" width="12" height="1" fill="#5f14ef"/><rect x="526" y="814" width="12" height="2" fill="#ec16a2"/><rect x="179" y="796" width="6" height="1" fill="#ff4446"/><rect x="757" y="715" width="9" height="1" fill="#4310d3"/><rect x="603" y="808" width="15" height="2" fill="#6c13ec"/><rect x="94" y="730" width="7" height="1" fill="#f1179e"/><rect x="639" y="836" width="22" height="2" fill="#b310cc"/><rect x="255" y="684" width="20" height="2" fill="#ff5435"/><rect x="650" y="913" width="17" height="1" fill="#b110cd"/><rect x="672" y="890" width="10" height="2" fill="#3c0dc9"/><rect x="92" y="683" width="12" height="1" fill="#ff9a12"/><rect x="171" y="898" width="20" height="1" fill="#f0179f"/><rect x="280" y="831" width="21" height="1" fill="#5312e3"/><rect x="231" y="706" width="11" height="1" fill="#b510cb"/><rect x="655" y="703" width="14" height="2" fill="#7f11e6"/><rect x="183" y="714" width="18" height="2" fill="#ff2c60"/><rect x="857" y="888" width="14" height="2" fill="#4e12de"/><rect x="280" y="736" width="6" height="2" fill="#a210d6"/><rect x="116" y="859" width="16" height="1" fill="#ff2f5d"/><rect x="435" y="801" width="15" height="1" fill="#ee16a0"/><rect x="326" y="696" width="15" height="1" fill="#c710c1"/><rect x="69" y="713" width="12" height="1" fill="#fc227b"/><rect x="895" y="789" width="11" height="1" fill="#4010cf"/><rect x="404" y="849" width="14" height="1" fill="#fd276e"/><rect x="370" y="726" width="14" height="2" fill="#fb217e"/><rect x="181" y="881" width="13" height="1" fill="#5412e4"/><rect x="164" y="725" width="17" height="1" fill="#ff5c2d"/><rect x="875" y="813" width="18" height="1" fill="#9110e0"/><rect x="157" y="715" width="19" height="1" fill="#d112b8"/><rect x="119" y="789" width="4" height="2" fill="#fa1f84"/><rect x="231" y="682" width="20" height="1" fill="#f2179d"/><rect x="252" y="736" width="16" height="1" fill="#b910c8"/><rect x="597" y="711" width="4" height="2" fill="#2700a4"/><rect x="362" y="844" width="7" height="1" fill="#4110d1"/><rect x="750" y="784" width="20" height="2" fill="#5012e0"/><rect x="291" y="781" width="10" height="2" fill="#b810c9"/><rect x="509" y="699" width="17" height="2" fill="#2d04b1"/><rect x="608" y="767" width="12" height="2" fill="#ef16a0"/><rect x="520" y="716" width="18" height="1" fill="#6b13ec"/><rect x="165" y="723" width="4" height="1" fill="#ff791f"/><rect x="145" y="858" width="17" height="1" fill="#ca10bf"/><rect x="360" y="889" width="7" height="2" fill="#6214ef"/><rect x="136" y="798" width="13" height="2" fill="#ff5138"/><rect x="854" y="712" width="12" height="1" fill="#4210d2"/><rect x="793" y="707" width="4" height="1" fill="#6813ed"/><rect x="300" y="848" width="13" height="1" fill="#db13b0"/><rect x="404" y="688" width="22" height="1" fill="#ff3556"/><rect x="270" y="860" width="6" height="1" fill="#b410cc"/><rect x="666" y="838" width="11" height="2" fill="#6114f0"/><rect x="139" y="739" width="4" height="2" fill="#ff4743"/><rect x="249" y="734" width="9" height="1" fill="#ff3853"/><rect x="782" y="750" width="11" height="1" fill="#230096"/><rect x="581" y="857" width="14" height="1" fill="#9b10da"/><rect x="779" y="798" width="11" height="1" fill="#9e10d8"/><rect x="247" y="890" width="13" height="1" fill="#e214ab"/><rect x="72" y="901" width="22" height="1" fill="#ff8919"/><rect x="333" y="792" width="8" height="2" fill="#de14ae"/><rect x="574" y="805" width="8" height="2" fill="#6014f0"/><rect x="626" y="711" width="5" height="2" fill="#25009f"/><rect x="817" y="819" width="21" height="1" fill="#3609bf"/><rect x="183" y="822" width="6" height="1" fill="#d612b4"/><rect x="510" y="783" width="9" height="1" fill="#3a0cc5"/><rect x="96" y="889" width="16" height="1" fill="#bb10c7"/><rect x="89" y="845" width="22" height="1" fill="#ef16a0"/><rect x="175" y="736" width="11" height="1" fill="#d813b3"/><rect x="531" y="793" width="12" height="2" fill="#8611e3"/><rect x="769" y="747" width="20" height="1" fill="#5412e4"/><rect x="854" y="672" width="4" height="1" fill="#6314ef"/><rect x="743" y="751" width="4" height="1" fill="#4b11db"/><rect x="984" y="745" width="9" height="1" fill="#4110d1"/><rect x="105" y="695" width="13" height="1" fill="#ff5e2a"/><rect x="242" y="796" width="6" height="1" fill="#b210cd"/><rect x="244" y="808" width="4" height="1" fill="#d813b2"/><rect x="944" y="772" width="5" height="1" fill="#5713e7"/><rect x="117" y="689" width="19" height="1" fill="#7512e9"/><rect x="62" y="798" width="6" height="1" fill="#ff831b"/><rect x="783" y="762" width="15" height="1" fill="#ab10d1"/><rect x="130" y="748" width="21" height="2" fill="#9910db"/><rect x="229" y="772" width="19" height="1" fill="#e715a6"/><rect x="883" y="851" width="10" height="2" fill="#6a13ed"/><rect x="83" y="762" width="22" height="1" fill="#ff8b18"/><rect x="427" y="890" width="19" height="1" fill="#5c13ec"/><rect x="350" y="680" width="16" height="2" fill="#a210d6"/><rect x="95" y="679" width="12" height="1" fill="#9310de"/><rect x="536" y="716" width="13" height="1" fill="#6813ed"/><rect x="813" y="836" width="22" height="1" fill="#3e0fcd"/><rect x="818" y="819" width="12" height="1" fill="#3e0fcd"/><rect x="47" y="689" width="22" height="2" fill="#fe2969"/><rect x="570" y="748" width="19" height="1" fill="#7c12e7"/><rect x="830" y="835" width="6" height="1" fill="#9710dc"/><rect x="610" y="840" width="13" height="2" fill="#2d03b0"/><rect x="56" y="878" width="22" height="1" fill="#b610ca"/><rect x="876" y="769" width="21" height="1" fill="#7312ea"/><rect x="59" y="761" width="12" height="2" fill="#b810c9"/><rect x="679" y="729" width="8" height="1" fill="#c610c1"/><rect x="657" y="912" width="14" height="1" fill="#4e12de"/><rect x="340" y="805" width="19" height="1" fill="#a510d4"/><rect x="172" y="708" width="22" height="1" fill="#ff3952"/><rect x="215" y="908" width="16" height="2" fill="#ff4149"/><rect x="888" y="770" width="11" height="1" fill="#c810c0"/><rect x="87" y="672" width="5" height="1" fill="#e014ac"/><rect x="337" y="854" width="11" height="1" fill="#8d10e1"/><rect x="103" y="898" width="4" height="1" fill="#fc227b"/><rect x="598" y="707" width="10" height="2" fill="#a410d4"/><rect x="89" y="879" width="20" height="2" fill="#8a11e2"/><rect x="848" y="784" width="7" height="2" fill="#3d0ecb"/><rect x="570" y="870" width="15" height="2" fill="#8611e3"/><rect x="1046" y="741" width="15" height="1" fill="#4410d4"/><rect x="985" y="810" width="13" height="1" fill="#8811e3"/><rect x="272" y="709" width="16" height="1" fill="#ff3a51"/><rect x="550" y="897" width="18" height="1" fill="#d913b2"/><rect x="638" y="728" width="5" height="1" fill="#6713ee"/><rect x="125" y="891" width="9" height="1" fill="#9110df"/><rect x="560" y="910" width="7" height="1" fill="#6d13ec"/><rect x="78" y="826" width="8" height="1" fill="#ff781f"/><rect x="322" y="705" width="7" height="2" fill="#ae10cf"/><rect x="191" y="797" width="17" height="1" fill="#e916a4"/><rect x="444" y="857" width="19" height="2" fill="#c710c1"/><rect x="532" y="761" width="14" height="1" fill="#7c12e7"/><rect x="500" y="734" width="20" height="1" fill="#7812e8"/><rect x="193" y="890" width="7" height="1" fill="#f61899"/><rect x="1003" y="785" width="18" height="1" fill="#3c0dc9"/><rect x="129" y="716" width="10" height="1" fill="#eb16a3"/><rect x="833" y="895" width="15" height="1" fill="#4f12df"/><rect x="124" y="914" width="11" height="1" fill="#ff5632"/><rect x="48" y="791" width="14" height="2" fill="#ea16a4"/><rect x="662" y="681" width="9" height="1" fill="#e214aa"/><rect x="225" y="782" width="15" height="2" fill="#b710ca"/><rect x="62" y="777" width="7" height="2" fill="#ff3457"/><rect x="611" y="752" width="16" height="1" fill="#5412e4"/><rect x="329" y="684" width="18" height="1" fill="#ff3457"/><rect x="197" y="807" width="18" height="1" fill="#ff3c4e"/><rect x="227" y="762" width="14" height="2" fill="#f5179b"/><rect x="662" y="884" width="16" height="1" fill="#2c03af"/><rect x="995" y="787" width="16" height="1" fill="#230097"/><rect x="151" y="910" width="22" height="1" fill="#fa1c8c"/><rect x="178" y="670" width="7" height="1" fill="#be10c6"/><rect x="593" y="692" width="10" height="2" fill="#db13b1"/><rect x="750" y="692" width="20" height="1" fill="#5613e6"/><rect x="46" y="682" width="8" height="1" fill="#ffa010"/><rect x="61" y="766" width="6" height="1" fill="#ffa010"/><rect x="418" y="862" width="6" height="1" fill="#8411e4"/><rect x="270" y="763" width="4" height="1" fill="#db13b0"/><rect x="190" y="735" width="19" height="1" fill="#ff2b63"/><rect x="1017" y="816" width="6" height="1" fill="#3c0dc9"/><rect x="483" y="795" width="18" height="1" fill="#df14ac"/><rect x="113" y="823" width="13" height="1" fill="#ce11bb"/><rect x="146" y="819" width="16" height="1" fill="#6b13ec"/><rect x="67" y="738" width="22" height="1" fill="#fa1c8c"/><rect x="170" y="757" width="19" height="1" fill="#8011e5"/><rect x="125" y="897" width="8" height="2" fill="#ed16a1"/><rect x="309" y="759" width="21" height="1" fill="#be10c6"/><rect x="46" y="719" width="11" height="1" fill="#ed16a1"/><rect x="555" y="875" width="14" height="1" fill="#9510dd"/><rect x="181" y="740" width="21" height="2" fill="#fc227c"/><rect x="249" y="837" width="22" height="2" fill="#c710c0"/><rect x="230" y="785" width="17" height="2" fill="#c210c3"/><rect x="71" y="739" width="6" height="1" fill="#ff7421"/><rect x="1043" y="723" width="14" height="2" fill="#6613ee"/><rect x="74" y="765" width="22" height="2" fill="#ff4546"/><rect x="227" y="691" width="15" height="1" fill="#ff3358"/><rect x="130" y="915" width="9" height="1" fill="#de14ad"/><rect x="907" y="887" width="22" height="1" fill="#4b11db"/><rect x="92" y="914" width="12" height="1" fill="#ff6427"/><rect x="469" y="701" width="10" height="2" fill="#2e04b1"/><rect x="130" y="708" width="11" height="1" fill="#d212b8"/><rect x="550" y="812" width="17" height="1" fill="#f1179e"/><rect x="1029" y="784" width="18" height="2" fill="#3f0fce"/><rect x="653" y="845" width="12" height="1" fill="#2600a2"/><rect x="163" y="719" width="8" height="1" fill="#8411e4"/><rect x="221" y="816" width="19" height="1" fill="#b810c9"/><rect x="116" y="913" width="20" height="1" fill="#ef16a0"/><rect x="617" y="713" width="6" height="2" fill="#3408bd"/><rect x="1045" y="846" width="7" height="1" fill="#370ac0"/><rect x="114" y="756" width="14" height="1" fill="#cd11bc"/><rect x="204" y="865" width="9" height="1" fill="#6e13eb"/><rect x="83" y="831" width="17" height="1" fill="#eb16a3"/><rect x="72" y="869" width="15" height="1" fill="#ff2b63"/><rect x="245" y="761" width="5" height="1" fill="#7612e9"/><rect x="653" y="829" width="16" height="1" fill="#5b13eb"/><rect x="78" y="719" width="8" height="1" fill="#ff325a"/><rect x="47" y="703" width="20" height="1" fill="#fa1f84"/><rect x="1045" y="755" width="10" height="2" fill="#5e14ee"/><rect x="58" y="711" width="21" height="2" fill="#fb2082"/><rect x="185" y="816" width="10" height="1" fill="#7412e9"/><rect x="251" y="804" width="13" height="2" fill="#ac10d0"/><rect x="285" y="874" width="4" height="1" fill="#ff3853"/><rect x="275" y="787" width="21" height="2" fill="#5b13eb"/><rect x="618" y="741" width="9" height="2" fill="#e114ac"/><rect x="186" y="742" width="7" height="1" fill="#ff4c3e"/><rect x="50" y="763" width="15" height="1" fill="#ff4f3a"/><rect x="410" y="870" width="21" height="1" fill="#b610ca"/><rect x="68" y="840" width="22" height="1" fill="#b710ca"/><rect x="658" y="714" width="21" height="2" fill="#a010d7"/><rect x="323" y="909" width="18" height="2" fill="#6913ed"/><rect x="485" y="909" width="22" height="1" fill="#4c11dc"/><rect x="505" y="745" width="22" height="1" fill="#3609bf"/><rect x="126" y="840" width="21" height="2" fill="#f5189a"/><rect x="392" y="879" width="13" height="2" fill="#7612e9"/><rect x="77" y="845" width="18" height="1" fill="#f81994"/><rect x="749" y="825" width="11" height="2" fill="#3207b9"/><rect x="1004" y="782" width="18" height="2" fill="#21008d"/><rect x="128" y="808" width="6" height="1" fill="#ff7221"/><rect x="1011" y="806" width="17" height="1" fill="#21008d"/><rect x="62" y="873" width="13" height="1" fill="#ff3c4e"/><rect x="175" y="774" width="9" height="1" fill="#4911d9"/><rect x="268" y="775" width="20" height="1" fill="#2e04b1"/><rect x="969" y="860" width="18" height="1" fill="#6c13ec"/><rect x="567" y="764" width="8" height="1" fill="#fa1e88"/><rect x="628" y="813" width="16" height="1" fill="#c510c2"/><rect x="1063" y="734" width="6" height="1" fill="#3a0cc6"/><rect x="880" y="817" width="15" height="2" fill="#3408bc"/><rect x="433" y="756" width="21" height="1" fill="#ca10be"/><rect x="905" y="883" width="7" height="1" fill="#370ac2"/><rect x="48" y="877" width="14" height="1" fill="#ffa010"/><rect x="971" y="805" width="10" height="1" fill="#3d0ecb"/><rect x="960" y="743" width="15" height="2" fill="#3d0ecc"/><rect x="651" y="788" width="13" height="1" fill="#5c13ec"/><rect x="315" y="874" width="16" height="1" fill="#ca10be"/><rect x="664" y="673" width="12" height="1" fill="#7e12e6"/><rect x="508" y="734" width="8" height="1" fill="#7812e8"/><rect x="185" y="766" width="16" height="1" fill="#ff7b1e"/><rect x="78" y="757" width="21" height="1" fill="#9110df"/><rect x="83" y="723" width="13" height="1" fill="#ffa010"/><rect x="436" y="900" width="5" height="1" fill="#9410de"/><rect x="248" y="677" width="11" height="2" fill="#ff4248"/><rect x="46" y="674" width="5" height="1" fill="#ff5732"/><rect x="756" y="911" width="16" height="1" fill="#6414ef"/><rect x="126" y="885" width="19" height="1" fill="#d212b8"/><rect x="53" y="803" width="14" height="2" fill="#bd10c6"/><rect x="65" y="734" width="12" height="1" fill="#ff6d23"/><rect x="1066" y="916" width="22" height="1" fill="#4310d3"/><rect x="67" y="711" width="6" height="1" fill="#a510d4"/><rect x="318" y="740" width="14" height="1" fill="#e214ab"/><rect x="797" y="688" width="22" height="2" fill="#7013eb"/><rect x="227" y="893" width="18" height="2" fill="#dc13af"/><rect x="675" y="875" width="5" height="2" fill="#d312b6"/><rect x="126" y="850" width="20" height="1" fill="#fd2671"/><rect x="971" y="774" width="17" height="1" fill="#100050"/><rect x="73" y="911" width="11" height="2" fill="#ea16a4"/><rect x="690" y="815" width="13" height="1" fill="#4410d4"/><rect x="586" y="715" width="10" height="1" fill="#9a10da"/><rect x="67" y="820" width="19" height="1" fill="#9010e0"/><rect x="639" y="726" width="10" height="2" fill="#5713e7"/><rect x="73" y="869" width="6" height="1" fill="#ff8e17"/></g><rect x="1069" y="668" width="2" height="250" fill="#ff3050"/></svg>
</body></html>
